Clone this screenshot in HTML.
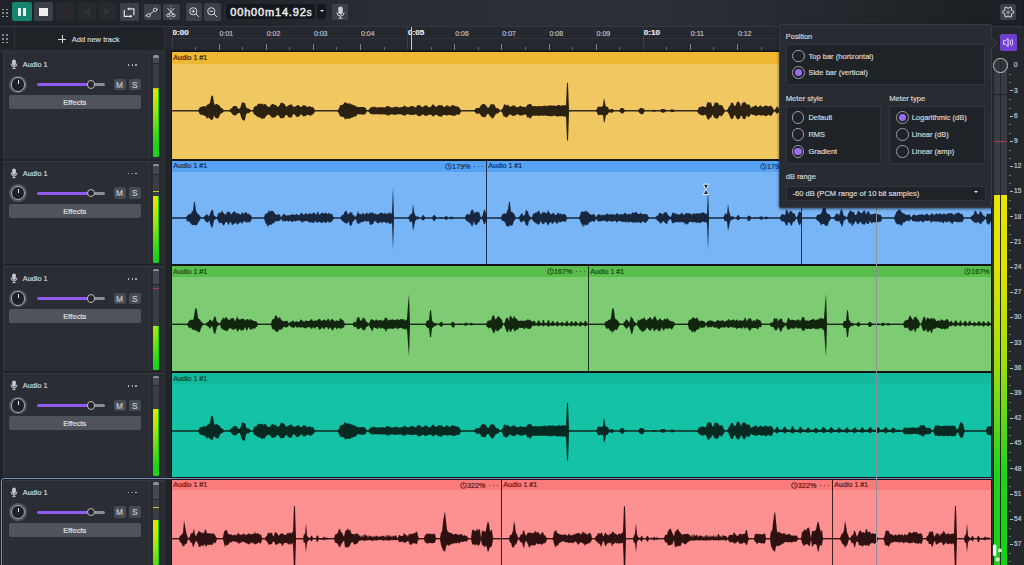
<!DOCTYPE html><html><head><meta charset="utf-8"><style>
*{box-sizing:border-box;margin:0;padding:0}
html,body{width:1024px;height:565px;overflow:hidden;background:#24272c;font-family:"Liberation Sans",sans-serif}
.a{position:absolute}
.btn{position:absolute;border-radius:2px}
.lbl{position:absolute;white-space:nowrap;line-height:1;-webkit-text-stroke:0.2px currentColor}
</style></head><body>

<div class="a" style="left:0;top:0;width:1024px;height:26px;background:linear-gradient(90deg,#1f2227 0px,#212429 240px,#292e34 380px,#2b3038 560px,#2a2f35 700px,#23272c 850px,#1d2025 960px,#1c1f24 1024px)"></div>
<div class="a" style="left:0;top:26px;width:1024px;height:1px;background:#33373d"></div>
<div class="a" style="left:2.3px;top:8.6px;width:1.6px;height:1.6px;background:#a9adb3;border-radius:1px"></div><div class="a" style="left:6.3px;top:8.6px;width:1.6px;height:1.6px;background:#a9adb3;border-radius:1px"></div><div class="a" style="left:2.3px;top:12.2px;width:1.6px;height:1.6px;background:#a9adb3;border-radius:1px"></div><div class="a" style="left:6.3px;top:12.2px;width:1.6px;height:1.6px;background:#a9adb3;border-radius:1px"></div><div class="a" style="left:2.3px;top:15.8px;width:1.6px;height:1.6px;background:#a9adb3;border-radius:1px"></div><div class="a" style="left:6.3px;top:15.8px;width:1.6px;height:1.6px;background:#a9adb3;border-radius:1px"></div>
<div class="btn" style="left:12.3px;top:2.4px;width:19.3px;height:18.8px;background:#16846f"><div class="a" style="left:5.6px;top:6px;width:2.9px;height:7.6px;background:#e8f3f1;border-radius:0.5px"></div><div class="a" style="left:10.6px;top:6px;width:2.9px;height:7.6px;background:#e8f3f1;border-radius:0.5px"></div></div>
<div class="btn" style="left:34.2px;top:2.4px;width:18.6px;height:18.8px;background:#3b3f46"><div class="a" style="left:5.3px;top:5.6px;width:8.2px;height:7.8px;background:#eef0f2;border-radius:0.5px"></div></div>
<div class="btn" style="left:55.6px;top:2.4px;width:18.4px;height:18.8px;background:#26292e"><div class="a" style="left:6px;top:6px;width:6.5px;height:6.5px;background:#33262a;border-radius:50%"></div></div>
<div class="btn" style="left:77.2px;top:2.4px;width:18.6px;height:18.8px;background:#26292e"><svg class="a" style="left:0;top:0" width="19" height="19"><path d="M6 5.5v8M13 5.5L7.5 9.5L13 13.5Z" fill="#33363b" stroke="#33363b" stroke-width="0.8"/></svg></div>
<div class="btn" style="left:98.8px;top:2.4px;width:16.8px;height:18.8px;background:#26292e"><svg class="a" style="left:0;top:0" width="19" height="19"><path d="M5.5 5.5L11 9.5L5.5 13.5Z" fill="#33363b"/></svg></div>
<div class="btn" style="left:119.9px;top:2.9px;width:18.7px;height:18px;background:#3b3f46"><svg class="a" style="left:0;top:0" width="19" height="19"><path d="M9 5.9H13.9V12.3M4.3 6.9V13.3H10.2" fill="none" stroke="#dfe2e5" stroke-width="1.2"/><path d="M7 5.9L9.4 4.2V7.6Z M12.4 13.3L10 11.6V15Z" fill="#dfe2e5"/></svg></div>
<div class="a" style="left:141.5px;top:3px;width:1px;height:18px;background:#282b30"></div>
<div class="btn" style="left:144.3px;top:3.9px;width:16.5px;height:16.1px;background:#3b3f46"><svg class="a" style="left:0;top:0" width="17" height="17"><path d="M1.2 11.9L3 11.6M6 10.2L9.7 7M12.6 5.5L14.2 5.3" fill="none" stroke="#d4d7da" stroke-width="1"/><circle cx="4.6" cy="11.3" r="1.7" fill="none" stroke="#d4d7da" stroke-width="1"/><circle cx="11.1" cy="5.8" r="1.7" fill="none" stroke="#d4d7da" stroke-width="1"/></svg></div>
<div class="btn" style="left:163.4px;top:3.9px;width:16.5px;height:15.8px;background:#3b3f46"><svg class="a" style="left:0;top:0" width="17" height="17"><path d="M7.9 1.5v14" stroke="#d4d7da" stroke-width="0.9" stroke-dasharray="1.1 1.4"/><path d="M4.6 4.2L10.6 10.6M11.2 4.2L5.2 10.6" stroke="#d4d7da" stroke-width="1"/><circle cx="5.2" cy="11.4" r="1.5" fill="none" stroke="#d4d7da" stroke-width="1"/><circle cx="10.6" cy="11.4" r="1.5" fill="none" stroke="#d4d7da" stroke-width="1"/></svg></div>
<div class="a" style="left:182.7px;top:3px;width:1px;height:18px;background:#282b30"></div>
<div class="btn" style="left:185.7px;top:3px;width:16.3px;height:17.6px;background:#3b3f46"><svg class="a" style="left:0;top:0" width="17" height="19"><circle cx="7.3" cy="8.3" r="3.6" fill="none" stroke="#d4d7da" stroke-width="1"/><path d="M10 11l3 3M5.6 8.3h3.4M7.3 6.6v3.4" stroke="#d4d7da" stroke-width="1"/></svg></div>
<div class="btn" style="left:204.3px;top:3px;width:16.6px;height:17.6px;background:#3b3f46"><svg class="a" style="left:0;top:0" width="17" height="19"><circle cx="7.3" cy="8.3" r="3.6" fill="none" stroke="#d4d7da" stroke-width="1"/><path d="M10 11l3 3M5.6 8.3h3.4" stroke="#d4d7da" stroke-width="1"/></svg></div>
<div class="a" style="left:223.6px;top:3px;width:1px;height:18px;background:#282b30"></div>
<div class="btn" style="left:226.2px;top:3.8px;width:89.2px;height:15.6px;background:#14171b"></div>
<div class="lbl" style="left:230.3px;top:6.6px;font-size:11px;font-weight:normal;color:#e8eaec;letter-spacing:0.82px;-webkit-text-stroke:0.5px #e8eaec">00h00m14.92<span style="font-size:10.5px;letter-spacing:0;-webkit-text-stroke:0.3px #e8eaec">s</span></div>
<div class="btn" style="left:317px;top:3.8px;width:9.3px;height:15.6px;background:#14171b"><div class="a" style="left:2.6px;top:6.6px;width:0;height:0;border-left:2.2px solid transparent;border-right:2.2px solid transparent;border-top:2.6px solid #e8eaec"></div></div>
<div class="btn" style="left:331.8px;top:3.8px;width:16.7px;height:16px;background:#3b3f46"><svg class="a" style="left:0;top:0" width="17" height="16"><rect x="6.2" y="2.5" width="4.6" height="8" rx="2.3" fill="#c9ccd0"/><path d="M4.8 8.5q0 3.5 3.7 3.5q3.7 0 3.7-3.5M8.5 12v2.2M6.5 14.2h4" fill="none" stroke="#c9ccd0" stroke-width="1"/></svg></div>
<div class="btn" style="left:1000px;top:3.9px;width:16.3px;height:16.3px;background:#3b3f46"><svg class="a" style="left:0;top:0" width="17" height="17"><path d="M13.65,8.15 L13.58,8.51 L13.37,8.84 L13.06,9.13 L12.69,9.37 L12.31,9.56 L11.97,9.73 L11.70,9.90 L11.53,10.10 L11.44,10.35 L11.43,10.67 L11.45,11.05 L11.47,11.47 L11.45,11.91 L11.36,12.33 L11.17,12.67 L10.90,12.91 L10.56,13.03 L10.17,13.01 L9.76,12.89 L9.37,12.69 L9.01,12.46 L8.69,12.25 L8.41,12.10 L8.15,12.05 L7.89,12.10 L7.61,12.25 L7.29,12.46 L6.93,12.69 L6.54,12.89 L6.13,13.01 L5.74,13.03 L5.40,12.91 L5.13,12.67 L4.94,12.33 L4.85,11.91 L4.83,11.47 L4.85,11.05 L4.87,10.67 L4.86,10.35 L4.77,10.10 L4.60,9.90 L4.33,9.73 L3.99,9.56 L3.61,9.37 L3.24,9.13 L2.93,8.84 L2.72,8.51 L2.65,8.15 L2.72,7.79 L2.93,7.46 L3.24,7.17 L3.61,6.93 L3.99,6.74 L4.33,6.57 L4.60,6.40 L4.77,6.20 L4.86,5.95 L4.87,5.63 L4.85,5.25 L4.83,4.83 L4.85,4.39 L4.94,3.97 L5.13,3.63 L5.40,3.39 L5.74,3.27 L6.13,3.29 L6.54,3.41 L6.93,3.61 L7.29,3.84 L7.61,4.05 L7.89,4.20 L8.15,4.25 L8.41,4.20 L8.69,4.05 L9.01,3.84 L9.37,3.61 L9.76,3.41 L10.17,3.29 L10.56,3.27 L10.90,3.39 L11.17,3.63 L11.36,3.97 L11.45,4.39 L11.47,4.83 L11.45,5.25 L11.43,5.63 L11.44,5.95 L11.53,6.20 L11.70,6.40 L11.97,6.57 L12.31,6.74 L12.69,6.93 L13.06,7.17 L13.37,7.46 L13.58,7.79Z" fill="none" stroke="#c9ccd0" stroke-width="1.1" stroke-linejoin="round"/><circle cx="8.15" cy="8.15" r="1.7" fill="#8d9197"/></svg></div>
<div class="a" style="left:1023px;top:0;width:1px;height:565px;background:#15171a"></div>
<div class="a" style="left:0;top:27px;width:164px;height:23px;background:#1f2226"></div>
<div class="a" style="left:13.5px;top:27px;width:1px;height:23px;background:#2e3237"></div>
<div class="a" style="left:0;top:49.5px;width:164px;height:1px;background:#33373d"></div>
<div class="a" style="left:2.2px;top:34.4px;width:1.6px;height:1.6px;background:#a9adb3;border-radius:1px"></div><div class="a" style="left:6.2px;top:34.4px;width:1.6px;height:1.6px;background:#a9adb3;border-radius:1px"></div><div class="a" style="left:2.2px;top:38.0px;width:1.6px;height:1.6px;background:#a9adb3;border-radius:1px"></div><div class="a" style="left:6.2px;top:38.0px;width:1.6px;height:1.6px;background:#a9adb3;border-radius:1px"></div><div class="a" style="left:2.2px;top:41.6px;width:1.6px;height:1.6px;background:#a9adb3;border-radius:1px"></div><div class="a" style="left:6.2px;top:41.6px;width:1.6px;height:1.6px;background:#a9adb3;border-radius:1px"></div>
<div class="a" style="left:58px;top:38.5px;width:8.4px;height:1.1px;background:#d6d9dc"></div><div class="a" style="left:61.65px;top:34.5px;width:1.1px;height:8.6px;background:#d6d9dc"></div>
<div class="lbl" style="left:71.7px;top:35.6px;font-size:7.55px;color:#cfd2d5">Add new track</div>
<div class="a" style="left:163.5px;top:27px;width:1px;height:538px;background:#2f3338"></div>
<div class="a" style="left:164.5px;top:27px;width:828px;height:24px;background:#25282e"></div>
<div class="a" style="left:171.5px;top:37.8px;width:821px;height:1px;background:#30343a"></div>
<div class="lbl" style="left:172.5px;top:29.0px;font-size:8.1px;font-weight:bold;color:#eceef0">0:00</div>
<div class="a" style="left:171.5px;top:27px;width:1px;height:23px;background:#3a3e44"></div>
<div class="a" style="left:195.1px;top:46.5px;width:1px;height:3.5px;background:#6a6e74"></div>
<div class="lbl" style="left:219.6px;top:29.6px;font-size:7.0px;font-weight:normal;color:#b9bdc2">0:01</div>
<div class="a" style="left:218.6px;top:43.5px;width:1px;height:6.5px;background:#7d8187"></div>
<div class="a" style="left:242.2px;top:46.5px;width:1px;height:3.5px;background:#6a6e74"></div>
<div class="lbl" style="left:266.7px;top:29.6px;font-size:7.0px;font-weight:normal;color:#b9bdc2">0:02</div>
<div class="a" style="left:265.7px;top:43.5px;width:1px;height:6.5px;background:#7d8187"></div>
<div class="a" style="left:289.3px;top:46.5px;width:1px;height:3.5px;background:#6a6e74"></div>
<div class="lbl" style="left:313.9px;top:29.6px;font-size:7.0px;font-weight:normal;color:#b9bdc2">0:03</div>
<div class="a" style="left:312.9px;top:43.5px;width:1px;height:6.5px;background:#7d8187"></div>
<div class="a" style="left:336.4px;top:46.5px;width:1px;height:3.5px;background:#6a6e74"></div>
<div class="lbl" style="left:361.0px;top:29.6px;font-size:7.0px;font-weight:normal;color:#b9bdc2">0:04</div>
<div class="a" style="left:360.0px;top:43.5px;width:1px;height:6.5px;background:#7d8187"></div>
<div class="a" style="left:383.5px;top:46.5px;width:1px;height:3.5px;background:#6a6e74"></div>
<div class="lbl" style="left:408.1px;top:29.0px;font-size:8.1px;font-weight:bold;color:#eceef0">0:05</div>
<div class="a" style="left:407.1px;top:27px;width:1px;height:23px;background:#3a3e44"></div>
<div class="a" style="left:430.7px;top:46.5px;width:1px;height:3.5px;background:#6a6e74"></div>
<div class="lbl" style="left:455.2px;top:29.6px;font-size:7.0px;font-weight:normal;color:#b9bdc2">0:06</div>
<div class="a" style="left:454.2px;top:43.5px;width:1px;height:6.5px;background:#7d8187"></div>
<div class="a" style="left:477.8px;top:46.5px;width:1px;height:3.5px;background:#6a6e74"></div>
<div class="lbl" style="left:502.3px;top:29.6px;font-size:7.0px;font-weight:normal;color:#b9bdc2">0:07</div>
<div class="a" style="left:501.3px;top:43.5px;width:1px;height:6.5px;background:#7d8187"></div>
<div class="a" style="left:524.9px;top:46.5px;width:1px;height:3.5px;background:#6a6e74"></div>
<div class="lbl" style="left:549.5px;top:29.6px;font-size:7.0px;font-weight:normal;color:#b9bdc2">0:08</div>
<div class="a" style="left:548.5px;top:43.5px;width:1px;height:6.5px;background:#7d8187"></div>
<div class="a" style="left:572.0px;top:46.5px;width:1px;height:3.5px;background:#6a6e74"></div>
<div class="lbl" style="left:596.6px;top:29.6px;font-size:7.0px;font-weight:normal;color:#b9bdc2">0:09</div>
<div class="a" style="left:595.6px;top:43.5px;width:1px;height:6.5px;background:#7d8187"></div>
<div class="a" style="left:619.1px;top:46.5px;width:1px;height:3.5px;background:#6a6e74"></div>
<div class="lbl" style="left:643.7px;top:29.0px;font-size:8.1px;font-weight:bold;color:#eceef0">0:10</div>
<div class="a" style="left:642.7px;top:27px;width:1px;height:23px;background:#3a3e44"></div>
<div class="a" style="left:666.3px;top:46.5px;width:1px;height:3.5px;background:#6a6e74"></div>
<div class="lbl" style="left:690.8px;top:29.6px;font-size:7.0px;font-weight:normal;color:#b9bdc2">0:11</div>
<div class="a" style="left:689.8px;top:43.5px;width:1px;height:6.5px;background:#7d8187"></div>
<div class="a" style="left:713.4px;top:46.5px;width:1px;height:3.5px;background:#6a6e74"></div>
<div class="lbl" style="left:737.9px;top:29.6px;font-size:7.0px;font-weight:normal;color:#b9bdc2">0:12</div>
<div class="a" style="left:736.9px;top:43.5px;width:1px;height:6.5px;background:#7d8187"></div>
<div class="a" style="left:760.5px;top:46.5px;width:1px;height:3.5px;background:#6a6e74"></div>
<div class="a" style="left:411.2px;top:27px;width:1px;height:23px;background:#c9ccd0"></div>
<div class="a" style="left:164.5px;top:50px;width:828px;height:1.5px;background:#1a1c20"></div>
<div class="a" style="left:164.5px;top:51px;width:827px;height:514px;background:#212429"></div>
<div class="a" style="left:171px;top:51px;width:820.5px;height:514px;background:#131519"></div>
<div class="a" style="left:0;top:51.5px;width:163.5px;height:108.0px;background:#1f2226"></div>
<div class="a" style="left:3px;top:52.0px;width:145.5px;height:106.5px;background:#2a2e34;border-top:1px solid #363a40;border-left:1px solid #33373d"></div>
<div class="a" style="left:148.5px;top:52.0px;width:15px;height:106.5px;background:#282b31;border-left:1px solid #33373d;border-top:1px solid #363a40"></div>
<svg class="a" style="left:9.8px;top:59.3px" width="8" height="11"><rect x="2.1" y="0.4" width="3.8" height="6.6" rx="1.9" fill="#c3c6ca"/><path d="M1 4.6q0 3.4 3 3.4q3 0 3-3.4M4 8v1.4M2.4 9.6h3.2" fill="none" stroke="#c3c6ca" stroke-width="0.95"/></svg>
<div class="lbl" style="left:22.8px;top:61px;font-size:7.3px;color:#d2d5d8">Audio 1</div>
<div class="a" style="left:127.6px;top:64.3px;width:1.5px;height:1.5px;background:#c9ccd0;border-radius:1px"></div>
<div class="a" style="left:131.5px;top:64.3px;width:1.5px;height:1.5px;background:#c9ccd0;border-radius:1px"></div>
<div class="a" style="left:135.4px;top:64.3px;width:1.5px;height:1.5px;background:#c9ccd0;border-radius:1px"></div>
<div class="a" style="left:9.4px;top:75.8px;width:17.4px;height:17.4px;border-radius:50%;background:#52565c"></div>
<div class="a" style="left:10.9px;top:77.3px;width:14.4px;height:14.4px;border-radius:50%;background:#1e2125;border:1.2px solid #a9adb2"></div>
<div class="a" style="left:17.7px;top:80px;width:1.1px;height:4.2px;background:#e6e8ea"></div>
<div class="a" style="left:37.1px;top:83px;width:54px;height:3px;border-radius:1.5px;background:#8e5cf0"></div>
<div class="a" style="left:90px;top:83px;width:14.8px;height:3px;border-radius:1.5px;background:#8a8d92"></div>
<div class="a" style="left:86.7px;top:80.4px;width:8.2px;height:8.2px;border-radius:50%;background:#24272c;border:1.1px solid #b6b9bd"></div>
<div class="btn" style="left:114.4px;top:78.5px;width:11.8px;height:11.8px;background:#464a51"><div class="lbl" style="left:1.6px;top:2.4px;font-size:8.4px;color:#c3c6ca">M</div></div>
<div class="btn" style="left:129.1px;top:78.5px;width:11.9px;height:11.8px;background:#464a51"><div class="lbl" style="left:3px;top:2.4px;font-size:8.4px;color:#c3c6ca">S</div></div>
<div class="btn" style="left:8.8px;top:95.3px;width:132.2px;height:14px;background:#4f535a"><div class="lbl" style="left:0;width:132px;text-align:center;top:3.8px;font-size:7.65px;color:#dde0e3">Effects</div></div>
<div class="a" style="left:0;top:160.0px;width:163.5px;height:104.5px;background:#1f2226"></div>
<div class="a" style="left:3px;top:160.5px;width:145.5px;height:103.0px;background:#2a2e34;border-top:1px solid #363a40;border-left:1px solid #33373d"></div>
<div class="a" style="left:148.5px;top:160.5px;width:15px;height:103.0px;background:#282b31;border-left:1px solid #33373d;border-top:1px solid #363a40"></div>
<svg class="a" style="left:9.8px;top:167.8px" width="8" height="11"><rect x="2.1" y="0.4" width="3.8" height="6.6" rx="1.9" fill="#c3c6ca"/><path d="M1 4.6q0 3.4 3 3.4q3 0 3-3.4M4 8v1.4M2.4 9.6h3.2" fill="none" stroke="#c3c6ca" stroke-width="0.95"/></svg>
<div class="lbl" style="left:22.8px;top:169.5px;font-size:7.3px;color:#d2d5d8">Audio 1</div>
<div class="a" style="left:127.6px;top:172.8px;width:1.5px;height:1.5px;background:#c9ccd0;border-radius:1px"></div>
<div class="a" style="left:131.5px;top:172.8px;width:1.5px;height:1.5px;background:#c9ccd0;border-radius:1px"></div>
<div class="a" style="left:135.4px;top:172.8px;width:1.5px;height:1.5px;background:#c9ccd0;border-radius:1px"></div>
<div class="a" style="left:9.4px;top:184.3px;width:17.4px;height:17.4px;border-radius:50%;background:#52565c"></div>
<div class="a" style="left:10.9px;top:185.8px;width:14.4px;height:14.4px;border-radius:50%;background:#1e2125;border:1.2px solid #a9adb2"></div>
<div class="a" style="left:17.7px;top:188.5px;width:1.1px;height:4.2px;background:#e6e8ea"></div>
<div class="a" style="left:37.1px;top:191.5px;width:54px;height:3px;border-radius:1.5px;background:#8e5cf0"></div>
<div class="a" style="left:90px;top:191.5px;width:14.8px;height:3px;border-radius:1.5px;background:#8a8d92"></div>
<div class="a" style="left:86.7px;top:188.9px;width:8.2px;height:8.2px;border-radius:50%;background:#24272c;border:1.1px solid #b6b9bd"></div>
<div class="btn" style="left:114.4px;top:187.0px;width:11.8px;height:11.8px;background:#464a51"><div class="lbl" style="left:1.6px;top:2.4px;font-size:8.4px;color:#c3c6ca">M</div></div>
<div class="btn" style="left:129.1px;top:187.0px;width:11.9px;height:11.8px;background:#464a51"><div class="lbl" style="left:3px;top:2.4px;font-size:8.4px;color:#c3c6ca">S</div></div>
<div class="btn" style="left:8.8px;top:203.8px;width:132.2px;height:14px;background:#4f535a"><div class="lbl" style="left:0;width:132px;text-align:center;top:3.8px;font-size:7.65px;color:#dde0e3">Effects</div></div>
<div class="a" style="left:0;top:265.5px;width:163.5px;height:106.5px;background:#1f2226"></div>
<div class="a" style="left:3px;top:266.0px;width:145.5px;height:105.0px;background:#2a2e34;border-top:1px solid #363a40;border-left:1px solid #33373d"></div>
<div class="a" style="left:148.5px;top:266.0px;width:15px;height:105.0px;background:#282b31;border-left:1px solid #33373d;border-top:1px solid #363a40"></div>
<svg class="a" style="left:9.8px;top:273.3px" width="8" height="11"><rect x="2.1" y="0.4" width="3.8" height="6.6" rx="1.9" fill="#c3c6ca"/><path d="M1 4.6q0 3.4 3 3.4q3 0 3-3.4M4 8v1.4M2.4 9.6h3.2" fill="none" stroke="#c3c6ca" stroke-width="0.95"/></svg>
<div class="lbl" style="left:22.8px;top:275px;font-size:7.3px;color:#d2d5d8">Audio 1</div>
<div class="a" style="left:127.6px;top:278.3px;width:1.5px;height:1.5px;background:#c9ccd0;border-radius:1px"></div>
<div class="a" style="left:131.5px;top:278.3px;width:1.5px;height:1.5px;background:#c9ccd0;border-radius:1px"></div>
<div class="a" style="left:135.4px;top:278.3px;width:1.5px;height:1.5px;background:#c9ccd0;border-radius:1px"></div>
<div class="a" style="left:9.4px;top:289.8px;width:17.4px;height:17.4px;border-radius:50%;background:#52565c"></div>
<div class="a" style="left:10.9px;top:291.3px;width:14.4px;height:14.4px;border-radius:50%;background:#1e2125;border:1.2px solid #a9adb2"></div>
<div class="a" style="left:17.7px;top:294px;width:1.1px;height:4.2px;background:#e6e8ea"></div>
<div class="a" style="left:37.1px;top:297px;width:54px;height:3px;border-radius:1.5px;background:#8e5cf0"></div>
<div class="a" style="left:90px;top:297px;width:14.8px;height:3px;border-radius:1.5px;background:#8a8d92"></div>
<div class="a" style="left:86.7px;top:294.4px;width:8.2px;height:8.2px;border-radius:50%;background:#24272c;border:1.1px solid #b6b9bd"></div>
<div class="btn" style="left:114.4px;top:292.5px;width:11.8px;height:11.8px;background:#464a51"><div class="lbl" style="left:1.6px;top:2.4px;font-size:8.4px;color:#c3c6ca">M</div></div>
<div class="btn" style="left:129.1px;top:292.5px;width:11.9px;height:11.8px;background:#464a51"><div class="lbl" style="left:3px;top:2.4px;font-size:8.4px;color:#c3c6ca">S</div></div>
<div class="btn" style="left:8.8px;top:309.3px;width:132.2px;height:14px;background:#4f535a"><div class="lbl" style="left:0;width:132px;text-align:center;top:3.8px;font-size:7.65px;color:#dde0e3">Effects</div></div>
<div class="a" style="left:0;top:372.5px;width:163.5px;height:105.69999999999999px;background:#1f2226"></div>
<div class="a" style="left:3px;top:373.0px;width:145.5px;height:104.19999999999999px;background:#2a2e34;border-top:1px solid #363a40;border-left:1px solid #33373d"></div>
<div class="a" style="left:148.5px;top:373.0px;width:15px;height:104.19999999999999px;background:#282b31;border-left:1px solid #33373d;border-top:1px solid #363a40"></div>
<svg class="a" style="left:9.8px;top:380.3px" width="8" height="11"><rect x="2.1" y="0.4" width="3.8" height="6.6" rx="1.9" fill="#c3c6ca"/><path d="M1 4.6q0 3.4 3 3.4q3 0 3-3.4M4 8v1.4M2.4 9.6h3.2" fill="none" stroke="#c3c6ca" stroke-width="0.95"/></svg>
<div class="lbl" style="left:22.8px;top:382px;font-size:7.3px;color:#d2d5d8">Audio 1</div>
<div class="a" style="left:127.6px;top:385.3px;width:1.5px;height:1.5px;background:#c9ccd0;border-radius:1px"></div>
<div class="a" style="left:131.5px;top:385.3px;width:1.5px;height:1.5px;background:#c9ccd0;border-radius:1px"></div>
<div class="a" style="left:135.4px;top:385.3px;width:1.5px;height:1.5px;background:#c9ccd0;border-radius:1px"></div>
<div class="a" style="left:9.4px;top:396.8px;width:17.4px;height:17.4px;border-radius:50%;background:#52565c"></div>
<div class="a" style="left:10.9px;top:398.3px;width:14.4px;height:14.4px;border-radius:50%;background:#1e2125;border:1.2px solid #a9adb2"></div>
<div class="a" style="left:17.7px;top:401px;width:1.1px;height:4.2px;background:#e6e8ea"></div>
<div class="a" style="left:37.1px;top:404px;width:54px;height:3px;border-radius:1.5px;background:#8e5cf0"></div>
<div class="a" style="left:90px;top:404px;width:14.8px;height:3px;border-radius:1.5px;background:#8a8d92"></div>
<div class="a" style="left:86.7px;top:401.4px;width:8.2px;height:8.2px;border-radius:50%;background:#24272c;border:1.1px solid #b6b9bd"></div>
<div class="btn" style="left:114.4px;top:399.5px;width:11.8px;height:11.8px;background:#464a51"><div class="lbl" style="left:1.6px;top:2.4px;font-size:8.4px;color:#c3c6ca">M</div></div>
<div class="btn" style="left:129.1px;top:399.5px;width:11.9px;height:11.8px;background:#464a51"><div class="lbl" style="left:3px;top:2.4px;font-size:8.4px;color:#c3c6ca">S</div></div>
<div class="btn" style="left:8.8px;top:416.3px;width:132.2px;height:14px;background:#4f535a"><div class="lbl" style="left:0;width:132px;text-align:center;top:3.8px;font-size:7.65px;color:#dde0e3">Effects</div></div>
<div class="a" style="left:0;top:479.1px;width:163.5px;height:85.89999999999998px;background:#1f2226"></div>
<div class="a" style="left:3px;top:479.6px;width:145.5px;height:85.39999999999998px;background:#2a2e34;border-top:1px solid #363a40;border-left:1px solid #33373d"></div>
<div class="a" style="left:148.5px;top:479.6px;width:15px;height:85.39999999999998px;background:#282b31;border-left:1px solid #33373d;border-top:1px solid #363a40"></div>
<svg class="a" style="left:9.8px;top:486.90000000000003px" width="8" height="11"><rect x="2.1" y="0.4" width="3.8" height="6.6" rx="1.9" fill="#c3c6ca"/><path d="M1 4.6q0 3.4 3 3.4q3 0 3-3.4M4 8v1.4M2.4 9.6h3.2" fill="none" stroke="#c3c6ca" stroke-width="0.95"/></svg>
<div class="lbl" style="left:22.8px;top:488.6px;font-size:7.3px;color:#d2d5d8">Audio 1</div>
<div class="a" style="left:127.6px;top:491.90000000000003px;width:1.5px;height:1.5px;background:#c9ccd0;border-radius:1px"></div>
<div class="a" style="left:131.5px;top:491.90000000000003px;width:1.5px;height:1.5px;background:#c9ccd0;border-radius:1px"></div>
<div class="a" style="left:135.4px;top:491.90000000000003px;width:1.5px;height:1.5px;background:#c9ccd0;border-radius:1px"></div>
<div class="a" style="left:9.4px;top:503.40000000000003px;width:17.4px;height:17.4px;border-radius:50%;background:#52565c"></div>
<div class="a" style="left:10.9px;top:504.90000000000003px;width:14.4px;height:14.4px;border-radius:50%;background:#1e2125;border:1.2px solid #a9adb2"></div>
<div class="a" style="left:17.7px;top:507.6px;width:1.1px;height:4.2px;background:#e6e8ea"></div>
<div class="a" style="left:37.1px;top:510.6px;width:54px;height:3px;border-radius:1.5px;background:#8e5cf0"></div>
<div class="a" style="left:90px;top:510.6px;width:14.8px;height:3px;border-radius:1.5px;background:#8a8d92"></div>
<div class="a" style="left:86.7px;top:508.0px;width:8.2px;height:8.2px;border-radius:50%;background:#24272c;border:1.1px solid #b6b9bd"></div>
<div class="btn" style="left:114.4px;top:506.1px;width:11.8px;height:11.8px;background:#464a51"><div class="lbl" style="left:1.6px;top:2.4px;font-size:8.4px;color:#c3c6ca">M</div></div>
<div class="btn" style="left:129.1px;top:506.1px;width:11.9px;height:11.8px;background:#464a51"><div class="lbl" style="left:3px;top:2.4px;font-size:8.4px;color:#c3c6ca">S</div></div>
<div class="btn" style="left:8.8px;top:522.9px;width:132.2px;height:14px;background:#4f535a"><div class="lbl" style="left:0;width:132px;text-align:center;top:3.8px;font-size:7.65px;color:#dde0e3">Effects</div></div>
<div class="a" style="left:153.4px;top:55px;width:5.4px;height:102px;background:#3a3e44;border-radius:1.5px"></div>
<div class="a" style="left:153.4px;top:55px;width:5.4px;height:2.6px;background:#8b8f95;border-radius:1.5px 1.5px 0 0"></div>
<div class="a" style="left:153.4px;top:57.6px;width:5.4px;height:5.4px;background:#45494f"></div>
<div class="a" style="left:153.4px;top:63px;width:5.4px;height:1px;background:#24272c"></div>
<div class="a" style="left:153.4px;top:89px;width:5.4px;height:68px;border-radius:0 0 1.5px 1.5px;background:linear-gradient(180deg,#e6e400 0px,#e0e200 28.2px,#a8e00c 47.0px,#22d31c 79.9px,#18d018 94px);background-size:5.4px 94px;background-position:0 -26.0px;background-repeat:no-repeat;background-color:#18d018"></div>
<div class="a" style="left:153.4px;top:163.8px;width:5.4px;height:98.69999999999999px;background:#3a3e44;border-radius:1.5px"></div>
<div class="a" style="left:153.4px;top:163.8px;width:5.4px;height:2.6px;background:#8b8f95;border-radius:1.5px 1.5px 0 0"></div>
<div class="a" style="left:153.4px;top:166.4px;width:5.4px;height:7.599999999999989px;background:#45494f"></div>
<div class="a" style="left:153.4px;top:174px;width:5.4px;height:1px;background:#24272c"></div>
<div class="a" style="left:153.4px;top:196px;width:5.4px;height:66.5px;border-radius:0 0 1.5px 1.5px;background:linear-gradient(180deg,#e6e400 0px,#e0e200 28.2px,#a8e00c 47.0px,#22d31c 79.9px,#18d018 94px);background-size:5.4px 94px;background-position:0 -22.0px;background-repeat:no-repeat;background-color:#18d018"></div>
<div class="a" style="left:153.4px;top:268.8px;width:5.4px;height:101.19999999999999px;background:#3a3e44;border-radius:1.5px"></div>
<div class="a" style="left:153.4px;top:268.8px;width:5.4px;height:2.6px;background:#8b8f95;border-radius:1.5px 1.5px 0 0"></div>
<div class="a" style="left:153.4px;top:271.40000000000003px;width:5.4px;height:12.999999999999966px;background:#45494f"></div>
<div class="a" style="left:153.4px;top:284.4px;width:5.4px;height:1px;background:#24272c"></div>
<div class="a" style="left:153.4px;top:326.3px;width:5.4px;height:43.69999999999999px;border-radius:0 0 1.5px 1.5px;background:linear-gradient(180deg,#e6e400 0px,#e0e200 28.2px,#a8e00c 47.0px,#22d31c 79.9px,#18d018 94px);background-size:5.4px 94px;background-position:0 -41.9px;background-repeat:no-repeat;background-color:#18d018"></div>
<div class="a" style="left:153.4px;top:375.8px;width:5.4px;height:100.19999999999999px;background:#3a3e44;border-radius:1.5px"></div>
<div class="a" style="left:153.4px;top:375.8px;width:5.4px;height:2.6px;background:#8b8f95;border-radius:1.5px 1.5px 0 0"></div>
<div class="a" style="left:153.4px;top:378.40000000000003px;width:5.4px;height:6.200000000000012px;background:#45494f"></div>
<div class="a" style="left:153.4px;top:384.6px;width:5.4px;height:1px;background:#24272c"></div>
<div class="a" style="left:153.4px;top:409px;width:5.4px;height:67px;border-radius:0 0 1.5px 1.5px;background:linear-gradient(180deg,#e6e400 0px,#e0e200 28.2px,#a8e00c 47.0px,#22d31c 79.9px,#18d018 94px);background-size:5.4px 94px;background-position:0 -24.4px;background-repeat:no-repeat;background-color:#18d018"></div>
<div class="a" style="left:153.4px;top:482.3px;width:5.4px;height:82.69999999999999px;background:#3a3e44;border-radius:1.5px"></div>
<div class="a" style="left:153.4px;top:482.3px;width:5.4px;height:2.6px;background:#8b8f95;border-radius:1.5px 1.5px 0 0"></div>
<div class="a" style="left:153.4px;top:484.90000000000003px;width:5.4px;height:14.099999999999989px;background:#45494f"></div>
<div class="a" style="left:153.4px;top:499px;width:5.4px;height:1px;background:#24272c"></div>
<div class="a" style="left:153.4px;top:520px;width:5.4px;height:45px;border-radius:0 0 1.5px 1.5px;background:linear-gradient(180deg,#e6e400 0px,#e0e200 28.2px,#a8e00c 47.0px,#22d31c 79.9px,#18d018 94px);background-size:5.4px 94px;background-position:0 -21.0px;background-repeat:no-repeat;background-color:#18d018"></div>
<div class="a" style="left:153.4px;top:288.2px;width:5.4px;height:1.2px;background:#b03a4a"></div>
<div class="a" style="left:153.4px;top:88.3px;width:5.4px;height:1.2px;background:#c9c41a"></div>
<div class="a" style="left:153.4px;top:191.2px;width:5.4px;height:1.2px;background:#c9c41a"></div>
<div class="a" style="left:153.4px;top:507.2px;width:5.4px;height:1.2px;background:#c9c41a"></div>
<div class="a" style="left:171.5px;top:52px;width:819.7px;height:106.5px;background:#f1c761;overflow:hidden">
<div class="a" style="left:0;top:0;width:819.7px;height:11.5px;background:#efb832"></div>
<div class="lbl" style="left:1.8px;top:3.05px;font-size:7.1px;color:#33270c">Audio 1 #1</div>
<svg class="a" style="left:0;top:0" width="819.7" height="106.5"><rect x="0" y="58.3" width="819.7" height="1" fill="#2a2110"/><path d="M0.0,58.3 L1.0,58.3 L2.0,58.3 L3.0,58.3 L4.0,58.3 L5.0,58.3 L6.0,58.3 L7.0,58.3 L8.0,58.3 L9.0,58.3 L10.0,58.3 L11.0,58.3 L12.0,58.3 L13.0,58.3 L14.0,58.3 L15.0,58.3 L16.0,58.3 L17.0,58.3 L18.0,58.3 L19.0,58.3 L20.0,58.3 L21.0,58.3 L22.0,58.3 L23.0,58.3 L24.0,58.3 L25.0,58.3 L26.0,58.3 L27.0,57.1 L28.0,54.9 L29.0,55.1 L30.0,55.1 L31.0,54.1 L32.0,54.3 L33.0,54.4 L34.0,54.5 L35.0,52.8 L36.0,52.6 L37.0,51.7 L38.0,51.0 L39.0,44.9 L40.0,43.3 L41.0,44.3 L42.0,51.1 L43.0,52.9 L44.0,51.9 L45.0,52.1 L46.0,52.8 L47.0,53.2 L48.0,54.2 L49.0,56.1 L50.0,56.1 L51.0,57.2 L52.0,58.3 L53.0,58.3 L54.0,58.3 L55.0,58.3 L56.0,58.3 L57.0,58.3 L58.0,57.5 L59.0,56.5 L60.0,56.1 L61.0,54.6 L62.0,53.9 L63.0,53.9 L64.0,54.1 L65.0,54.5 L66.0,56.7 L67.0,56.7 L68.0,56.3 L69.0,53.8 L70.0,50.0 L71.0,50.6 L72.0,51.2 L73.0,50.7 L74.0,54.7 L75.0,56.3 L76.0,56.4 L77.0,56.4 L78.0,57.6 L79.0,58.3 L80.0,58.3 L81.0,58.1 L82.0,55.0 L83.0,54.2 L84.0,54.3 L85.0,53.5 L86.0,51.6 L87.0,52.2 L88.0,51.6 L89.0,52.1 L90.0,51.3 L91.0,52.8 L92.0,52.2 L93.0,52.0 L94.0,52.5 L95.0,54.2 L96.0,54.4 L97.0,55.1 L98.0,54.6 L99.0,53.0 L100.0,52.1 L101.0,52.1 L102.0,52.4 L103.0,53.0 L104.0,53.0 L105.0,54.2 L106.0,54.9 L107.0,54.1 L108.0,52.6 L109.0,50.2 L110.0,51.0 L111.0,51.0 L112.0,51.6 L113.0,52.7 L114.0,54.8 L115.0,54.4 L116.0,53.7 L117.0,53.1 L118.0,52.8 L119.0,52.5 L120.0,52.5 L121.0,54.9 L122.0,54.5 L123.0,54.7 L124.0,54.1 L125.0,53.6 L126.0,53.1 L127.0,53.2 L128.0,54.8 L129.0,54.8 L130.0,54.8 L131.0,52.9 L132.0,53.6 L133.0,53.2 L134.0,54.1 L135.0,55.1 L136.0,55.1 L137.0,54.1 L138.0,54.2 L139.0,55.3 L140.0,54.9 L141.0,55.1 L142.0,56.4 L143.0,58.3 L144.0,58.3 L145.0,58.3 L146.0,58.3 L147.0,58.3 L148.0,58.3 L149.0,58.3 L150.0,58.3 L151.0,58.3 L152.0,58.3 L153.0,58.3 L154.0,58.3 L155.0,58.3 L156.0,58.3 L157.0,58.3 L158.0,58.3 L159.0,58.3 L160.0,58.3 L161.0,58.3 L162.0,58.3 L163.0,58.3 L164.0,58.3 L165.0,58.3 L166.0,57.9 L167.0,56.6 L168.0,53.6 L169.0,53.0 L170.0,53.1 L171.0,52.4 L172.0,51.2 L173.0,49.9 L174.0,51.0 L175.0,51.1 L176.0,52.0 L177.0,50.9 L178.0,51.6 L179.0,52.4 L180.0,52.3 L181.0,52.9 L182.0,53.6 L183.0,53.2 L184.0,54.4 L185.0,54.8 L186.0,55.0 L187.0,55.3 L188.0,55.1 L189.0,55.0 L190.0,55.0 L191.0,55.1 L192.0,54.9 L193.0,55.6 L194.0,56.6 L195.0,58.3 L196.0,58.3 L197.0,57.5 L198.0,56.0 L199.0,55.3 L200.0,55.5 L201.0,54.4 L202.0,55.2 L203.0,54.6 L204.0,55.5 L205.0,55.4 L206.0,55.3 L207.0,55.5 L208.0,55.1 L209.0,55.2 L210.0,55.2 L211.0,55.2 L212.0,55.3 L213.0,55.7 L214.0,54.5 L215.0,53.9 L216.0,54.0 L217.0,54.6 L218.0,54.7 L219.0,55.5 L220.0,55.4 L221.0,55.5 L222.0,54.8 L223.0,54.8 L224.0,54.9 L225.0,54.4 L226.0,55.6 L227.0,55.3 L228.0,55.5 L229.0,55.1 L230.0,55.1 L231.0,54.9 L232.0,53.5 L233.0,53.8 L234.0,54.4 L235.0,55.2 L236.0,55.1 L237.0,55.3 L238.0,54.5 L239.0,54.0 L240.0,53.9 L241.0,54.5 L242.0,54.2 L243.0,55.2 L244.0,55.8 L245.0,53.5 L246.0,53.1 L247.0,53.2 L248.0,53.3 L249.0,54.2 L250.0,55.3 L251.0,55.0 L252.0,53.9 L253.0,53.4 L254.0,53.4 L255.0,53.4 L256.0,55.1 L257.0,54.8 L258.0,55.4 L259.0,54.5 L260.0,53.3 L261.0,52.1 L262.0,53.3 L263.0,54.0 L264.0,54.9 L265.0,54.6 L266.0,53.7 L267.0,52.8 L268.0,53.5 L269.0,53.3 L270.0,53.1 L271.0,54.6 L272.0,55.0 L273.0,55.0 L274.0,53.5 L275.0,53.5 L276.0,53.6 L277.0,54.6 L278.0,54.6 L279.0,54.5 L280.0,52.8 L281.0,53.3 L282.0,53.6 L283.0,53.7 L284.0,54.4 L285.0,54.4 L286.0,54.3 L287.0,55.7 L288.0,56.5 L289.0,58.3 L290.0,58.3 L291.0,58.3 L292.0,58.3 L293.0,58.3 L294.0,58.3 L295.0,58.3 L296.0,58.3 L297.0,58.3 L298.0,58.3 L299.0,58.3 L300.0,58.3 L301.0,58.3 L302.0,58.3 L303.0,57.5 L304.0,56.1 L305.0,56.0 L306.0,56.1 L307.0,56.1 L308.0,55.1 L309.0,53.1 L310.0,52.5 L311.0,51.9 L312.0,52.1 L313.0,52.3 L314.0,53.4 L315.0,55.0 L316.0,55.8 L317.0,55.5 L318.0,53.5 L319.0,52.1 L320.0,52.4 L321.0,52.3 L322.0,52.3 L323.0,53.8 L324.0,56.2 L325.0,55.9 L326.0,56.3 L327.0,57.0 L328.0,58.3 L329.0,58.3 L330.0,57.0 L331.0,55.7 L332.0,52.5 L333.0,52.3 L334.0,53.4 L335.0,53.2 L336.0,52.6 L337.0,54.0 L338.0,54.9 L339.0,54.4 L340.0,53.8 L341.0,53.4 L342.0,53.5 L343.0,53.4 L344.0,55.2 L345.0,54.9 L346.0,55.1 L347.0,54.8 L348.0,53.9 L349.0,53.8 L350.0,54.9 L351.0,54.5 L352.0,55.0 L353.0,55.0 L354.0,54.9 L355.0,53.2 L356.0,52.5 L357.0,52.2 L358.0,51.9 L359.0,52.1 L360.0,53.7 L361.0,54.2 L362.0,54.3 L363.0,53.9 L364.0,54.2 L365.0,54.4 L366.0,53.9 L367.0,54.3 L368.0,54.1 L369.0,54.0 L370.0,54.4 L371.0,54.0 L372.0,53.5 L373.0,53.5 L374.0,54.6 L375.0,53.5 L376.0,54.0 L377.0,53.4 L378.0,53.5 L379.0,53.3 L380.0,53.7 L381.0,53.5 L382.0,53.4 L383.0,53.9 L384.0,53.9 L385.0,53.6 L386.0,53.1 L387.0,53.1 L388.0,53.3 L389.0,54.0 L390.0,53.4 L391.0,53.0 L392.0,53.5 L393.0,53.1 L394.0,53.6 L395.0,30.3 L396.0,31.5 L397.0,57.9 L398.0,58.3 L399.0,58.3 L400.0,58.3 L401.0,58.3 L402.0,58.3 L403.0,58.3 L404.0,58.3 L405.0,58.3 L406.0,58.3 L407.0,58.3 L408.0,58.3 L409.0,58.3 L410.0,58.3 L411.0,58.3 L412.0,58.3 L413.0,58.3 L414.0,58.3 L415.0,58.3 L416.0,58.3 L417.0,58.3 L418.0,58.3 L419.0,58.3 L420.0,58.3 L421.0,58.3 L422.0,58.3 L423.0,58.3 L424.0,58.3 L425.0,56.8 L426.0,54.4 L427.0,54.4 L428.0,55.0 L429.0,54.4 L430.0,54.8 L431.0,53.3 L432.0,45.5 L433.0,50.8 L434.0,55.1 L435.0,54.4 L436.0,54.9 L437.0,57.4 L438.0,57.7 L439.0,57.1 L440.0,57.0 L441.0,57.3 L442.0,58.2 L443.0,58.3 L444.0,58.3 L445.0,58.3 L446.0,58.3 L447.0,58.3 L448.0,57.2 L449.0,55.9 L450.0,56.0 L451.0,56.0 L452.0,57.2 L453.0,58.3 L454.0,58.3 L455.0,58.3 L456.0,58.3 L457.0,58.3 L458.0,58.3 L459.0,58.3 L460.0,58.3 L461.0,58.3 L462.0,58.3 L463.0,58.3 L464.0,58.3 L465.0,58.3 L466.0,58.3 L467.0,57.5 L468.0,55.9 L469.0,55.9 L470.0,56.2 L471.0,56.2 L472.0,57.1 L473.0,58.3 L474.0,58.3 L475.0,58.3 L476.0,58.3 L477.0,58.3 L478.0,58.3 L479.0,58.3 L480.0,58.3 L481.0,58.0 L482.0,57.8 L483.0,58.0 L484.0,58.2 L485.0,58.3 L486.0,58.3 L487.0,58.3 L488.0,58.3 L489.0,57.3 L490.0,57.0 L491.0,56.9 L492.0,57.0 L493.0,57.2 L494.0,58.3 L495.0,58.3 L496.0,58.3 L497.0,58.3 L498.0,58.2 L499.0,57.4 L500.0,57.3 L501.0,57.4 L502.0,57.8 L503.0,58.3 L504.0,58.3 L505.0,58.3 L506.0,58.3 L507.0,58.3 L508.0,58.3 L509.0,58.3 L510.0,58.3 L511.0,58.3 L512.0,58.3 L513.0,58.3 L514.0,58.3 L515.0,58.3 L516.0,58.3 L517.0,58.3 L518.0,58.3 L519.0,58.3 L520.0,58.3 L521.0,58.3 L522.0,58.3 L523.0,58.3 L524.0,58.3 L525.0,58.3 L526.0,57.4 L527.0,54.9 L528.0,55.2 L529.0,55.1 L530.0,54.2 L531.0,54.3 L532.0,54.8 L533.0,55.0 L534.0,55.3 L535.0,51.0 L536.0,50.3 L537.0,50.2 L538.0,50.9 L539.0,49.9 L540.0,54.0 L541.0,54.6 L542.0,53.0 L543.0,50.0 L544.0,50.8 L545.0,50.7 L546.0,50.8 L547.0,53.1 L548.0,53.3 L549.0,53.1 L550.0,52.9 L551.0,55.0 L552.0,56.8 L553.0,58.3 L554.0,58.3 L555.0,58.3 L556.0,56.6 L557.0,54.4 L558.0,54.0 L559.0,50.8 L560.0,50.7 L561.0,50.8 L562.0,53.5 L563.0,54.3 L564.0,52.6 L565.0,49.9 L566.0,49.4 L567.0,50.0 L568.0,51.6 L569.0,54.7 L570.0,51.4 L571.0,50.5 L572.0,50.3 L573.0,50.1 L574.0,51.6 L575.0,53.1 L576.0,52.0 L577.0,52.7 L578.0,53.5 L579.0,56.4 L580.0,54.6 L581.0,55.1 L582.0,54.4 L583.0,53.4 L584.0,53.5 L585.0,53.9 L586.0,55.6 L587.0,54.4 L588.0,53.5 L589.0,53.4 L590.0,54.9 L591.0,54.4 L592.0,54.4 L593.0,53.5 L594.0,53.4 L595.0,54.1 L596.0,54.3 L597.0,54.4 L598.0,53.8 L599.0,53.7 L600.0,54.7 L601.0,55.9 L602.0,58.3 L603.0,57.5 L604.0,55.8 L605.0,54.5 L606.0,54.8 L607.0,57.5 L608.0,57.6 L609.0,57.7 L610.0,57.7 L611.0,56.7 L612.0,55.2 L613.0,54.5 L614.0,55.7 L615.0,57.3 L616.0,57.6 L617.0,57.6 L618.0,57.6 L619.0,57.0 L620.0,54.0 L621.0,54.5 L622.0,56.5 L623.0,57.7 L624.0,57.7 L625.0,57.8 L626.0,57.7 L627.0,56.4 L628.0,54.3 L629.0,55.1 L630.0,56.2 L631.0,57.7 L632.0,57.7 L633.0,57.7 L634.0,57.6 L635.0,56.5 L636.0,54.9 L637.0,55.7 L638.0,57.5 L639.0,57.7 L640.0,57.7 L641.0,57.6 L642.0,57.1 L643.0,55.9 L644.0,55.6 L645.0,56.3 L646.0,57.6 L647.0,57.6 L648.0,57.7 L649.0,57.7 L650.0,56.4 L651.0,54.9 L652.0,55.1 L653.0,56.2 L654.0,57.6 L655.0,57.6 L656.0,57.7 L657.0,57.7 L658.0,55.9 L659.0,54.8 L660.0,55.4 L661.0,57.0 L662.0,57.8 L663.0,57.7 L664.0,57.7 L665.0,57.7 L666.0,56.5 L667.0,55.2 L668.0,55.8 L669.0,57.3 L670.0,57.6 L671.0,57.7 L672.0,57.9 L673.0,57.4 L674.0,56.2 L675.0,55.1 L676.0,55.9 L677.0,57.6 L678.0,57.8 L679.0,57.7 L680.0,57.7 L681.0,57.0 L682.0,55.8 L683.0,55.2 L684.0,56.2 L685.0,57.7 L686.0,57.8 L687.0,57.6 L688.0,57.6 L689.0,56.5 L690.0,54.9 L691.0,55.5 L692.0,57.1 L693.0,57.6 L694.0,57.8 L695.0,57.6 L696.0,57.5 L697.0,56.2 L698.0,54.7 L699.0,55.4 L700.0,57.2 L701.0,57.6 L702.0,57.7 L703.0,57.8 L704.0,57.1 L705.0,55.8 L706.0,55.1 L707.0,55.4 L708.0,57.6 L709.0,57.6 L710.0,57.6 L711.0,57.7 L712.0,56.7 L713.0,55.5 L714.0,55.0 L715.0,56.2 L716.0,57.6 L717.0,57.6 L718.0,57.6 L719.0,57.7 L720.0,56.1 L721.0,55.3 L722.0,55.6 L723.0,57.0 L724.0,57.9 L725.0,57.7 L726.0,57.7 L727.0,57.7 L728.0,57.7 L729.0,58.0 L730.0,58.3 L731.0,57.3 L732.0,55.4 L733.0,55.4 L734.0,55.8 L735.0,55.3 L736.0,56.1 L737.0,56.0 L738.0,55.4 L739.0,55.6 L740.0,55.5 L741.0,55.3 L742.0,55.5 L743.0,56.0 L744.0,55.4 L745.0,55.7 L746.0,55.3 L747.0,55.4 L748.0,53.3 L749.0,52.9 L750.0,53.3 L751.0,52.9 L752.0,53.0 L753.0,54.2 L754.0,55.7 L755.0,55.6 L756.0,55.9 L757.0,55.6 L758.0,55.6 L759.0,57.2 L760.0,58.3 L761.0,58.3 L762.0,56.3 L763.0,53.5 L764.0,53.5 L765.0,53.4 L766.0,53.5 L767.0,53.3 L768.0,54.0 L769.0,54.1 L770.0,53.9 L771.0,54.0 L772.0,53.5 L773.0,53.7 L774.0,53.6 L775.0,53.4 L776.0,53.9 L777.0,53.4 L778.0,53.8 L779.0,53.4 L780.0,53.7 L781.0,53.3 L782.0,53.7 L783.0,53.8 L784.0,55.7 L785.0,57.6 L786.0,56.8 L787.0,54.2 L788.0,50.8 L789.0,50.0 L790.0,50.8 L791.0,51.7 L792.0,55.7 L793.0,58.3 L794.0,58.3 L795.0,58.3 L796.0,58.3 L797.0,58.3 L798.0,58.3 L799.0,58.3 L800.0,58.3 L801.0,58.3 L802.0,58.3 L803.0,58.3 L804.0,58.3 L805.0,58.3 L806.0,58.3 L807.0,58.3 L808.0,58.3 L809.0,58.3 L810.0,58.3 L811.0,58.3 L812.0,58.3 L813.0,58.3 L814.0,57.9 L815.0,55.2 L816.0,54.1 L817.0,54.4 L818.0,54.4 L819.0,54.0 L819.0,63.6 L818.0,62.6 L817.0,62.9 L816.0,62.8 L815.0,61.8 L814.0,59.4 L813.0,59.3 L812.0,59.3 L811.0,59.3 L810.0,59.3 L809.0,59.3 L808.0,59.3 L807.0,59.3 L806.0,59.3 L805.0,59.3 L804.0,59.3 L803.0,59.3 L802.0,59.3 L801.0,59.3 L800.0,59.3 L799.0,59.3 L798.0,59.3 L797.0,59.3 L796.0,59.3 L795.0,59.3 L794.0,59.3 L793.0,59.3 L792.0,61.1 L791.0,64.8 L790.0,65.9 L789.0,65.3 L788.0,65.2 L787.0,62.7 L786.0,60.1 L785.0,60.6 L784.0,63.4 L783.0,64.1 L782.0,64.2 L781.0,64.2 L780.0,64.2 L779.0,63.9 L778.0,64.0 L777.0,64.0 L776.0,64.2 L775.0,64.1 L774.0,63.5 L773.0,63.9 L772.0,64.3 L771.0,63.9 L770.0,63.5 L769.0,64.2 L768.0,63.5 L767.0,64.1 L766.0,64.0 L765.0,63.4 L764.0,64.0 L763.0,63.6 L762.0,61.1 L761.0,59.3 L760.0,59.3 L759.0,61.0 L758.0,62.1 L757.0,61.7 L756.0,62.3 L755.0,62.2 L754.0,61.7 L753.0,62.8 L752.0,63.7 L751.0,64.7 L750.0,64.0 L749.0,63.1 L748.0,62.9 L747.0,62.6 L746.0,62.2 L745.0,61.6 L744.0,62.2 L743.0,62.1 L742.0,61.5 L741.0,62.0 L740.0,62.2 L739.0,62.2 L738.0,62.0 L737.0,62.3 L736.0,61.6 L735.0,62.3 L734.0,62.0 L733.0,62.3 L732.0,61.6 L731.0,60.3 L730.0,59.3 L729.0,59.4 L728.0,59.9 L727.0,59.9 L726.0,59.9 L725.0,59.9 L724.0,59.7 L723.0,59.9 L722.0,60.9 L721.0,61.3 L720.0,60.3 L719.0,59.9 L718.0,59.9 L717.0,60.0 L716.0,60.0 L715.0,60.4 L714.0,61.3 L713.0,61.2 L712.0,60.1 L711.0,59.9 L710.0,59.9 L709.0,59.8 L708.0,59.9 L707.0,60.5 L706.0,61.0 L705.0,60.8 L704.0,59.7 L703.0,60.0 L702.0,59.9 L701.0,59.7 L700.0,59.9 L699.0,60.9 L698.0,61.1 L697.0,60.7 L696.0,60.0 L695.0,60.0 L694.0,60.0 L693.0,59.9 L692.0,59.9 L691.0,60.7 L690.0,60.9 L689.0,60.1 L688.0,59.9 L687.0,59.8 L686.0,60.0 L685.0,60.0 L684.0,60.1 L683.0,60.9 L682.0,61.3 L681.0,59.9 L680.0,59.9 L679.0,59.9 L678.0,59.9 L677.0,60.0 L676.0,60.2 L675.0,61.2 L674.0,60.8 L673.0,59.8 L672.0,60.0 L671.0,60.0 L670.0,59.9 L669.0,59.8 L668.0,60.4 L667.0,61.1 L666.0,60.3 L665.0,60.0 L664.0,60.0 L663.0,59.9 L662.0,59.8 L661.0,60.0 L660.0,60.9 L659.0,61.3 L658.0,60.4 L657.0,59.9 L656.0,60.0 L655.0,59.8 L654.0,59.9 L653.0,60.4 L652.0,61.1 L651.0,61.0 L650.0,59.9 L649.0,59.8 L648.0,60.0 L647.0,59.9 L646.0,59.9 L645.0,60.8 L644.0,61.3 L643.0,60.9 L642.0,60.0 L641.0,60.0 L640.0,59.8 L639.0,60.0 L638.0,59.9 L637.0,60.6 L636.0,60.5 L635.0,60.8 L634.0,59.9 L633.0,59.9 L632.0,59.9 L631.0,59.8 L630.0,59.9 L629.0,61.4 L628.0,61.4 L627.0,60.3 L626.0,59.8 L625.0,59.9 L624.0,60.0 L623.0,59.9 L622.0,60.8 L621.0,61.1 L620.0,61.5 L619.0,60.4 L618.0,59.8 L617.0,60.0 L616.0,59.9 L615.0,60.0 L614.0,60.4 L613.0,61.5 L612.0,61.2 L611.0,59.7 L610.0,59.9 L609.0,60.0 L608.0,59.9 L607.0,60.0 L606.0,61.0 L605.0,61.7 L604.0,61.1 L603.0,59.6 L602.0,59.3 L601.0,61.2 L600.0,63.1 L599.0,64.1 L598.0,63.6 L597.0,63.2 L596.0,62.5 L595.0,64.2 L594.0,63.8 L593.0,64.2 L592.0,62.9 L591.0,63.2 L590.0,63.3 L589.0,64.0 L588.0,62.7 L587.0,63.0 L586.0,63.0 L585.0,63.8 L584.0,63.9 L583.0,63.5 L582.0,62.8 L581.0,62.7 L580.0,63.0 L579.0,61.4 L578.0,64.0 L577.0,64.5 L576.0,65.4 L575.0,63.3 L574.0,64.7 L573.0,67.4 L572.0,66.8 L571.0,66.9 L570.0,64.2 L569.0,63.2 L568.0,66.0 L567.0,66.9 L566.0,67.8 L565.0,66.4 L564.0,65.8 L563.0,62.9 L562.0,63.5 L561.0,66.9 L560.0,66.4 L559.0,67.2 L558.0,64.5 L557.0,62.4 L556.0,60.4 L555.0,59.3 L554.0,59.3 L553.0,59.3 L552.0,61.2 L551.0,62.4 L550.0,64.1 L549.0,64.6 L548.0,62.9 L547.0,64.3 L546.0,66.3 L545.0,66.8 L544.0,66.2 L543.0,66.3 L542.0,65.5 L541.0,62.8 L540.0,63.3 L539.0,66.0 L538.0,65.6 L537.0,67.8 L536.0,67.4 L535.0,66.2 L534.0,63.3 L533.0,62.6 L532.0,63.2 L531.0,63.6 L530.0,63.5 L529.0,62.8 L528.0,62.7 L527.0,61.9 L526.0,60.7 L525.0,59.3 L524.0,59.3 L523.0,59.3 L522.0,59.3 L521.0,59.3 L520.0,59.3 L519.0,59.3 L518.0,59.3 L517.0,59.3 L516.0,59.3 L515.0,59.3 L514.0,59.3 L513.0,59.3 L512.0,59.3 L511.0,59.3 L510.0,59.3 L509.0,59.3 L508.0,59.3 L507.0,59.3 L506.0,59.3 L505.0,59.3 L504.0,59.3 L503.0,59.3 L502.0,59.7 L501.0,60.1 L500.0,60.3 L499.0,60.0 L498.0,59.3 L497.0,59.3 L496.0,59.3 L495.0,59.3 L494.0,59.4 L493.0,60.1 L492.0,60.7 L491.0,60.8 L490.0,60.5 L489.0,59.8 L488.0,59.3 L487.0,59.3 L486.0,59.3 L485.0,59.3 L484.0,59.3 L483.0,59.7 L482.0,59.8 L481.0,59.8 L480.0,59.3 L479.0,59.3 L478.0,59.3 L477.0,59.3 L476.0,59.3 L475.0,59.3 L474.0,59.3 L473.0,59.3 L472.0,60.4 L471.0,62.1 L470.0,62.2 L469.0,62.2 L468.0,61.5 L467.0,60.6 L466.0,59.3 L465.0,59.3 L464.0,59.3 L463.0,59.3 L462.0,59.3 L461.0,59.3 L460.0,59.3 L459.0,59.3 L458.0,59.3 L457.0,59.3 L456.0,59.3 L455.0,59.3 L454.0,59.3 L453.0,59.3 L452.0,60.3 L451.0,61.6 L450.0,61.6 L449.0,61.1 L448.0,60.0 L447.0,59.3 L446.0,59.3 L445.0,59.3 L444.0,59.3 L443.0,59.3 L442.0,59.3 L441.0,60.3 L440.0,60.8 L439.0,60.7 L438.0,60.2 L437.0,60.2 L436.0,62.1 L435.0,62.9 L434.0,62.7 L433.0,68.4 L432.0,71.2 L431.0,63.0 L430.0,63.2 L429.0,62.7 L428.0,62.8 L427.0,63.2 L426.0,62.9 L425.0,60.6 L424.0,59.3 L423.0,59.3 L422.0,59.3 L421.0,59.3 L420.0,59.3 L419.0,59.3 L418.0,59.3 L417.0,59.3 L416.0,59.3 L415.0,59.3 L414.0,59.3 L413.0,59.3 L412.0,59.3 L411.0,59.3 L410.0,59.3 L409.0,59.3 L408.0,59.3 L407.0,59.3 L406.0,59.3 L405.0,59.3 L404.0,59.3 L403.0,59.3 L402.0,59.3 L401.0,59.3 L400.0,59.3 L399.0,59.3 L398.0,59.3 L397.0,60.0 L396.0,89.7 L395.0,87.2 L394.0,64.6 L393.0,64.5 L392.0,64.6 L391.0,64.3 L390.0,64.1 L389.0,64.1 L388.0,64.4 L387.0,64.1 L386.0,64.4 L385.0,64.5 L384.0,64.2 L383.0,63.7 L382.0,63.5 L381.0,64.1 L380.0,64.0 L379.0,64.2 L378.0,64.3 L377.0,64.0 L376.0,63.9 L375.0,64.0 L374.0,63.5 L373.0,63.4 L372.0,63.8 L371.0,63.7 L370.0,63.6 L369.0,63.6 L368.0,63.9 L367.0,63.7 L366.0,63.7 L365.0,63.6 L364.0,63.7 L363.0,63.8 L362.0,63.4 L361.0,63.7 L360.0,63.9 L359.0,66.2 L358.0,66.7 L357.0,65.0 L356.0,66.0 L355.0,64.7 L354.0,62.6 L353.0,62.5 L352.0,62.8 L351.0,63.1 L350.0,63.6 L349.0,63.6 L348.0,63.5 L347.0,63.2 L346.0,61.9 L345.0,62.5 L344.0,63.0 L343.0,63.6 L342.0,63.8 L341.0,64.1 L340.0,63.7 L339.0,62.8 L338.0,62.3 L337.0,63.0 L336.0,64.1 L335.0,65.6 L334.0,65.5 L333.0,64.3 L332.0,64.9 L331.0,62.9 L330.0,60.2 L329.0,59.3 L328.0,59.3 L327.0,60.4 L326.0,61.3 L325.0,61.8 L324.0,61.6 L323.0,63.4 L322.0,65.0 L321.0,66.4 L320.0,66.6 L319.0,65.1 L318.0,64.6 L317.0,62.5 L316.0,61.8 L315.0,62.2 L314.0,64.2 L313.0,65.4 L312.0,65.0 L311.0,64.9 L310.0,64.6 L309.0,64.1 L308.0,61.7 L307.0,61.5 L306.0,61.8 L305.0,61.7 L304.0,61.6 L303.0,60.0 L302.0,59.3 L301.0,59.3 L300.0,59.3 L299.0,59.3 L298.0,59.3 L297.0,59.3 L296.0,59.3 L295.0,59.3 L294.0,59.3 L293.0,59.3 L292.0,59.3 L291.0,59.3 L290.0,59.3 L289.0,59.3 L288.0,61.7 L287.0,63.1 L286.0,62.3 L285.0,63.1 L284.0,62.6 L283.0,64.0 L282.0,63.8 L281.0,63.8 L280.0,63.4 L279.0,63.2 L278.0,62.9 L277.0,63.3 L276.0,62.8 L275.0,64.0 L274.0,62.9 L273.0,63.1 L272.0,63.1 L271.0,62.9 L270.0,64.4 L269.0,64.9 L268.0,63.8 L267.0,64.7 L266.0,63.8 L265.0,62.7 L264.0,62.7 L263.0,62.9 L262.0,64.0 L261.0,64.4 L260.0,63.4 L259.0,62.7 L258.0,62.7 L257.0,62.7 L256.0,63.0 L255.0,63.7 L254.0,64.0 L253.0,63.8 L252.0,63.1 L251.0,62.6 L250.0,62.8 L249.0,63.8 L248.0,63.9 L247.0,64.3 L246.0,64.3 L245.0,62.9 L244.0,62.3 L243.0,62.5 L242.0,63.0 L241.0,62.8 L240.0,63.1 L239.0,62.8 L238.0,62.9 L237.0,62.6 L236.0,62.3 L235.0,62.0 L234.0,63.4 L233.0,63.3 L232.0,63.7 L231.0,63.0 L230.0,63.3 L229.0,61.9 L228.0,62.6 L227.0,62.3 L226.0,62.1 L225.0,62.6 L224.0,62.8 L223.0,63.0 L222.0,62.5 L221.0,62.4 L220.0,62.2 L219.0,62.5 L218.0,62.7 L217.0,63.5 L216.0,63.5 L215.0,63.2 L214.0,62.5 L213.0,62.4 L212.0,62.5 L211.0,62.2 L210.0,62.3 L209.0,62.4 L208.0,62.5 L207.0,62.2 L206.0,62.0 L205.0,62.4 L204.0,61.9 L203.0,62.5 L202.0,62.2 L201.0,62.3 L200.0,62.2 L199.0,62.1 L198.0,61.5 L197.0,60.3 L196.0,59.3 L195.0,59.3 L194.0,60.9 L193.0,62.5 L192.0,62.6 L191.0,62.6 L190.0,62.5 L189.0,62.6 L188.0,62.3 L187.0,62.4 L186.0,61.9 L185.0,62.7 L184.0,64.5 L183.0,64.7 L182.0,64.5 L181.0,65.2 L180.0,65.8 L179.0,65.8 L178.0,66.7 L177.0,66.8 L176.0,66.7 L175.0,66.6 L174.0,66.7 L173.0,67.7 L172.0,65.2 L171.0,65.1 L170.0,65.1 L169.0,64.3 L168.0,64.6 L167.0,61.8 L166.0,59.9 L165.0,59.3 L164.0,59.3 L163.0,59.3 L162.0,59.3 L161.0,59.3 L160.0,59.3 L159.0,59.3 L158.0,59.3 L157.0,59.3 L156.0,59.3 L155.0,59.3 L154.0,59.3 L153.0,59.3 L152.0,59.3 L151.0,59.3 L150.0,59.3 L149.0,59.3 L148.0,59.3 L147.0,59.3 L146.0,59.3 L145.0,59.3 L144.0,59.3 L143.0,59.3 L142.0,61.2 L141.0,62.5 L140.0,62.5 L139.0,63.8 L138.0,63.7 L137.0,63.1 L136.0,62.9 L135.0,62.4 L134.0,63.9 L133.0,64.1 L132.0,64.2 L131.0,64.5 L130.0,62.7 L129.0,62.2 L128.0,63.5 L127.0,64.5 L126.0,64.7 L125.0,65.1 L124.0,64.5 L123.0,62.7 L122.0,62.6 L121.0,62.0 L120.0,65.2 L119.0,65.3 L118.0,65.6 L117.0,65.5 L116.0,64.7 L115.0,63.1 L114.0,63.0 L113.0,64.0 L112.0,66.0 L111.0,66.0 L110.0,66.5 L109.0,65.9 L108.0,66.2 L107.0,63.4 L106.0,63.4 L105.0,62.9 L104.0,64.4 L103.0,65.5 L102.0,65.5 L101.0,65.6 L100.0,65.7 L99.0,64.7 L98.0,63.2 L97.0,62.8 L96.0,62.6 L95.0,63.4 L94.0,64.0 L93.0,66.1 L92.0,66.4 L91.0,66.4 L90.0,66.8 L89.0,66.6 L88.0,65.2 L87.0,65.2 L86.0,65.3 L85.0,64.2 L84.0,63.8 L83.0,62.4 L82.0,62.8 L81.0,59.4 L80.0,59.3 L79.0,59.3 L78.0,60.0 L77.0,61.2 L76.0,61.1 L75.0,61.2 L74.0,62.7 L73.0,67.7 L72.0,68.6 L71.0,68.6 L70.0,67.1 L69.0,65.1 L68.0,61.0 L67.0,61.0 L66.0,61.2 L65.0,62.0 L64.0,63.4 L63.0,63.5 L62.0,63.0 L61.0,63.2 L60.0,61.6 L59.0,60.6 L58.0,59.6 L57.0,59.3 L56.0,59.3 L55.0,59.3 L54.0,59.3 L53.0,59.3 L52.0,59.3 L51.0,60.3 L50.0,61.2 L49.0,61.4 L48.0,62.5 L47.0,65.3 L46.0,66.4 L45.0,66.2 L44.0,66.2 L43.0,65.2 L42.0,63.6 L41.0,67.3 L40.0,68.1 L39.0,67.4 L38.0,67.0 L37.0,66.0 L36.0,65.0 L35.0,67.0 L34.0,64.9 L33.0,63.5 L32.0,63.8 L31.0,63.1 L30.0,63.0 L29.0,62.6 L28.0,62.7 L27.0,60.6 L26.0,59.3 L25.0,59.3 L24.0,59.3 L23.0,59.3 L22.0,59.3 L21.0,59.3 L20.0,59.3 L19.0,59.3 L18.0,59.3 L17.0,59.3 L16.0,59.3 L15.0,59.3 L14.0,59.3 L13.0,59.3 L12.0,59.3 L11.0,59.3 L10.0,59.3 L9.0,59.3 L8.0,59.3 L7.0,59.3 L6.0,59.3 L5.0,59.3 L4.0,59.3 L3.0,59.3 L2.0,59.3 L1.0,59.3 L0.0,59.3Z" fill="#2a2110"/></svg>
</div>
<div class="a" style="left:171.5px;top:160.5px;width:315.0px;height:103.0px;background:#78b5f7;overflow:hidden">
<div class="a" style="left:0;top:0;width:315.0px;height:11px;background:#56a3f5"></div>
<div class="lbl" style="left:1.8px;top:2.8px;font-size:7.1px;color:#13305c">Audio 1 #1</div>
<svg class="a" style="left:0;top:0" width="315.0" height="103.0"><rect x="0" y="56.5" width="315.0" height="1" fill="#17253d"/><path d="M0.0,56.5 L1.0,56.5 L2.0,56.5 L3.0,56.5 L4.0,56.5 L5.0,56.5 L6.0,56.5 L7.0,56.5 L8.0,56.5 L9.0,56.5 L10.0,56.5 L11.0,56.5 L12.0,56.5 L13.0,56.5 L14.0,56.5 L15.0,54.9 L16.0,54.3 L17.0,53.0 L18.0,52.7 L19.0,53.1 L20.0,49.9 L21.0,50.6 L22.0,40.3 L23.0,41.5 L24.0,49.8 L25.0,51.5 L26.0,53.2 L27.0,53.4 L28.0,55.1 L29.0,56.5 L30.0,56.5 L31.0,56.5 L32.0,55.8 L33.0,54.9 L34.0,53.6 L35.0,53.5 L36.0,54.1 L37.0,55.4 L38.0,53.3 L39.0,50.2 L40.0,48.9 L41.0,49.1 L42.0,54.8 L43.0,55.1 L44.0,56.3 L45.0,56.0 L46.0,52.7 L47.0,51.9 L48.0,51.3 L49.0,52.2 L50.0,49.0 L51.0,51.5 L52.0,52.4 L53.0,53.6 L54.0,53.4 L55.0,50.8 L56.0,51.1 L57.0,50.5 L58.0,51.4 L59.0,53.4 L60.0,52.8 L61.0,50.9 L62.0,51.0 L63.0,49.8 L64.0,52.7 L65.0,51.8 L66.0,52.7 L67.0,52.2 L68.0,53.5 L69.0,53.4 L70.0,51.0 L71.0,52.2 L72.0,53.1 L73.0,51.2 L74.0,51.3 L75.0,52.0 L76.0,53.8 L77.0,52.1 L78.0,53.9 L79.0,54.2 L80.0,56.5 L81.0,56.5 L82.0,56.5 L83.0,56.5 L84.0,56.5 L85.0,56.5 L86.0,56.5 L87.0,56.5 L88.0,56.5 L89.0,56.5 L90.0,56.5 L91.0,56.5 L92.0,56.4 L93.0,53.1 L94.0,53.0 L95.0,52.0 L96.0,51.5 L97.0,49.1 L98.0,51.2 L99.0,49.4 L100.0,50.0 L101.0,50.1 L102.0,51.5 L103.0,52.4 L104.0,53.7 L105.0,54.1 L106.0,53.0 L107.0,53.5 L108.0,53.8 L109.0,56.5 L110.0,55.0 L111.0,53.5 L112.0,52.8 L113.0,53.5 L114.0,54.8 L115.0,54.4 L116.0,54.1 L117.0,54.5 L118.0,54.0 L119.0,53.9 L120.0,53.0 L121.0,53.6 L122.0,53.4 L123.0,54.0 L124.0,53.3 L125.0,52.8 L126.0,54.4 L127.0,53.8 L128.0,54.1 L129.0,51.4 L130.0,52.0 L131.0,53.3 L132.0,54.0 L133.0,52.4 L134.0,52.2 L135.0,53.0 L136.0,53.9 L137.0,51.4 L138.0,53.2 L139.0,52.1 L140.0,53.5 L141.0,51.9 L142.0,51.2 L143.0,52.4 L144.0,54.1 L145.0,52.0 L146.0,50.3 L147.0,53.5 L148.0,53.5 L149.0,52.3 L150.0,51.8 L151.0,51.7 L152.0,53.0 L153.0,51.4 L154.0,52.1 L155.0,52.8 L156.0,53.0 L157.0,51.6 L158.0,52.7 L159.0,53.3 L160.0,52.6 L161.0,55.2 L162.0,56.5 L163.0,56.5 L164.0,56.5 L165.0,56.5 L166.0,56.5 L167.0,56.5 L168.0,56.5 L169.0,55.7 L170.0,54.1 L171.0,54.2 L172.0,52.6 L173.0,50.4 L174.0,49.5 L175.0,51.0 L176.0,53.8 L177.0,52.8 L178.0,50.9 L179.0,52.0 L180.0,50.8 L181.0,54.7 L182.0,54.1 L183.0,55.9 L184.0,55.3 L185.0,53.3 L186.0,49.9 L187.0,53.2 L188.0,52.3 L189.0,53.7 L190.0,53.0 L191.0,51.2 L192.0,53.4 L193.0,53.3 L194.0,52.3 L195.0,51.6 L196.0,52.9 L197.0,52.8 L198.0,51.0 L199.0,52.5 L200.0,51.3 L201.0,51.4 L202.0,53.2 L203.0,52.3 L204.0,53.2 L205.0,53.6 L206.0,53.2 L207.0,53.2 L208.0,51.8 L209.0,52.1 L210.0,51.4 L211.0,52.3 L212.0,53.2 L213.0,51.2 L214.0,53.1 L215.0,53.2 L216.0,51.3 L217.0,53.3 L218.0,51.1 L219.0,53.0 L220.0,51.6 L221.0,25.9 L222.0,56.5 L223.0,56.5 L224.0,56.5 L225.0,56.5 L226.0,56.5 L227.0,56.5 L228.0,56.5 L229.0,56.5 L230.0,56.5 L231.0,56.5 L232.0,56.5 L233.0,56.5 L234.0,56.5 L235.0,56.5 L236.0,56.5 L237.0,55.6 L238.0,53.7 L239.0,52.8 L240.0,52.9 L241.0,42.8 L242.0,50.5 L243.0,53.6 L244.0,55.8 L245.0,55.3 L246.0,55.3 L247.0,56.5 L248.0,56.5 L249.0,56.5 L250.0,55.5 L251.0,54.0 L252.0,54.5 L253.0,56.5 L254.0,56.5 L255.0,56.5 L256.0,56.5 L257.0,56.5 L258.0,56.5 L259.0,56.5 L260.0,56.5 L261.0,55.1 L262.0,54.1 L263.0,54.3 L264.0,56.1 L265.0,56.5 L266.0,56.5 L267.0,56.5 L268.0,56.5 L269.0,56.0 L270.0,56.4 L271.0,56.5 L272.0,56.5 L273.0,55.8 L274.0,55.0 L275.0,55.5 L276.0,56.5 L277.0,56.5 L278.0,56.1 L279.0,55.7 L280.0,55.6 L281.0,56.5 L282.0,56.5 L283.0,56.5 L284.0,56.5 L285.0,56.5 L286.0,56.5 L287.0,56.5 L288.0,56.5 L289.0,56.5 L290.0,56.5 L291.0,56.5 L292.0,56.5 L293.0,56.5 L294.0,53.9 L295.0,53.3 L296.0,52.7 L297.0,54.1 L298.0,53.2 L299.0,49.1 L300.0,49.4 L301.0,48.1 L302.0,52.9 L303.0,51.0 L304.0,51.6 L305.0,50.3 L306.0,51.7 L307.0,50.6 L308.0,54.1 L309.0,56.5 L310.0,56.0 L311.0,53.1 L312.0,48.5 L313.0,48.9 L314.0,52.8 L315.0,49.6 L315.0,62.9 L314.0,60.3 L313.0,63.0 L312.0,63.4 L311.0,60.1 L310.0,57.9 L309.0,57.5 L308.0,59.2 L307.0,61.4 L306.0,61.2 L305.0,64.6 L304.0,63.1 L303.0,64.6 L302.0,59.9 L301.0,63.5 L300.0,66.0 L299.0,63.2 L298.0,62.3 L297.0,61.4 L296.0,60.7 L295.0,60.1 L294.0,59.4 L293.0,57.5 L292.0,57.5 L291.0,57.5 L290.0,57.5 L289.0,57.5 L288.0,57.5 L287.0,57.5 L286.0,57.5 L285.0,57.5 L284.0,57.5 L283.0,57.5 L282.0,57.5 L281.0,57.5 L280.0,58.2 L279.0,58.2 L278.0,57.7 L277.0,57.5 L276.0,57.5 L275.0,58.9 L274.0,58.4 L273.0,58.2 L272.0,57.5 L271.0,57.5 L270.0,57.8 L269.0,57.7 L268.0,57.7 L267.0,57.5 L266.0,57.5 L265.0,57.5 L264.0,58.1 L263.0,59.3 L262.0,60.5 L261.0,58.8 L260.0,57.5 L259.0,57.5 L258.0,57.5 L257.0,57.5 L256.0,57.5 L255.0,57.5 L254.0,57.5 L253.0,57.5 L252.0,59.0 L251.0,59.5 L250.0,59.1 L249.0,57.5 L248.0,57.5 L247.0,57.5 L246.0,58.6 L245.0,58.4 L244.0,58.8 L243.0,61.0 L242.0,65.7 L241.0,70.0 L240.0,60.3 L239.0,60.9 L238.0,61.3 L237.0,58.3 L236.0,57.5 L235.0,57.5 L234.0,57.5 L233.0,57.5 L232.0,57.5 L231.0,57.5 L230.0,57.5 L229.0,57.5 L228.0,57.5 L227.0,57.5 L226.0,57.5 L225.0,57.5 L224.0,57.5 L223.0,57.5 L222.0,57.5 L221.0,89.4 L220.0,60.9 L219.0,63.2 L218.0,62.4 L217.0,62.8 L216.0,61.1 L215.0,62.6 L214.0,61.8 L213.0,61.2 L212.0,61.1 L211.0,61.0 L210.0,62.5 L209.0,60.7 L208.0,61.6 L207.0,61.9 L206.0,62.2 L205.0,62.0 L204.0,60.3 L203.0,60.3 L202.0,60.4 L201.0,63.5 L200.0,62.8 L199.0,64.0 L198.0,63.9 L197.0,60.6 L196.0,59.8 L195.0,60.8 L194.0,60.6 L193.0,59.5 L192.0,60.7 L191.0,60.8 L190.0,60.9 L189.0,60.9 L188.0,62.4 L187.0,62.3 L186.0,62.8 L185.0,62.3 L184.0,58.2 L183.0,58.0 L182.0,60.1 L181.0,59.9 L180.0,63.5 L179.0,64.9 L178.0,64.8 L177.0,61.4 L176.0,60.5 L175.0,63.4 L174.0,61.5 L173.0,62.3 L172.0,61.6 L171.0,59.9 L170.0,60.0 L169.0,58.0 L168.0,57.5 L167.0,57.5 L166.0,57.5 L165.0,57.5 L164.0,57.5 L163.0,57.5 L162.0,57.5 L161.0,59.1 L160.0,60.0 L159.0,61.4 L158.0,60.9 L157.0,62.1 L156.0,60.0 L155.0,61.0 L154.0,62.1 L153.0,61.7 L152.0,61.1 L151.0,60.8 L150.0,62.6 L149.0,61.8 L148.0,60.8 L147.0,60.8 L146.0,61.4 L145.0,61.7 L144.0,60.7 L143.0,60.0 L142.0,62.0 L141.0,62.3 L140.0,60.9 L139.0,61.4 L138.0,61.6 L137.0,61.3 L136.0,60.4 L135.0,60.0 L134.0,60.1 L133.0,59.8 L132.0,60.8 L131.0,60.6 L130.0,61.9 L129.0,60.3 L128.0,59.4 L127.0,59.7 L126.0,59.5 L125.0,59.8 L124.0,59.9 L123.0,60.6 L122.0,59.6 L121.0,60.8 L120.0,61.1 L119.0,60.3 L118.0,59.6 L117.0,60.6 L116.0,60.4 L115.0,59.4 L114.0,59.8 L113.0,61.0 L112.0,59.5 L111.0,60.5 L110.0,59.4 L109.0,57.5 L108.0,60.0 L107.0,59.5 L106.0,60.4 L105.0,60.0 L104.0,60.6 L103.0,60.2 L102.0,62.4 L101.0,61.9 L100.0,63.1 L99.0,64.0 L98.0,63.8 L97.0,63.8 L96.0,66.2 L95.0,63.7 L94.0,63.0 L93.0,60.6 L92.0,57.5 L91.0,57.5 L90.0,57.5 L89.0,57.5 L88.0,57.5 L87.0,57.5 L86.0,57.5 L85.0,57.5 L84.0,57.5 L83.0,57.5 L82.0,57.5 L81.0,57.5 L80.0,57.5 L79.0,59.8 L78.0,61.0 L77.0,62.0 L76.0,60.0 L75.0,62.2 L74.0,60.7 L73.0,61.2 L72.0,59.8 L71.0,61.6 L70.0,63.0 L69.0,61.5 L68.0,61.1 L67.0,62.8 L66.0,62.5 L65.0,63.9 L64.0,60.9 L63.0,63.1 L62.0,62.2 L61.0,63.8 L60.0,64.2 L59.0,61.0 L58.0,60.9 L57.0,63.5 L56.0,63.7 L55.0,61.1 L54.0,60.9 L53.0,62.3 L52.0,64.6 L51.0,64.1 L50.0,62.5 L49.0,61.4 L48.0,62.5 L47.0,61.7 L46.0,60.1 L45.0,58.0 L44.0,57.5 L43.0,59.1 L42.0,58.9 L41.0,64.6 L40.0,67.0 L39.0,65.2 L38.0,62.3 L37.0,59.1 L36.0,61.8 L35.0,61.3 L34.0,60.9 L33.0,59.5 L32.0,57.8 L31.0,57.5 L30.0,57.5 L29.0,57.5 L28.0,58.6 L27.0,60.4 L26.0,61.9 L25.0,64.1 L24.0,64.3 L23.0,64.2 L22.0,64.1 L21.0,63.7 L20.0,64.2 L19.0,62.6 L18.0,61.9 L17.0,59.9 L16.0,60.4 L15.0,60.5 L14.0,57.5 L13.0,57.5 L12.0,57.5 L11.0,57.5 L10.0,57.5 L9.0,57.5 L8.0,57.5 L7.0,57.5 L6.0,57.5 L5.0,57.5 L4.0,57.5 L3.0,57.5 L2.0,57.5 L1.0,57.5 L0.0,57.5Z" fill="#17253d"/></svg>
<div class="lbl" style="left:273.5px;top:2.4px;font-size:7.2px;color:#13305c"><svg width="7" height="7" style="vertical-align:-0.8px"><circle cx="3.5" cy="3.5" r="2.8" fill="none" stroke="#13305c" stroke-width="0.9"/><path d="M3.5 1.8v1.9l1.2 0.8" fill="none" stroke="#13305c" stroke-width="0.8"/></svg>179%</div>
<div class="a" style="left:302.4px;top:5.3px;width:1.4px;height:1.4px;background:#13305c;border-radius:1px"></div>
<div class="a" style="left:306.5px;top:5.3px;width:1.4px;height:1.4px;background:#13305c;border-radius:1px"></div>
<div class="a" style="left:310.59999999999997px;top:5.3px;width:1.4px;height:1.4px;background:#13305c;border-radius:1px"></div>
</div>
<div class="a" style="left:486.5px;top:160.5px;width:315.0px;height:103.0px;background:#78b5f7;overflow:hidden">
<div class="a" style="left:0;top:0;width:315.0px;height:11px;background:#56a3f5"></div>
<div class="lbl" style="left:1.8px;top:2.8px;font-size:7.1px;color:#13305c">Audio 1 #1</div>
<svg class="a" style="left:0;top:0" width="315.0" height="103.0"><rect x="0" y="56.5" width="315.0" height="1" fill="#17253d"/><path d="M0.0,56.5 L1.0,56.5 L2.0,56.5 L3.0,56.5 L4.0,56.5 L5.0,56.5 L6.0,56.5 L7.0,56.5 L8.0,56.5 L9.0,56.5 L10.0,56.5 L11.0,56.5 L12.0,56.5 L13.0,56.5 L14.0,56.5 L15.0,54.0 L16.0,53.0 L17.0,52.2 L18.0,52.4 L19.0,53.0 L20.0,50.3 L21.0,48.5 L22.0,40.2 L23.0,41.2 L24.0,51.6 L25.0,50.2 L26.0,52.2 L27.0,52.3 L28.0,55.0 L29.0,56.5 L30.0,56.5 L31.0,56.5 L32.0,55.9 L33.0,54.6 L34.0,53.0 L35.0,51.9 L36.0,54.1 L37.0,55.1 L38.0,53.0 L39.0,48.3 L40.0,50.0 L41.0,50.4 L42.0,54.6 L43.0,55.3 L44.0,56.5 L45.0,56.2 L46.0,53.0 L47.0,52.4 L48.0,52.2 L49.0,51.0 L50.0,52.0 L51.0,50.0 L52.0,49.5 L53.0,52.1 L54.0,53.5 L55.0,52.1 L56.0,50.6 L57.0,52.3 L58.0,50.8 L59.0,52.3 L60.0,52.4 L61.0,48.6 L62.0,51.2 L63.0,52.2 L64.0,53.7 L65.0,52.7 L66.0,52.2 L67.0,51.7 L68.0,54.1 L69.0,53.9 L70.0,53.1 L71.0,51.1 L72.0,53.8 L73.0,52.0 L74.0,53.1 L75.0,53.6 L76.0,53.2 L77.0,52.7 L78.0,53.5 L79.0,54.3 L80.0,56.5 L81.0,56.5 L82.0,56.5 L83.0,56.5 L84.0,56.5 L85.0,56.5 L86.0,56.5 L87.0,56.5 L88.0,56.5 L89.0,56.5 L90.0,56.5 L91.0,56.5 L92.0,56.5 L93.0,54.5 L94.0,50.8 L95.0,50.3 L96.0,51.2 L97.0,50.1 L98.0,50.9 L99.0,48.8 L100.0,51.4 L101.0,50.4 L102.0,52.4 L103.0,53.1 L104.0,53.4 L105.0,54.2 L106.0,52.9 L107.0,53.0 L108.0,54.2 L109.0,56.5 L110.0,54.6 L111.0,53.4 L112.0,53.4 L113.0,53.2 L114.0,54.4 L115.0,54.3 L116.0,53.4 L117.0,54.5 L118.0,53.7 L119.0,53.5 L120.0,52.5 L121.0,53.0 L122.0,53.7 L123.0,53.6 L124.0,53.1 L125.0,53.6 L126.0,53.6 L127.0,53.2 L128.0,54.2 L129.0,53.1 L130.0,51.9 L131.0,53.1 L132.0,54.0 L133.0,53.2 L134.0,52.7 L135.0,53.4 L136.0,53.6 L137.0,52.4 L138.0,51.4 L139.0,52.7 L140.0,53.4 L141.0,53.3 L142.0,53.0 L143.0,52.7 L144.0,54.1 L145.0,51.2 L146.0,51.4 L147.0,52.0 L148.0,51.8 L149.0,50.5 L150.0,51.8 L151.0,52.9 L152.0,52.9 L153.0,52.8 L154.0,51.3 L155.0,53.5 L156.0,52.9 L157.0,53.2 L158.0,53.1 L159.0,53.3 L160.0,53.1 L161.0,55.1 L162.0,56.5 L163.0,56.5 L164.0,56.5 L165.0,56.5 L166.0,56.5 L167.0,56.5 L168.0,56.5 L169.0,56.1 L170.0,54.2 L171.0,55.1 L172.0,52.1 L173.0,52.0 L174.0,51.9 L175.0,52.9 L176.0,53.7 L177.0,51.5 L178.0,51.6 L179.0,51.1 L180.0,51.8 L181.0,54.3 L182.0,54.5 L183.0,55.9 L184.0,55.7 L185.0,52.9 L186.0,50.8 L187.0,52.9 L188.0,51.6 L189.0,53.1 L190.0,53.4 L191.0,53.0 L192.0,53.4 L193.0,53.8 L194.0,52.3 L195.0,51.6 L196.0,53.8 L197.0,53.4 L198.0,52.9 L199.0,52.3 L200.0,52.1 L201.0,52.5 L202.0,52.1 L203.0,52.5 L204.0,52.9 L205.0,54.0 L206.0,52.3 L207.0,52.4 L208.0,52.5 L209.0,52.9 L210.0,52.0 L211.0,52.3 L212.0,52.7 L213.0,52.4 L214.0,51.8 L215.0,52.1 L216.0,50.9 L217.0,52.2 L218.0,52.0 L219.0,53.5 L220.0,52.0 L221.0,26.6 L222.0,56.5 L223.0,56.5 L224.0,56.5 L225.0,56.5 L226.0,56.5 L227.0,56.5 L228.0,56.5 L229.0,56.5 L230.0,56.5 L231.0,56.5 L232.0,56.5 L233.0,56.5 L234.0,56.5 L235.0,56.5 L236.0,56.5 L237.0,55.3 L238.0,52.3 L239.0,52.5 L240.0,53.5 L241.0,42.8 L242.0,49.7 L243.0,53.5 L244.0,55.9 L245.0,55.3 L246.0,55.1 L247.0,56.4 L248.0,56.5 L249.0,56.5 L250.0,55.3 L251.0,53.9 L252.0,54.3 L253.0,56.5 L254.0,56.5 L255.0,56.5 L256.0,56.5 L257.0,56.5 L258.0,56.5 L259.0,56.5 L260.0,56.5 L261.0,54.9 L262.0,54.4 L263.0,55.0 L264.0,56.0 L265.0,56.5 L266.0,56.5 L267.0,56.5 L268.0,56.4 L269.0,56.2 L270.0,56.4 L271.0,56.5 L272.0,56.5 L273.0,55.3 L274.0,55.7 L275.0,55.2 L276.0,56.5 L277.0,56.5 L278.0,56.1 L279.0,55.8 L280.0,55.5 L281.0,56.5 L282.0,56.5 L283.0,56.5 L284.0,56.5 L285.0,56.5 L286.0,56.5 L287.0,56.5 L288.0,56.5 L289.0,56.5 L290.0,56.5 L291.0,56.5 L292.0,56.5 L293.0,56.5 L294.0,53.9 L295.0,53.0 L296.0,53.3 L297.0,53.4 L298.0,54.3 L299.0,49.1 L300.0,48.5 L301.0,50.9 L302.0,53.1 L303.0,49.1 L304.0,50.4 L305.0,50.3 L306.0,52.8 L307.0,51.8 L308.0,53.3 L309.0,56.5 L310.0,56.1 L311.0,53.6 L312.0,50.2 L313.0,51.2 L314.0,51.8 L315.0,51.0 L315.0,62.6 L314.0,61.6 L313.0,64.4 L312.0,63.6 L311.0,61.4 L310.0,57.8 L309.0,57.5 L308.0,60.1 L307.0,60.8 L306.0,60.8 L305.0,64.0 L304.0,64.7 L303.0,62.6 L302.0,60.7 L301.0,61.8 L300.0,65.3 L299.0,63.9 L298.0,61.7 L297.0,60.5 L296.0,60.2 L295.0,60.4 L294.0,59.8 L293.0,57.5 L292.0,57.5 L291.0,57.5 L290.0,57.5 L289.0,57.5 L288.0,57.5 L287.0,57.5 L286.0,57.5 L285.0,57.5 L284.0,57.5 L283.0,57.5 L282.0,57.5 L281.0,57.5 L280.0,58.0 L279.0,58.5 L278.0,57.9 L277.0,57.5 L276.0,57.5 L275.0,58.5 L274.0,59.1 L273.0,58.0 L272.0,57.5 L271.0,57.5 L270.0,57.7 L269.0,57.7 L268.0,57.7 L267.0,57.5 L266.0,57.5 L265.0,57.5 L264.0,57.7 L263.0,59.4 L262.0,60.1 L261.0,59.9 L260.0,57.5 L259.0,57.5 L258.0,57.5 L257.0,57.5 L256.0,57.5 L255.0,57.5 L254.0,57.5 L253.0,57.5 L252.0,59.0 L251.0,59.2 L250.0,58.7 L249.0,57.5 L248.0,57.5 L247.0,57.5 L246.0,58.5 L245.0,59.0 L244.0,58.6 L243.0,61.3 L242.0,65.7 L241.0,70.0 L240.0,60.3 L239.0,60.1 L238.0,60.8 L237.0,58.3 L236.0,57.5 L235.0,57.5 L234.0,57.5 L233.0,57.5 L232.0,57.5 L231.0,57.5 L230.0,57.5 L229.0,57.5 L228.0,57.5 L227.0,57.5 L226.0,57.5 L225.0,57.5 L224.0,57.5 L223.0,57.5 L222.0,57.5 L221.0,89.4 L220.0,62.0 L219.0,61.2 L218.0,61.6 L217.0,60.6 L216.0,60.7 L215.0,61.2 L214.0,61.2 L213.0,62.5 L212.0,61.5 L211.0,61.7 L210.0,61.3 L209.0,62.6 L208.0,60.7 L207.0,61.1 L206.0,61.8 L205.0,60.9 L204.0,60.7 L203.0,61.0 L202.0,61.1 L201.0,63.5 L200.0,63.3 L199.0,62.1 L198.0,64.1 L197.0,61.1 L196.0,61.5 L195.0,60.8 L194.0,61.8 L193.0,60.3 L192.0,62.1 L191.0,60.8 L190.0,61.1 L189.0,61.3 L188.0,60.9 L187.0,62.0 L186.0,62.6 L185.0,61.5 L184.0,58.4 L183.0,58.0 L182.0,59.2 L181.0,60.0 L180.0,63.6 L179.0,62.6 L178.0,61.9 L177.0,60.5 L176.0,60.0 L175.0,61.5 L174.0,62.2 L173.0,62.4 L172.0,60.6 L171.0,60.2 L170.0,59.1 L169.0,58.2 L168.0,57.5 L167.0,57.5 L166.0,57.5 L165.0,57.5 L164.0,57.5 L163.0,57.5 L162.0,57.5 L161.0,58.9 L160.0,60.5 L159.0,61.4 L158.0,62.3 L157.0,61.0 L156.0,60.0 L155.0,61.3 L154.0,61.8 L153.0,62.4 L152.0,60.4 L151.0,61.4 L150.0,61.5 L149.0,61.4 L148.0,61.4 L147.0,60.9 L146.0,62.3 L145.0,60.9 L144.0,60.7 L143.0,61.0 L142.0,61.3 L141.0,61.9 L140.0,59.7 L139.0,62.3 L138.0,60.6 L137.0,61.3 L136.0,60.4 L135.0,61.3 L134.0,60.1 L133.0,60.6 L132.0,59.7 L131.0,59.9 L130.0,62.1 L129.0,60.8 L128.0,59.4 L127.0,59.7 L126.0,60.9 L125.0,60.2 L124.0,60.7 L123.0,59.9 L122.0,59.8 L121.0,60.6 L120.0,61.3 L119.0,59.5 L118.0,60.6 L117.0,59.5 L116.0,59.4 L115.0,60.3 L114.0,60.0 L113.0,60.8 L112.0,60.3 L111.0,60.6 L110.0,59.3 L109.0,57.5 L108.0,60.5 L107.0,60.8 L106.0,60.3 L105.0,60.3 L104.0,60.7 L103.0,61.2 L102.0,61.4 L101.0,64.1 L100.0,64.0 L99.0,63.3 L98.0,65.6 L97.0,62.7 L96.0,66.5 L95.0,63.6 L94.0,62.1 L93.0,59.5 L92.0,57.5 L91.0,57.5 L90.0,57.5 L89.0,57.5 L88.0,57.5 L87.0,57.5 L86.0,57.5 L85.0,57.5 L84.0,57.5 L83.0,57.5 L82.0,57.5 L81.0,57.5 L80.0,57.5 L79.0,60.6 L78.0,60.8 L77.0,60.6 L76.0,59.9 L75.0,60.8 L74.0,60.9 L73.0,61.5 L72.0,60.2 L71.0,62.2 L70.0,62.4 L69.0,62.6 L68.0,59.7 L67.0,61.6 L66.0,62.2 L65.0,63.3 L64.0,60.6 L63.0,61.9 L62.0,62.4 L61.0,65.0 L60.0,62.4 L59.0,61.0 L58.0,61.2 L57.0,63.2 L56.0,62.4 L55.0,62.9 L54.0,59.9 L53.0,61.7 L52.0,63.4 L51.0,63.7 L50.0,62.6 L49.0,62.4 L48.0,61.4 L47.0,60.9 L46.0,59.7 L45.0,58.3 L44.0,57.5 L43.0,59.4 L42.0,59.5 L41.0,65.0 L40.0,63.9 L39.0,64.8 L38.0,61.5 L37.0,59.4 L36.0,60.1 L35.0,61.0 L34.0,61.6 L33.0,60.0 L32.0,57.5 L31.0,57.5 L30.0,57.5 L29.0,57.5 L28.0,58.7 L27.0,59.7 L26.0,63.0 L25.0,64.9 L24.0,64.5 L23.0,63.8 L22.0,66.0 L21.0,65.2 L20.0,64.9 L19.0,64.7 L18.0,61.1 L17.0,60.6 L16.0,59.8 L15.0,59.9 L14.0,57.5 L13.0,57.5 L12.0,57.5 L11.0,57.5 L10.0,57.5 L9.0,57.5 L8.0,57.5 L7.0,57.5 L6.0,57.5 L5.0,57.5 L4.0,57.5 L3.0,57.5 L2.0,57.5 L1.0,57.5 L0.0,57.5Z" fill="#17253d"/></svg>
<div class="lbl" style="left:273.5px;top:2.4px;font-size:7.2px;color:#13305c"><svg width="7" height="7" style="vertical-align:-0.8px"><circle cx="3.5" cy="3.5" r="2.8" fill="none" stroke="#13305c" stroke-width="0.9"/><path d="M3.5 1.8v1.9l1.2 0.8" fill="none" stroke="#13305c" stroke-width="0.8"/></svg>179%</div>
<div class="a" style="left:302.4px;top:5.3px;width:1.4px;height:1.4px;background:#13305c;border-radius:1px"></div>
<div class="a" style="left:306.5px;top:5.3px;width:1.4px;height:1.4px;background:#13305c;border-radius:1px"></div>
<div class="a" style="left:310.59999999999997px;top:5.3px;width:1.4px;height:1.4px;background:#13305c;border-radius:1px"></div>
</div>
<div class="a" style="left:485.5px;top:160.5px;width:1.5px;height:103.0px;background:#17253d;opacity:0.9"></div>
<div class="a" style="left:801.5px;top:160.5px;width:189.70000000000005px;height:103.0px;background:#78b5f7;overflow:hidden">
<div class="a" style="left:0;top:0;width:189.70000000000005px;height:11px;background:#56a3f5"></div>
<div class="lbl" style="left:1.8px;top:2.8px;font-size:7.1px;color:#13305c">Audio 1 #1</div>
<svg class="a" style="left:0;top:0" width="189.70000000000005" height="103.0"><rect x="0" y="56.5" width="189.70000000000005" height="1" fill="#17253d"/><path d="M0.0,56.5 L1.0,56.5 L2.0,56.5 L3.0,56.5 L4.0,56.5 L5.0,56.5 L6.0,56.5 L7.0,56.5 L8.0,56.5 L9.0,56.5 L10.0,56.5 L11.0,56.5 L12.0,56.5 L13.0,56.5 L14.0,56.5 L15.0,54.0 L16.0,53.9 L17.0,52.9 L18.0,53.4 L19.0,52.6 L20.0,50.2 L21.0,47.2 L22.0,40.4 L23.0,41.3 L24.0,49.9 L25.0,52.3 L26.0,53.3 L27.0,52.6 L28.0,54.2 L29.0,56.5 L30.0,56.5 L31.0,56.5 L32.0,56.0 L33.0,55.1 L34.0,53.0 L35.0,52.6 L36.0,52.5 L37.0,54.8 L38.0,51.6 L39.0,48.6 L40.0,48.2 L41.0,52.1 L42.0,55.3 L43.0,54.4 L44.0,56.5 L45.0,56.3 L46.0,53.1 L47.0,51.4 L48.0,49.1 L49.0,50.2 L50.0,50.5 L51.0,51.0 L52.0,51.1 L53.0,54.0 L54.0,53.9 L55.0,52.4 L56.0,49.6 L57.0,50.4 L58.0,51.0 L59.0,52.6 L60.0,52.1 L61.0,50.5 L62.0,49.4 L63.0,49.7 L64.0,53.4 L65.0,51.8 L66.0,50.3 L67.0,50.2 L68.0,53.4 L69.0,53.2 L70.0,53.2 L71.0,53.0 L72.0,52.8 L73.0,52.8 L74.0,52.1 L75.0,53.3 L76.0,53.0 L77.0,53.8 L78.0,53.4 L79.0,54.2 L80.0,56.5 L81.0,56.5 L82.0,56.5 L83.0,56.5 L84.0,56.5 L85.0,56.5 L86.0,56.5 L87.0,56.5 L88.0,56.5 L89.0,56.5 L90.0,56.5 L91.0,56.5 L92.0,56.5 L93.0,54.6 L94.0,51.8 L95.0,50.2 L96.0,49.8 L97.0,48.0 L98.0,48.7 L99.0,50.4 L100.0,51.2 L101.0,52.4 L102.0,51.9 L103.0,53.6 L104.0,53.6 L105.0,54.0 L106.0,54.0 L107.0,52.7 L108.0,54.4 L109.0,56.5 L110.0,55.1 L111.0,53.9 L112.0,53.3 L113.0,54.2 L114.0,54.4 L115.0,54.3 L116.0,54.0 L117.0,53.5 L118.0,53.7 L119.0,53.6 L120.0,53.5 L121.0,53.2 L122.0,54.3 L123.0,54.0 L124.0,53.1 L125.0,52.6 L126.0,53.3 L127.0,54.5 L128.0,54.2 L129.0,52.8 L130.0,52.7 L131.0,52.8 L132.0,54.4 L133.0,53.1 L134.0,53.3 L135.0,52.0 L136.0,53.5 L137.0,52.7 L138.0,52.5 L139.0,52.4 L140.0,53.8 L141.0,53.3 L142.0,52.0 L143.0,53.6 L144.0,53.2 L145.0,53.3 L146.0,52.0 L147.0,52.6 L148.0,51.9 L149.0,52.3 L150.0,52.2 L151.0,53.1 L152.0,54.3 L153.0,53.1 L154.0,52.3 L155.0,52.5 L156.0,51.2 L157.0,51.8 L158.0,52.5 L159.0,53.3 L160.0,52.4 L161.0,54.7 L162.0,56.5 L163.0,56.5 L164.0,56.5 L165.0,56.5 L166.0,56.5 L167.0,56.5 L168.0,56.5 L169.0,55.8 L170.0,54.2 L171.0,54.7 L172.0,52.1 L173.0,49.6 L174.0,50.1 L175.0,52.5 L176.0,53.6 L177.0,53.1 L178.0,49.7 L179.0,51.1 L180.0,51.7 L181.0,54.8 L182.0,54.2 L183.0,56.0 L184.0,55.7 L185.0,52.4 L186.0,52.5 L187.0,53.2 L188.0,52.4 L189.0,52.9 L189.0,59.9 L188.0,62.1 L187.0,64.3 L186.0,62.2 L185.0,63.5 L184.0,58.1 L183.0,57.8 L182.0,60.1 L181.0,60.3 L180.0,61.3 L179.0,63.7 L178.0,62.3 L177.0,62.6 L176.0,60.5 L175.0,61.6 L174.0,62.5 L173.0,61.1 L172.0,61.7 L171.0,60.2 L170.0,59.5 L169.0,58.2 L168.0,57.5 L167.0,57.5 L166.0,57.5 L165.0,57.5 L164.0,57.5 L163.0,57.5 L162.0,57.5 L161.0,59.9 L160.0,61.6 L159.0,60.6 L158.0,61.6 L157.0,60.9 L156.0,61.0 L155.0,61.5 L154.0,60.8 L153.0,60.5 L152.0,60.5 L151.0,62.3 L150.0,63.0 L149.0,61.2 L148.0,61.5 L147.0,59.8 L146.0,60.8 L145.0,61.6 L144.0,61.2 L143.0,60.1 L142.0,61.8 L141.0,62.3 L140.0,60.9 L139.0,60.4 L138.0,61.2 L137.0,61.3 L136.0,60.1 L135.0,60.4 L134.0,61.2 L133.0,59.9 L132.0,60.9 L131.0,59.7 L130.0,61.0 L129.0,62.0 L128.0,59.4 L127.0,59.7 L126.0,60.0 L125.0,60.0 L124.0,60.1 L123.0,59.6 L122.0,60.2 L121.0,61.7 L120.0,60.7 L119.0,59.8 L118.0,59.9 L117.0,60.7 L116.0,60.7 L115.0,60.5 L114.0,60.7 L113.0,60.3 L112.0,59.9 L111.0,60.6 L110.0,59.4 L109.0,57.5 L108.0,59.6 L107.0,60.6 L106.0,59.6 L105.0,59.8 L104.0,59.8 L103.0,61.3 L102.0,61.4 L101.0,61.6 L100.0,64.5 L99.0,64.5 L98.0,63.8 L97.0,62.5 L96.0,64.1 L95.0,62.8 L94.0,62.3 L93.0,60.0 L92.0,57.5 L91.0,57.5 L90.0,57.5 L89.0,57.5 L88.0,57.5 L87.0,57.5 L86.0,57.5 L85.0,57.5 L84.0,57.5 L83.0,57.5 L82.0,57.5 L81.0,57.5 L80.0,57.5 L79.0,60.9 L78.0,60.0 L77.0,61.5 L76.0,60.8 L75.0,61.5 L74.0,60.6 L73.0,62.1 L72.0,61.1 L71.0,61.3 L70.0,62.3 L69.0,62.1 L68.0,59.6 L67.0,62.5 L66.0,63.1 L65.0,63.1 L64.0,60.7 L63.0,63.2 L62.0,64.1 L61.0,62.8 L60.0,63.5 L59.0,60.4 L58.0,61.5 L57.0,62.0 L56.0,63.6 L55.0,62.8 L54.0,59.9 L53.0,60.7 L52.0,62.8 L51.0,64.0 L50.0,65.3 L49.0,61.5 L48.0,63.0 L47.0,62.1 L46.0,59.7 L45.0,58.1 L44.0,57.5 L43.0,59.4 L42.0,58.9 L41.0,63.3 L40.0,66.3 L39.0,63.0 L38.0,61.9 L37.0,59.5 L36.0,60.4 L35.0,60.3 L34.0,60.1 L33.0,59.2 L32.0,57.7 L31.0,57.5 L30.0,57.5 L29.0,57.5 L28.0,59.4 L27.0,60.0 L26.0,63.9 L25.0,64.9 L24.0,64.9 L23.0,64.5 L22.0,63.1 L21.0,62.7 L20.0,63.3 L19.0,64.4 L18.0,61.7 L17.0,60.8 L16.0,59.7 L15.0,59.4 L14.0,57.5 L13.0,57.5 L12.0,57.5 L11.0,57.5 L10.0,57.5 L9.0,57.5 L8.0,57.5 L7.0,57.5 L6.0,57.5 L5.0,57.5 L4.0,57.5 L3.0,57.5 L2.0,57.5 L1.0,57.5 L0.0,57.5Z" fill="#17253d"/></svg>
</div>
<div class="a" style="left:800.5px;top:160.5px;width:1.5px;height:103.0px;background:#17253d;opacity:0.9"></div>
<div class="a" style="left:171.5px;top:266px;width:417.0px;height:105px;background:#7dcb73;overflow:hidden">
<div class="a" style="left:0;top:0;width:417.0px;height:10.5px;background:#58bd4b"></div>
<div class="lbl" style="left:1.8px;top:2.55px;font-size:7.1px;color:#174a12">Audio 1 #1</div>
<svg class="a" style="left:0;top:0" width="417.0" height="105"><rect x="0" y="57.80000000000001" width="417.0" height="1" fill="#11250f"/><path d="M0.0,57.8 L1.0,57.8 L2.0,57.8 L3.0,57.8 L4.0,57.8 L5.0,57.8 L6.0,57.8 L7.0,57.8 L8.0,57.8 L9.0,57.8 L10.0,57.8 L11.0,57.8 L12.0,57.8 L13.0,57.8 L14.0,57.8 L15.0,57.8 L16.0,57.0 L17.0,54.8 L18.0,54.2 L19.0,53.6 L20.0,54.0 L21.0,54.1 L22.0,50.3 L23.0,43.4 L24.0,41.7 L25.0,44.2 L26.0,51.9 L27.0,53.2 L28.0,53.2 L29.0,55.7 L30.0,55.7 L31.0,57.7 L32.0,57.8 L33.0,57.8 L34.0,57.8 L35.0,55.9 L36.0,56.3 L37.0,54.8 L38.0,53.4 L39.0,54.1 L40.0,55.7 L41.0,54.5 L42.0,51.5 L43.0,50.0 L44.0,52.5 L45.0,56.3 L46.0,56.1 L47.0,57.3 L48.0,57.8 L49.0,54.8 L50.0,53.7 L51.0,51.2 L52.0,52.8 L53.0,52.6 L54.0,50.8 L55.0,51.7 L56.0,53.7 L57.0,53.6 L58.0,53.9 L59.0,51.9 L60.0,52.6 L61.0,51.7 L62.0,52.8 L63.0,55.5 L64.0,53.6 L65.0,50.2 L66.0,52.4 L67.0,53.3 L68.0,53.7 L69.0,52.9 L70.0,52.7 L71.0,52.7 L72.0,52.8 L73.0,54.7 L74.0,54.1 L75.0,53.0 L76.0,53.0 L77.0,54.7 L78.0,53.0 L79.0,53.3 L80.0,54.2 L81.0,54.4 L82.0,55.1 L83.0,55.3 L84.0,55.1 L85.0,56.5 L86.0,57.8 L87.0,57.8 L88.0,57.8 L89.0,57.8 L90.0,57.8 L91.0,57.8 L92.0,57.8 L93.0,57.8 L94.0,57.8 L95.0,57.8 L96.0,57.8 L97.0,57.8 L98.0,57.8 L99.0,57.4 L100.0,54.6 L101.0,52.4 L102.0,53.8 L103.0,49.9 L104.0,49.3 L105.0,50.3 L106.0,52.8 L107.0,51.4 L108.0,51.3 L109.0,53.5 L110.0,54.3 L111.0,55.6 L112.0,55.0 L113.0,54.9 L114.0,55.2 L115.0,54.4 L116.0,55.8 L117.0,57.8 L118.0,55.8 L119.0,55.9 L120.0,55.2 L121.0,54.3 L122.0,55.8 L123.0,55.8 L124.0,55.8 L125.0,54.8 L126.0,55.9 L127.0,55.9 L128.0,54.5 L129.0,53.3 L130.0,54.4 L131.0,55.0 L132.0,55.8 L133.0,55.2 L134.0,54.1 L135.0,55.1 L136.0,54.9 L137.0,54.9 L138.0,54.4 L139.0,53.6 L140.0,53.0 L141.0,55.5 L142.0,54.4 L143.0,55.0 L144.0,54.1 L145.0,54.9 L146.0,53.4 L147.0,53.1 L148.0,52.7 L149.0,54.7 L150.0,54.4 L151.0,54.6 L152.0,53.3 L153.0,54.1 L154.0,54.4 L155.0,54.5 L156.0,52.2 L157.0,53.6 L158.0,55.4 L159.0,53.6 L160.0,53.0 L161.0,53.6 L162.0,54.4 L163.0,55.8 L164.0,54.3 L165.0,54.5 L166.0,55.0 L167.0,55.0 L168.0,52.3 L169.0,52.8 L170.0,54.1 L171.0,53.7 L172.0,56.1 L173.0,57.8 L174.0,57.8 L175.0,57.8 L176.0,57.8 L177.0,57.8 L178.0,57.8 L179.0,57.8 L180.0,57.8 L181.0,57.5 L182.0,55.4 L183.0,56.2 L184.0,56.2 L185.0,52.3 L186.0,51.0 L187.0,51.3 L188.0,53.5 L189.0,55.2 L190.0,53.7 L191.0,51.0 L192.0,53.1 L193.0,51.9 L194.0,55.7 L195.0,55.5 L196.0,57.2 L197.0,57.4 L198.0,55.0 L199.0,53.5 L200.0,52.9 L201.0,53.9 L202.0,54.3 L203.0,54.9 L204.0,53.1 L205.0,53.9 L206.0,54.4 L207.0,54.5 L208.0,53.9 L209.0,53.8 L210.0,54.7 L211.0,54.6 L212.0,54.3 L213.0,51.5 L214.0,52.0 L215.0,51.9 L216.0,54.2 L217.0,54.6 L218.0,53.2 L219.0,53.9 L220.0,53.4 L221.0,53.2 L222.0,54.3 L223.0,54.1 L224.0,53.6 L225.0,54.0 L226.0,52.6 L227.0,54.3 L228.0,53.7 L229.0,52.8 L230.0,53.7 L231.0,53.0 L232.0,53.3 L233.0,54.7 L234.0,54.3 L235.0,52.8 L236.0,39.1 L237.0,27.9 L238.0,57.8 L239.0,57.8 L240.0,57.8 L241.0,57.8 L242.0,57.8 L243.0,57.8 L244.0,57.8 L245.0,57.8 L246.0,57.8 L247.0,57.8 L248.0,57.8 L249.0,57.8 L250.0,57.8 L251.0,57.8 L252.0,57.8 L253.0,57.8 L254.0,57.3 L255.0,54.1 L256.0,55.0 L257.0,54.0 L258.0,44.4 L259.0,44.1 L260.0,54.6 L261.0,55.6 L262.0,57.3 L263.0,56.8 L264.0,57.1 L265.0,57.8 L266.0,57.8 L267.0,57.8 L268.0,56.8 L269.0,56.1 L270.0,55.7 L271.0,57.7 L272.0,57.8 L273.0,57.8 L274.0,57.8 L275.0,57.8 L276.0,57.8 L277.0,57.8 L278.0,57.8 L279.0,57.8 L280.0,56.1 L281.0,55.4 L282.0,56.5 L283.0,57.7 L284.0,57.8 L285.0,57.8 L286.0,57.8 L287.0,57.8 L288.0,57.4 L289.0,57.4 L290.0,57.8 L291.0,57.8 L292.0,57.8 L293.0,56.9 L294.0,56.8 L295.0,56.6 L296.0,57.8 L297.0,57.8 L298.0,57.5 L299.0,56.7 L300.0,57.0 L301.0,57.8 L302.0,57.8 L303.0,57.8 L304.0,57.8 L305.0,57.8 L306.0,57.8 L307.0,57.8 L308.0,57.8 L309.0,57.8 L310.0,57.8 L311.0,57.8 L312.0,57.8 L313.0,57.8 L314.0,57.8 L315.0,56.1 L316.0,54.4 L317.0,54.9 L318.0,53.6 L319.0,54.9 L320.0,50.8 L321.0,49.5 L322.0,49.3 L323.0,52.7 L324.0,53.8 L325.0,51.1 L326.0,50.8 L327.0,49.9 L328.0,52.3 L329.0,52.4 L330.0,54.2 L331.0,57.6 L332.0,57.8 L333.0,55.7 L334.0,51.8 L335.0,52.2 L336.0,51.4 L337.0,55.3 L338.0,49.2 L339.0,50.6 L340.0,51.6 L341.0,53.2 L342.0,49.4 L343.0,51.4 L344.0,52.8 L345.0,52.9 L346.0,54.7 L347.0,54.8 L348.0,55.0 L349.0,54.4 L350.0,54.5 L351.0,55.3 L352.0,54.5 L353.0,54.8 L354.0,54.8 L355.0,54.1 L356.0,53.1 L357.0,54.6 L358.0,53.5 L359.0,54.8 L360.0,55.2 L361.0,55.7 L362.0,54.5 L363.0,55.2 L364.0,57.4 L365.0,57.1 L366.0,54.7 L367.0,54.3 L368.0,55.9 L369.0,57.2 L370.0,57.2 L371.0,53.6 L372.0,54.4 L373.0,57.5 L374.0,57.1 L375.0,56.7 L376.0,54.2 L377.0,54.2 L378.0,57.6 L379.0,57.0 L380.0,55.5 L381.0,54.7 L382.0,56.3 L383.0,57.2 L384.0,57.1 L385.0,54.9 L386.0,55.7 L387.0,57.1 L388.0,57.5 L389.0,56.4 L390.0,55.7 L391.0,56.4 L392.0,57.4 L393.0,57.2 L394.0,56.1 L395.0,54.2 L396.0,56.8 L397.0,57.5 L398.0,57.3 L399.0,55.4 L400.0,55.1 L401.0,57.0 L402.0,57.4 L403.0,55.5 L404.0,55.3 L405.0,56.5 L406.0,57.4 L407.0,57.5 L408.0,55.9 L409.0,55.2 L410.0,57.1 L411.0,57.2 L412.0,56.8 L413.0,54.8 L414.0,55.1 L415.0,57.3 L416.0,57.5 L417.0,55.9 L417.0,60.3 L416.0,59.2 L415.0,59.3 L414.0,59.9 L413.0,60.5 L412.0,59.3 L411.0,59.2 L410.0,59.1 L409.0,60.3 L408.0,60.6 L407.0,59.4 L406.0,59.1 L405.0,59.2 L404.0,60.5 L403.0,60.0 L402.0,59.5 L401.0,59.4 L400.0,59.5 L399.0,60.7 L398.0,59.3 L397.0,59.2 L396.0,59.4 L395.0,60.6 L394.0,59.9 L393.0,59.5 L392.0,59.2 L391.0,59.5 L390.0,60.5 L389.0,59.4 L388.0,59.2 L387.0,59.3 L386.0,60.3 L385.0,60.2 L384.0,59.4 L383.0,59.2 L382.0,59.4 L381.0,60.0 L380.0,59.9 L379.0,59.4 L378.0,59.4 L377.0,60.7 L376.0,60.6 L375.0,59.4 L374.0,59.3 L373.0,59.2 L372.0,60.1 L371.0,60.6 L370.0,59.3 L369.0,59.4 L368.0,59.4 L367.0,60.3 L366.0,60.2 L365.0,59.2 L364.0,59.5 L363.0,59.4 L362.0,60.2 L361.0,59.4 L360.0,60.1 L359.0,62.6 L358.0,62.8 L357.0,62.9 L356.0,62.4 L355.0,62.8 L354.0,61.2 L353.0,62.5 L352.0,63.6 L351.0,61.6 L350.0,62.0 L349.0,62.1 L348.0,61.7 L347.0,61.6 L346.0,63.4 L345.0,63.5 L344.0,63.8 L343.0,65.9 L342.0,64.2 L341.0,62.3 L340.0,63.6 L339.0,66.1 L338.0,65.7 L337.0,62.5 L336.0,66.6 L335.0,66.1 L334.0,63.9 L333.0,61.3 L332.0,58.8 L331.0,58.9 L330.0,61.4 L329.0,62.9 L328.0,62.2 L327.0,64.8 L326.0,64.5 L325.0,65.8 L324.0,63.3 L323.0,65.0 L322.0,67.8 L321.0,66.2 L320.0,63.8 L319.0,61.8 L318.0,61.6 L317.0,62.8 L316.0,61.5 L315.0,61.1 L314.0,58.8 L313.0,58.8 L312.0,58.8 L311.0,58.8 L310.0,58.8 L309.0,58.8 L308.0,58.8 L307.0,58.8 L306.0,58.8 L305.0,58.8 L304.0,58.8 L303.0,58.8 L302.0,58.8 L301.0,58.8 L300.0,59.3 L299.0,59.6 L298.0,58.9 L297.0,58.8 L296.0,58.8 L295.0,59.1 L294.0,60.0 L293.0,60.0 L292.0,58.8 L291.0,58.8 L290.0,58.8 L289.0,59.0 L288.0,59.3 L287.0,58.8 L286.0,58.8 L285.0,58.8 L284.0,58.8 L283.0,59.1 L282.0,61.7 L281.0,61.3 L280.0,61.2 L279.0,58.8 L278.0,58.8 L277.0,58.8 L276.0,58.8 L275.0,58.8 L274.0,58.8 L273.0,58.8 L272.0,58.8 L271.0,59.4 L270.0,60.2 L269.0,60.9 L268.0,60.0 L267.0,58.8 L266.0,58.8 L265.0,58.8 L264.0,59.4 L263.0,60.4 L262.0,59.9 L261.0,61.7 L260.0,62.0 L259.0,71.3 L258.0,71.0 L257.0,62.0 L256.0,62.3 L255.0,61.2 L254.0,59.9 L253.0,58.8 L252.0,58.8 L251.0,58.8 L250.0,58.8 L249.0,58.8 L248.0,58.8 L247.0,58.8 L246.0,58.8 L245.0,58.8 L244.0,58.8 L243.0,58.8 L242.0,58.8 L241.0,58.8 L240.0,58.8 L239.0,58.8 L238.0,58.8 L237.0,90.7 L236.0,78.1 L235.0,62.6 L234.0,64.2 L233.0,62.2 L232.0,64.0 L231.0,62.2 L230.0,62.6 L229.0,61.8 L228.0,62.1 L227.0,62.6 L226.0,62.3 L225.0,63.6 L224.0,61.5 L223.0,61.7 L222.0,62.8 L221.0,62.9 L220.0,62.6 L219.0,62.8 L218.0,62.4 L217.0,62.4 L216.0,63.2 L215.0,63.1 L214.0,66.2 L213.0,63.8 L212.0,62.4 L211.0,62.4 L210.0,61.5 L209.0,62.7 L208.0,62.6 L207.0,61.0 L206.0,62.8 L205.0,62.9 L204.0,62.1 L203.0,62.0 L202.0,61.1 L201.0,64.1 L200.0,65.6 L199.0,62.8 L198.0,62.1 L197.0,59.3 L196.0,59.8 L195.0,61.1 L194.0,61.3 L193.0,64.5 L192.0,63.8 L191.0,64.2 L190.0,62.9 L189.0,61.4 L188.0,62.2 L187.0,62.9 L186.0,63.5 L185.0,62.5 L184.0,60.5 L183.0,61.1 L182.0,61.2 L181.0,59.2 L180.0,58.8 L179.0,58.8 L178.0,58.8 L177.0,58.8 L176.0,58.8 L175.0,58.8 L174.0,58.8 L173.0,58.8 L172.0,61.2 L171.0,61.9 L170.0,61.4 L169.0,63.1 L168.0,62.7 L167.0,61.8 L166.0,61.8 L165.0,63.8 L164.0,61.8 L163.0,61.5 L162.0,62.3 L161.0,64.2 L160.0,64.4 L159.0,62.4 L158.0,61.2 L157.0,62.9 L156.0,63.3 L155.0,60.9 L154.0,61.1 L153.0,62.1 L152.0,63.6 L151.0,61.8 L150.0,61.3 L149.0,63.0 L148.0,63.3 L147.0,64.1 L146.0,61.0 L145.0,61.0 L144.0,61.1 L143.0,63.0 L142.0,61.4 L141.0,61.2 L140.0,62.9 L139.0,62.6 L138.0,61.3 L137.0,61.1 L136.0,61.8 L135.0,61.0 L134.0,62.8 L133.0,61.8 L132.0,62.2 L131.0,60.9 L130.0,61.6 L129.0,61.6 L128.0,61.4 L127.0,61.3 L126.0,60.8 L125.0,62.2 L124.0,60.5 L123.0,60.5 L122.0,61.8 L121.0,62.2 L120.0,60.8 L119.0,61.4 L118.0,60.1 L117.0,58.8 L116.0,61.1 L115.0,61.0 L114.0,61.9 L113.0,61.0 L112.0,60.8 L111.0,61.5 L110.0,63.6 L109.0,63.2 L108.0,63.7 L107.0,63.4 L106.0,66.1 L105.0,65.9 L104.0,65.4 L103.0,64.7 L102.0,62.8 L101.0,64.0 L100.0,62.1 L99.0,59.0 L98.0,58.8 L97.0,58.8 L96.0,58.8 L95.0,58.8 L94.0,58.8 L93.0,58.8 L92.0,58.8 L91.0,58.8 L90.0,58.8 L89.0,58.8 L88.0,58.8 L87.0,58.8 L86.0,58.8 L85.0,60.8 L84.0,61.1 L83.0,62.4 L82.0,62.9 L81.0,61.7 L80.0,63.8 L79.0,62.9 L78.0,64.0 L77.0,61.1 L76.0,62.2 L75.0,64.9 L74.0,63.2 L73.0,61.1 L72.0,63.7 L71.0,64.0 L70.0,64.4 L69.0,64.7 L68.0,63.0 L67.0,63.2 L66.0,65.6 L65.0,65.1 L64.0,62.5 L63.0,62.5 L62.0,63.9 L61.0,63.5 L60.0,63.4 L59.0,62.2 L58.0,62.2 L57.0,62.5 L56.0,64.3 L55.0,65.2 L54.0,64.6 L53.0,64.7 L52.0,63.8 L51.0,63.7 L50.0,62.8 L49.0,62.2 L48.0,58.8 L47.0,59.1 L46.0,60.0 L45.0,60.4 L44.0,64.9 L43.0,67.8 L42.0,67.7 L41.0,63.6 L40.0,59.8 L39.0,60.9 L38.0,62.9 L37.0,61.6 L36.0,60.3 L35.0,60.0 L34.0,58.8 L33.0,58.8 L32.0,58.8 L31.0,59.1 L30.0,60.4 L29.0,62.2 L28.0,65.6 L27.0,66.5 L26.0,66.0 L25.0,64.8 L24.0,64.5 L23.0,64.4 L22.0,63.4 L21.0,64.2 L20.0,63.1 L19.0,61.8 L18.0,61.6 L17.0,62.3 L16.0,60.3 L15.0,58.8 L14.0,58.8 L13.0,58.8 L12.0,58.8 L11.0,58.8 L10.0,58.8 L9.0,58.8 L8.0,58.8 L7.0,58.8 L6.0,58.8 L5.0,58.8 L4.0,58.8 L3.0,58.8 L2.0,58.8 L1.0,58.8 L0.0,58.8Z" fill="#11250f"/></svg>
<div class="lbl" style="left:375.5px;top:2.15px;font-size:7.2px;color:#174a12"><svg width="7" height="7" style="vertical-align:-0.8px"><circle cx="3.5" cy="3.5" r="2.8" fill="none" stroke="#174a12" stroke-width="0.9"/><path d="M3.5 1.8v1.9l1.2 0.8" fill="none" stroke="#174a12" stroke-width="0.8"/></svg>167%</div>
<div class="a" style="left:404.4px;top:5.05px;width:1.4px;height:1.4px;background:#174a12;border-radius:1px"></div>
<div class="a" style="left:408.5px;top:5.05px;width:1.4px;height:1.4px;background:#174a12;border-radius:1px"></div>
<div class="a" style="left:412.59999999999997px;top:5.05px;width:1.4px;height:1.4px;background:#174a12;border-radius:1px"></div>
</div>
<div class="a" style="left:588.5px;top:266px;width:402.70000000000005px;height:105px;background:#7dcb73;overflow:hidden">
<div class="a" style="left:0;top:0;width:402.70000000000005px;height:10.5px;background:#58bd4b"></div>
<div class="lbl" style="left:1.8px;top:2.55px;font-size:7.1px;color:#174a12">Audio 1 #1</div>
<svg class="a" style="left:0;top:0" width="402.70000000000005" height="105"><rect x="0" y="57.80000000000001" width="402.70000000000005" height="1" fill="#11250f"/><path d="M0.0,57.8 L1.0,57.8 L2.0,57.8 L3.0,57.8 L4.0,57.8 L5.0,57.8 L6.0,57.8 L7.0,57.8 L8.0,57.8 L9.0,57.8 L10.0,57.8 L11.0,57.8 L12.0,57.8 L13.0,57.8 L14.0,57.8 L15.0,57.8 L16.0,56.6 L17.0,55.3 L18.0,55.2 L19.0,54.7 L20.0,53.5 L21.0,53.9 L22.0,52.1 L23.0,43.4 L24.0,41.7 L25.0,44.2 L26.0,52.4 L27.0,53.2 L28.0,53.7 L29.0,55.1 L30.0,56.5 L31.0,57.5 L32.0,57.8 L33.0,57.8 L34.0,57.8 L35.0,55.9 L36.0,55.8 L37.0,53.0 L38.0,53.7 L39.0,54.8 L40.0,56.5 L41.0,54.8 L42.0,50.0 L43.0,52.2 L44.0,52.6 L45.0,56.1 L46.0,55.7 L47.0,57.3 L48.0,57.8 L49.0,53.3 L50.0,55.0 L51.0,53.7 L52.0,53.4 L53.0,52.4 L54.0,53.2 L55.0,51.0 L56.0,52.6 L57.0,54.7 L58.0,53.6 L59.0,53.3 L60.0,52.2 L61.0,51.0 L62.0,51.9 L63.0,54.0 L64.0,52.7 L65.0,51.3 L66.0,49.8 L67.0,52.0 L68.0,54.2 L69.0,54.4 L70.0,53.4 L71.0,52.1 L72.0,53.8 L73.0,54.0 L74.0,55.1 L75.0,53.3 L76.0,52.6 L77.0,54.1 L78.0,51.9 L79.0,52.8 L80.0,54.2 L81.0,54.8 L82.0,55.0 L83.0,55.8 L84.0,55.3 L85.0,56.0 L86.0,57.8 L87.0,57.8 L88.0,57.8 L89.0,57.8 L90.0,57.8 L91.0,57.8 L92.0,57.8 L93.0,57.8 L94.0,57.8 L95.0,57.8 L96.0,57.8 L97.0,57.8 L98.0,57.8 L99.0,57.5 L100.0,53.6 L101.0,54.4 L102.0,53.3 L103.0,52.5 L104.0,50.8 L105.0,51.9 L106.0,52.8 L107.0,52.3 L108.0,51.6 L109.0,52.7 L110.0,55.2 L111.0,55.2 L112.0,54.3 L113.0,55.0 L114.0,54.8 L115.0,55.5 L116.0,55.9 L117.0,57.8 L118.0,55.6 L119.0,55.3 L120.0,54.5 L121.0,54.7 L122.0,54.5 L123.0,54.5 L124.0,55.2 L125.0,55.8 L126.0,55.9 L127.0,55.3 L128.0,54.7 L129.0,53.5 L130.0,55.3 L131.0,54.6 L132.0,54.9 L133.0,54.4 L134.0,54.1 L135.0,55.4 L136.0,55.8 L137.0,54.6 L138.0,54.9 L139.0,53.6 L140.0,52.9 L141.0,55.0 L142.0,53.8 L143.0,54.5 L144.0,53.4 L145.0,53.5 L146.0,55.0 L147.0,54.3 L148.0,53.3 L149.0,54.8 L150.0,54.9 L151.0,54.1 L152.0,54.4 L153.0,55.1 L154.0,54.5 L155.0,54.0 L156.0,51.2 L157.0,53.0 L158.0,55.6 L159.0,53.5 L160.0,52.0 L161.0,53.1 L162.0,52.1 L163.0,55.8 L164.0,54.4 L165.0,53.7 L166.0,55.4 L167.0,53.8 L168.0,53.1 L169.0,53.2 L170.0,54.6 L171.0,53.7 L172.0,56.0 L173.0,57.8 L174.0,57.8 L175.0,57.8 L176.0,57.8 L177.0,57.8 L178.0,57.8 L179.0,57.8 L180.0,57.8 L181.0,57.5 L182.0,56.3 L183.0,56.5 L184.0,56.5 L185.0,51.8 L186.0,52.6 L187.0,53.1 L188.0,52.1 L189.0,55.8 L190.0,52.9 L191.0,53.9 L192.0,52.0 L193.0,53.2 L194.0,55.9 L195.0,56.5 L196.0,56.6 L197.0,57.8 L198.0,55.5 L199.0,51.5 L200.0,52.3 L201.0,53.7 L202.0,54.4 L203.0,53.4 L204.0,54.0 L205.0,54.1 L206.0,54.6 L207.0,54.3 L208.0,54.6 L209.0,52.9 L210.0,54.1 L211.0,55.0 L212.0,54.1 L213.0,51.4 L214.0,50.9 L215.0,51.3 L216.0,54.1 L217.0,54.9 L218.0,54.3 L219.0,54.7 L220.0,55.0 L221.0,54.1 L222.0,54.0 L223.0,53.2 L224.0,53.5 L225.0,52.6 L226.0,54.4 L227.0,54.1 L228.0,53.2 L229.0,53.8 L230.0,52.7 L231.0,52.2 L232.0,52.0 L233.0,52.5 L234.0,52.7 L235.0,52.5 L236.0,39.1 L237.0,27.7 L238.0,57.8 L239.0,57.8 L240.0,57.8 L241.0,57.8 L242.0,57.8 L243.0,57.8 L244.0,57.8 L245.0,57.8 L246.0,57.8 L247.0,57.8 L248.0,57.8 L249.0,57.8 L250.0,57.8 L251.0,57.8 L252.0,57.8 L253.0,57.8 L254.0,57.3 L255.0,54.7 L256.0,55.0 L257.0,55.0 L258.0,44.4 L259.0,44.1 L260.0,54.8 L261.0,54.2 L262.0,57.1 L263.0,57.0 L264.0,56.8 L265.0,57.8 L266.0,57.8 L267.0,57.8 L268.0,57.2 L269.0,56.3 L270.0,55.8 L271.0,57.4 L272.0,57.8 L273.0,57.8 L274.0,57.8 L275.0,57.8 L276.0,57.8 L277.0,57.8 L278.0,57.8 L279.0,57.8 L280.0,56.0 L281.0,55.8 L282.0,56.4 L283.0,57.6 L284.0,57.8 L285.0,57.8 L286.0,57.8 L287.0,57.8 L288.0,57.6 L289.0,57.4 L290.0,57.8 L291.0,57.8 L292.0,57.8 L293.0,57.0 L294.0,56.4 L295.0,57.1 L296.0,57.8 L297.0,57.8 L298.0,57.4 L299.0,57.0 L300.0,57.0 L301.0,57.8 L302.0,57.8 L303.0,57.8 L304.0,57.8 L305.0,57.8 L306.0,57.8 L307.0,57.8 L308.0,57.8 L309.0,57.8 L310.0,57.8 L311.0,57.8 L312.0,57.8 L313.0,57.8 L314.0,57.8 L315.0,55.9 L316.0,54.5 L317.0,54.5 L318.0,53.5 L319.0,54.3 L320.0,51.3 L321.0,49.0 L322.0,51.2 L323.0,52.2 L324.0,54.4 L325.0,51.4 L326.0,51.2 L327.0,50.5 L328.0,52.3 L329.0,53.5 L330.0,54.8 L331.0,57.8 L332.0,57.8 L333.0,55.4 L334.0,52.6 L335.0,50.5 L336.0,51.0 L337.0,54.7 L338.0,51.7 L339.0,51.6 L340.0,52.8 L341.0,53.1 L342.0,52.6 L343.0,51.4 L344.0,53.8 L345.0,51.8 L346.0,52.9 L347.0,55.0 L348.0,54.9 L349.0,54.6 L350.0,54.3 L351.0,55.5 L352.0,53.3 L353.0,53.5 L354.0,54.5 L355.0,54.5 L356.0,54.7 L357.0,53.6 L358.0,53.1 L359.0,53.4 L360.0,56.0 L361.0,56.2 L362.0,54.5 L363.0,55.6 L364.0,57.0 L365.0,57.1 L366.0,54.4 L367.0,54.5 L368.0,55.8 L369.0,57.1 L370.0,57.2 L371.0,54.8 L372.0,54.6 L373.0,57.5 L374.0,57.4 L375.0,55.9 L376.0,54.8 L377.0,55.3 L378.0,57.3 L379.0,57.2 L380.0,55.6 L381.0,54.4 L382.0,56.7 L383.0,57.2 L384.0,57.1 L385.0,56.0 L386.0,56.3 L387.0,57.3 L388.0,57.3 L389.0,55.9 L390.0,54.7 L391.0,56.0 L392.0,57.1 L393.0,57.2 L394.0,55.5 L395.0,54.9 L396.0,56.9 L397.0,57.1 L398.0,57.4 L399.0,55.0 L400.0,55.5 L401.0,57.5 L402.0,57.5 L402.0,59.2 L401.0,59.4 L400.0,59.5 L399.0,60.8 L398.0,59.5 L397.0,59.2 L396.0,59.3 L395.0,60.7 L394.0,60.6 L393.0,59.5 L392.0,59.2 L391.0,59.6 L390.0,60.2 L389.0,59.6 L388.0,59.4 L387.0,59.3 L386.0,59.9 L385.0,60.6 L384.0,59.2 L383.0,59.2 L382.0,59.1 L381.0,59.5 L380.0,60.2 L379.0,59.3 L378.0,59.2 L377.0,60.4 L376.0,60.3 L375.0,59.5 L374.0,59.1 L373.0,59.1 L372.0,60.1 L371.0,60.4 L370.0,59.4 L369.0,59.1 L368.0,59.5 L367.0,60.4 L366.0,60.6 L365.0,59.5 L364.0,59.3 L363.0,59.5 L362.0,60.6 L361.0,59.8 L360.0,60.2 L359.0,62.8 L358.0,63.1 L357.0,62.0 L356.0,63.9 L355.0,62.4 L354.0,62.7 L353.0,62.9 L352.0,62.9 L351.0,61.9 L350.0,61.9 L349.0,61.9 L348.0,61.3 L347.0,62.1 L346.0,62.7 L345.0,63.2 L344.0,62.5 L343.0,67.4 L342.0,66.3 L341.0,63.7 L340.0,65.4 L339.0,65.9 L338.0,65.4 L337.0,62.6 L336.0,65.3 L335.0,64.5 L334.0,65.1 L333.0,62.0 L332.0,58.8 L331.0,58.9 L330.0,61.4 L329.0,62.7 L328.0,61.5 L327.0,64.8 L326.0,66.5 L325.0,63.3 L324.0,63.0 L323.0,65.5 L322.0,64.3 L321.0,65.0 L320.0,63.9 L319.0,61.7 L318.0,61.6 L317.0,62.1 L316.0,62.2 L315.0,60.7 L314.0,58.8 L313.0,58.8 L312.0,58.8 L311.0,58.8 L310.0,58.8 L309.0,58.8 L308.0,58.8 L307.0,58.8 L306.0,58.8 L305.0,58.8 L304.0,58.8 L303.0,58.8 L302.0,58.8 L301.0,58.8 L300.0,59.5 L299.0,59.7 L298.0,59.1 L297.0,58.8 L296.0,58.8 L295.0,59.5 L294.0,60.0 L293.0,60.0 L292.0,58.9 L291.0,58.8 L290.0,58.8 L289.0,59.2 L288.0,59.0 L287.0,58.8 L286.0,58.8 L285.0,58.8 L284.0,58.8 L283.0,59.4 L282.0,60.6 L281.0,60.7 L280.0,61.2 L279.0,58.8 L278.0,58.8 L277.0,58.8 L276.0,58.8 L275.0,58.8 L274.0,58.8 L273.0,58.8 L272.0,58.8 L271.0,59.3 L270.0,60.9 L269.0,60.3 L268.0,60.1 L267.0,58.8 L266.0,58.8 L265.0,58.8 L264.0,59.9 L263.0,60.3 L262.0,59.4 L261.0,61.6 L260.0,61.8 L259.0,71.3 L258.0,71.0 L257.0,61.8 L256.0,62.1 L255.0,62.2 L254.0,59.8 L253.0,58.8 L252.0,58.8 L251.0,58.8 L250.0,58.8 L249.0,58.8 L248.0,58.8 L247.0,58.8 L246.0,58.8 L245.0,58.8 L244.0,58.8 L243.0,58.8 L242.0,58.8 L241.0,58.8 L240.0,58.8 L239.0,58.8 L238.0,58.8 L237.0,90.7 L236.0,78.1 L235.0,63.4 L234.0,64.4 L233.0,61.8 L232.0,62.7 L231.0,62.0 L230.0,62.5 L229.0,63.4 L228.0,62.3 L227.0,63.7 L226.0,62.4 L225.0,62.4 L224.0,62.2 L223.0,62.4 L222.0,63.3 L221.0,62.9 L220.0,62.4 L219.0,63.1 L218.0,63.2 L217.0,62.1 L216.0,63.3 L215.0,65.1 L214.0,65.0 L213.0,63.8 L212.0,62.4 L211.0,61.5 L210.0,62.6 L209.0,62.4 L208.0,62.2 L207.0,60.8 L206.0,62.4 L205.0,62.4 L204.0,62.3 L203.0,62.9 L202.0,61.4 L201.0,63.3 L200.0,63.4 L199.0,63.7 L198.0,62.4 L197.0,59.2 L196.0,59.4 L195.0,61.4 L194.0,61.2 L193.0,63.4 L192.0,66.6 L191.0,64.2 L190.0,62.7 L189.0,61.1 L188.0,64.4 L187.0,63.5 L186.0,64.8 L185.0,61.8 L184.0,61.0 L183.0,60.7 L182.0,61.1 L181.0,59.0 L180.0,58.8 L179.0,58.8 L178.0,58.8 L177.0,58.8 L176.0,58.8 L175.0,58.8 L174.0,58.8 L173.0,58.8 L172.0,61.2 L171.0,61.2 L170.0,61.0 L169.0,63.3 L168.0,62.9 L167.0,61.9 L166.0,62.1 L165.0,61.9 L164.0,62.2 L163.0,61.9 L162.0,63.0 L161.0,64.9 L160.0,64.2 L159.0,62.5 L158.0,61.2 L157.0,61.8 L156.0,62.9 L155.0,61.4 L154.0,61.1 L153.0,63.2 L152.0,61.7 L151.0,62.3 L150.0,61.7 L149.0,61.9 L148.0,63.2 L147.0,62.2 L146.0,61.6 L145.0,61.6 L144.0,61.6 L143.0,61.5 L142.0,60.8 L141.0,61.0 L140.0,61.9 L139.0,61.8 L138.0,61.3 L137.0,60.6 L136.0,62.1 L135.0,61.3 L134.0,61.6 L133.0,61.2 L132.0,61.5 L131.0,62.2 L130.0,63.2 L129.0,62.8 L128.0,61.1 L127.0,62.1 L126.0,60.9 L125.0,61.9 L124.0,60.5 L123.0,60.6 L122.0,61.4 L121.0,61.3 L120.0,60.6 L119.0,61.9 L118.0,60.8 L117.0,58.8 L116.0,60.9 L115.0,61.7 L114.0,61.2 L113.0,62.0 L112.0,62.1 L111.0,60.6 L110.0,63.6 L109.0,63.0 L108.0,63.7 L107.0,64.4 L106.0,66.8 L105.0,65.1 L104.0,65.4 L103.0,66.7 L102.0,63.6 L101.0,64.2 L100.0,63.1 L99.0,59.1 L98.0,58.8 L97.0,58.8 L96.0,58.8 L95.0,58.8 L94.0,58.8 L93.0,58.8 L92.0,58.8 L91.0,58.8 L90.0,58.8 L89.0,58.8 L88.0,58.8 L87.0,58.8 L86.0,58.8 L85.0,60.3 L84.0,61.8 L83.0,63.4 L82.0,63.3 L81.0,61.5 L80.0,63.0 L79.0,62.0 L78.0,63.4 L77.0,61.9 L76.0,62.5 L75.0,64.4 L74.0,64.2 L73.0,61.2 L72.0,62.8 L71.0,65.3 L70.0,65.0 L69.0,64.4 L68.0,62.3 L67.0,64.2 L66.0,63.8 L65.0,66.0 L64.0,62.2 L63.0,62.0 L62.0,64.4 L61.0,64.8 L60.0,64.0 L59.0,62.5 L58.0,61.5 L57.0,62.9 L56.0,65.0 L55.0,64.2 L54.0,66.0 L53.0,65.8 L52.0,63.7 L51.0,64.5 L50.0,61.7 L49.0,61.2 L48.0,58.8 L47.0,58.9 L46.0,60.6 L45.0,60.1 L44.0,64.7 L43.0,68.7 L42.0,66.4 L41.0,62.6 L40.0,60.1 L39.0,61.3 L38.0,62.6 L37.0,62.8 L36.0,61.1 L35.0,60.1 L34.0,58.8 L33.0,58.8 L32.0,58.8 L31.0,59.1 L30.0,60.0 L29.0,61.7 L28.0,64.0 L27.0,64.0 L26.0,63.3 L25.0,65.8 L24.0,64.5 L23.0,67.4 L22.0,63.9 L21.0,65.3 L20.0,62.6 L19.0,62.3 L18.0,62.9 L17.0,61.9 L16.0,59.7 L15.0,58.8 L14.0,58.8 L13.0,58.8 L12.0,58.8 L11.0,58.8 L10.0,58.8 L9.0,58.8 L8.0,58.8 L7.0,58.8 L6.0,58.8 L5.0,58.8 L4.0,58.8 L3.0,58.8 L2.0,58.8 L1.0,58.8 L0.0,58.8Z" fill="#11250f"/></svg>
</div>
<div class="a" style="left:587.5px;top:266px;width:1.5px;height:105px;background:#11250f;opacity:0.9"></div>
<div class="lbl" style="left:964.2px;top:268.15px;font-size:7.2px;color:#174a12;clip-path:inset(0 0 0 0)"><svg width="7" height="7" style="vertical-align:-0.8px"><circle cx="3.5" cy="3.5" r="2.8" fill="none" stroke="#174a12" stroke-width="0.9"/><path d="M3.5 1.8v1.9l1.2 0.8" fill="none" stroke="#174a12" stroke-width="0.8"/></svg>167%</div>
<div class="a" style="left:171.5px;top:373px;width:819.7px;height:104.19999999999999px;background:#14c2a6;overflow:hidden">
<div class="a" style="left:0;top:0;width:819.7px;height:10.5px;background:#12b99d"></div>
<div class="lbl" style="left:1.8px;top:2.55px;font-size:7.1px;color:#064236">Audio 1 #1</div>
<svg class="a" style="left:0;top:0" width="819.7" height="104.19999999999999"><rect x="0" y="57.39999999999998" width="819.7" height="1" fill="#062a22"/><path d="M0.0,57.4 L1.0,57.4 L2.0,57.4 L3.0,57.4 L4.0,57.4 L5.0,57.4 L6.0,57.4 L7.0,57.4 L8.0,57.4 L9.0,57.4 L10.0,57.4 L11.0,57.4 L12.0,57.4 L13.0,57.4 L14.0,57.4 L15.0,57.4 L16.0,57.4 L17.0,57.4 L18.0,57.4 L19.0,57.4 L20.0,57.4 L21.0,57.4 L22.0,57.4 L23.0,57.4 L24.0,57.4 L25.0,57.4 L26.0,57.4 L27.0,56.2 L28.0,54.0 L29.0,54.2 L30.0,54.2 L31.0,53.2 L32.0,53.4 L33.0,53.5 L34.0,53.6 L35.0,51.9 L36.0,51.7 L37.0,50.8 L38.0,50.1 L39.0,44.0 L40.0,42.4 L41.0,43.4 L42.0,50.2 L43.0,52.0 L44.0,51.0 L45.0,51.2 L46.0,51.9 L47.0,52.3 L48.0,53.3 L49.0,55.2 L50.0,55.2 L51.0,56.3 L52.0,57.4 L53.0,57.4 L54.0,57.4 L55.0,57.4 L56.0,57.4 L57.0,57.4 L58.0,56.6 L59.0,55.6 L60.0,55.2 L61.0,53.7 L62.0,53.0 L63.0,53.0 L64.0,53.2 L65.0,53.6 L66.0,55.8 L67.0,55.8 L68.0,55.4 L69.0,52.9 L70.0,49.1 L71.0,49.7 L72.0,50.3 L73.0,49.8 L74.0,53.8 L75.0,55.4 L76.0,55.5 L77.0,55.5 L78.0,56.7 L79.0,57.4 L80.0,57.4 L81.0,57.2 L82.0,54.1 L83.0,53.3 L84.0,53.4 L85.0,52.6 L86.0,50.7 L87.0,51.3 L88.0,50.7 L89.0,51.2 L90.0,50.4 L91.0,51.9 L92.0,51.3 L93.0,51.1 L94.0,51.6 L95.0,53.3 L96.0,53.5 L97.0,54.2 L98.0,53.7 L99.0,52.1 L100.0,51.2 L101.0,51.2 L102.0,51.5 L103.0,52.1 L104.0,52.1 L105.0,53.3 L106.0,54.0 L107.0,53.2 L108.0,51.7 L109.0,49.3 L110.0,50.1 L111.0,50.1 L112.0,50.7 L113.0,51.8 L114.0,53.9 L115.0,53.5 L116.0,52.8 L117.0,52.2 L118.0,51.9 L119.0,51.6 L120.0,51.6 L121.0,54.0 L122.0,53.6 L123.0,53.8 L124.0,53.2 L125.0,52.7 L126.0,52.2 L127.0,52.3 L128.0,53.9 L129.0,53.9 L130.0,53.9 L131.0,52.0 L132.0,52.7 L133.0,52.3 L134.0,53.2 L135.0,54.2 L136.0,54.2 L137.0,53.2 L138.0,53.3 L139.0,54.4 L140.0,54.0 L141.0,54.2 L142.0,55.5 L143.0,57.4 L144.0,57.4 L145.0,57.4 L146.0,57.4 L147.0,57.4 L148.0,57.4 L149.0,57.4 L150.0,57.4 L151.0,57.4 L152.0,57.4 L153.0,57.4 L154.0,57.4 L155.0,57.4 L156.0,57.4 L157.0,57.4 L158.0,57.4 L159.0,57.4 L160.0,57.4 L161.0,57.4 L162.0,57.4 L163.0,57.4 L164.0,57.4 L165.0,57.4 L166.0,57.0 L167.0,55.7 L168.0,52.7 L169.0,52.1 L170.0,52.2 L171.0,51.5 L172.0,50.3 L173.0,49.0 L174.0,50.1 L175.0,50.2 L176.0,51.1 L177.0,50.0 L178.0,50.7 L179.0,51.5 L180.0,51.4 L181.0,52.0 L182.0,52.7 L183.0,52.3 L184.0,53.5 L185.0,53.9 L186.0,54.1 L187.0,54.4 L188.0,54.2 L189.0,54.1 L190.0,54.1 L191.0,54.2 L192.0,54.0 L193.0,54.7 L194.0,55.7 L195.0,57.4 L196.0,57.4 L197.0,56.6 L198.0,55.1 L199.0,54.4 L200.0,54.6 L201.0,53.5 L202.0,54.3 L203.0,53.7 L204.0,54.6 L205.0,54.5 L206.0,54.4 L207.0,54.6 L208.0,54.2 L209.0,54.3 L210.0,54.3 L211.0,54.3 L212.0,54.4 L213.0,54.8 L214.0,53.6 L215.0,53.0 L216.0,53.1 L217.0,53.7 L218.0,53.8 L219.0,54.6 L220.0,54.5 L221.0,54.6 L222.0,53.9 L223.0,53.9 L224.0,54.0 L225.0,53.5 L226.0,54.7 L227.0,54.4 L228.0,54.6 L229.0,54.2 L230.0,54.2 L231.0,54.0 L232.0,52.6 L233.0,52.9 L234.0,53.5 L235.0,54.3 L236.0,54.2 L237.0,54.4 L238.0,53.6 L239.0,53.1 L240.0,53.0 L241.0,53.6 L242.0,53.3 L243.0,54.3 L244.0,54.9 L245.0,52.6 L246.0,52.2 L247.0,52.3 L248.0,52.4 L249.0,53.3 L250.0,54.4 L251.0,54.1 L252.0,53.0 L253.0,52.5 L254.0,52.5 L255.0,52.5 L256.0,54.2 L257.0,53.9 L258.0,54.5 L259.0,53.6 L260.0,52.4 L261.0,51.2 L262.0,52.4 L263.0,53.1 L264.0,54.0 L265.0,53.7 L266.0,52.8 L267.0,51.9 L268.0,52.6 L269.0,52.4 L270.0,52.2 L271.0,53.7 L272.0,54.1 L273.0,54.1 L274.0,52.6 L275.0,52.6 L276.0,52.7 L277.0,53.7 L278.0,53.7 L279.0,53.6 L280.0,51.9 L281.0,52.4 L282.0,52.7 L283.0,52.8 L284.0,53.5 L285.0,53.5 L286.0,53.4 L287.0,54.8 L288.0,55.6 L289.0,57.4 L290.0,57.4 L291.0,57.4 L292.0,57.4 L293.0,57.4 L294.0,57.4 L295.0,57.4 L296.0,57.4 L297.0,57.4 L298.0,57.4 L299.0,57.4 L300.0,57.4 L301.0,57.4 L302.0,57.4 L303.0,56.6 L304.0,55.2 L305.0,55.1 L306.0,55.2 L307.0,55.2 L308.0,54.2 L309.0,52.2 L310.0,51.6 L311.0,51.0 L312.0,51.2 L313.0,51.4 L314.0,52.5 L315.0,54.1 L316.0,54.9 L317.0,54.6 L318.0,52.6 L319.0,51.2 L320.0,51.5 L321.0,51.4 L322.0,51.4 L323.0,52.9 L324.0,55.3 L325.0,55.0 L326.0,55.4 L327.0,56.1 L328.0,57.4 L329.0,57.4 L330.0,56.1 L331.0,54.8 L332.0,51.6 L333.0,51.4 L334.0,52.5 L335.0,52.3 L336.0,51.7 L337.0,53.1 L338.0,54.0 L339.0,53.5 L340.0,52.9 L341.0,52.5 L342.0,52.6 L343.0,52.5 L344.0,54.3 L345.0,54.0 L346.0,54.2 L347.0,53.9 L348.0,53.0 L349.0,52.9 L350.0,54.0 L351.0,53.6 L352.0,54.1 L353.0,54.1 L354.0,54.0 L355.0,52.3 L356.0,51.6 L357.0,51.3 L358.0,51.0 L359.0,51.2 L360.0,52.8 L361.0,53.3 L362.0,53.4 L363.0,53.0 L364.0,53.3 L365.0,53.5 L366.0,53.0 L367.0,53.4 L368.0,53.2 L369.0,53.1 L370.0,53.5 L371.0,53.1 L372.0,52.6 L373.0,52.6 L374.0,53.7 L375.0,52.6 L376.0,53.1 L377.0,52.5 L378.0,52.6 L379.0,52.4 L380.0,52.8 L381.0,52.6 L382.0,52.5 L383.0,53.0 L384.0,53.0 L385.0,52.7 L386.0,52.2 L387.0,52.2 L388.0,52.4 L389.0,53.1 L390.0,52.5 L391.0,52.1 L392.0,52.6 L393.0,52.2 L394.0,52.7 L395.0,29.4 L396.0,30.6 L397.0,57.0 L398.0,57.4 L399.0,57.4 L400.0,57.4 L401.0,57.4 L402.0,57.4 L403.0,57.4 L404.0,57.4 L405.0,57.4 L406.0,57.4 L407.0,57.4 L408.0,57.4 L409.0,57.4 L410.0,57.4 L411.0,57.4 L412.0,57.4 L413.0,57.4 L414.0,57.4 L415.0,57.4 L416.0,57.4 L417.0,57.4 L418.0,57.4 L419.0,57.4 L420.0,57.4 L421.0,57.4 L422.0,57.4 L423.0,57.4 L424.0,57.4 L425.0,55.9 L426.0,53.5 L427.0,53.5 L428.0,54.1 L429.0,53.5 L430.0,53.9 L431.0,52.4 L432.0,44.6 L433.0,49.9 L434.0,54.2 L435.0,53.5 L436.0,54.0 L437.0,56.5 L438.0,56.8 L439.0,56.2 L440.0,56.1 L441.0,56.4 L442.0,57.3 L443.0,57.4 L444.0,57.4 L445.0,57.4 L446.0,57.4 L447.0,57.4 L448.0,56.3 L449.0,55.0 L450.0,55.1 L451.0,55.1 L452.0,56.3 L453.0,57.4 L454.0,57.4 L455.0,57.4 L456.0,57.4 L457.0,57.4 L458.0,57.4 L459.0,57.4 L460.0,57.4 L461.0,57.4 L462.0,57.4 L463.0,57.4 L464.0,57.4 L465.0,57.4 L466.0,57.4 L467.0,56.6 L468.0,55.0 L469.0,55.0 L470.0,55.3 L471.0,55.3 L472.0,56.2 L473.0,57.4 L474.0,57.4 L475.0,57.4 L476.0,57.4 L477.0,57.4 L478.0,57.4 L479.0,57.4 L480.0,57.4 L481.0,57.1 L482.0,56.9 L483.0,57.1 L484.0,57.3 L485.0,57.4 L486.0,57.4 L487.0,57.4 L488.0,57.4 L489.0,56.4 L490.0,56.1 L491.0,56.0 L492.0,56.1 L493.0,56.3 L494.0,57.4 L495.0,57.4 L496.0,57.4 L497.0,57.4 L498.0,57.3 L499.0,56.5 L500.0,56.4 L501.0,56.5 L502.0,56.9 L503.0,57.4 L504.0,57.4 L505.0,57.4 L506.0,57.4 L507.0,57.4 L508.0,57.4 L509.0,57.4 L510.0,57.4 L511.0,57.4 L512.0,57.4 L513.0,57.4 L514.0,57.4 L515.0,57.4 L516.0,57.4 L517.0,57.4 L518.0,57.4 L519.0,57.4 L520.0,57.4 L521.0,57.4 L522.0,57.4 L523.0,57.4 L524.0,57.4 L525.0,57.4 L526.0,56.5 L527.0,54.0 L528.0,54.3 L529.0,54.2 L530.0,53.3 L531.0,53.4 L532.0,53.9 L533.0,54.1 L534.0,54.4 L535.0,50.1 L536.0,49.4 L537.0,49.3 L538.0,50.0 L539.0,49.0 L540.0,53.1 L541.0,53.7 L542.0,52.1 L543.0,49.1 L544.0,49.9 L545.0,49.8 L546.0,49.9 L547.0,52.2 L548.0,52.4 L549.0,52.2 L550.0,52.0 L551.0,54.1 L552.0,55.9 L553.0,57.4 L554.0,57.4 L555.0,57.4 L556.0,55.7 L557.0,53.5 L558.0,53.1 L559.0,49.9 L560.0,49.8 L561.0,49.9 L562.0,52.6 L563.0,53.4 L564.0,51.7 L565.0,49.0 L566.0,48.5 L567.0,49.1 L568.0,50.7 L569.0,53.8 L570.0,50.5 L571.0,49.6 L572.0,49.4 L573.0,49.2 L574.0,50.7 L575.0,52.2 L576.0,51.1 L577.0,51.8 L578.0,52.6 L579.0,55.5 L580.0,53.7 L581.0,54.2 L582.0,53.5 L583.0,52.5 L584.0,52.6 L585.0,53.0 L586.0,54.7 L587.0,53.5 L588.0,52.6 L589.0,52.5 L590.0,54.0 L591.0,53.5 L592.0,53.5 L593.0,52.6 L594.0,52.5 L595.0,53.2 L596.0,53.4 L597.0,53.5 L598.0,52.9 L599.0,52.8 L600.0,53.8 L601.0,55.0 L602.0,57.4 L603.0,56.6 L604.0,54.9 L605.0,53.6 L606.0,53.9 L607.0,56.6 L608.0,56.7 L609.0,56.8 L610.0,56.8 L611.0,55.8 L612.0,54.3 L613.0,53.6 L614.0,54.8 L615.0,56.4 L616.0,56.7 L617.0,56.7 L618.0,56.7 L619.0,56.1 L620.0,53.1 L621.0,53.6 L622.0,55.6 L623.0,56.8 L624.0,56.8 L625.0,56.9 L626.0,56.8 L627.0,55.5 L628.0,53.4 L629.0,54.2 L630.0,55.3 L631.0,56.8 L632.0,56.8 L633.0,56.8 L634.0,56.7 L635.0,55.6 L636.0,54.0 L637.0,54.8 L638.0,56.6 L639.0,56.8 L640.0,56.8 L641.0,56.7 L642.0,56.2 L643.0,55.0 L644.0,54.7 L645.0,55.4 L646.0,56.7 L647.0,56.7 L648.0,56.8 L649.0,56.8 L650.0,55.5 L651.0,54.0 L652.0,54.2 L653.0,55.3 L654.0,56.7 L655.0,56.7 L656.0,56.8 L657.0,56.8 L658.0,55.0 L659.0,53.9 L660.0,54.5 L661.0,56.1 L662.0,56.9 L663.0,56.8 L664.0,56.8 L665.0,56.8 L666.0,55.6 L667.0,54.3 L668.0,54.9 L669.0,56.4 L670.0,56.7 L671.0,56.8 L672.0,57.0 L673.0,56.5 L674.0,55.3 L675.0,54.2 L676.0,55.0 L677.0,56.7 L678.0,56.9 L679.0,56.8 L680.0,56.8 L681.0,56.1 L682.0,54.9 L683.0,54.3 L684.0,55.3 L685.0,56.8 L686.0,56.9 L687.0,56.7 L688.0,56.7 L689.0,55.6 L690.0,54.0 L691.0,54.6 L692.0,56.2 L693.0,56.7 L694.0,56.9 L695.0,56.7 L696.0,56.6 L697.0,55.3 L698.0,53.8 L699.0,54.5 L700.0,56.3 L701.0,56.7 L702.0,56.8 L703.0,56.9 L704.0,56.2 L705.0,54.9 L706.0,54.2 L707.0,54.5 L708.0,56.7 L709.0,56.7 L710.0,56.7 L711.0,56.8 L712.0,55.8 L713.0,54.6 L714.0,54.1 L715.0,55.3 L716.0,56.7 L717.0,56.7 L718.0,56.7 L719.0,56.8 L720.0,55.2 L721.0,54.4 L722.0,54.7 L723.0,56.1 L724.0,57.0 L725.0,56.8 L726.0,56.8 L727.0,56.8 L728.0,56.8 L729.0,57.1 L730.0,57.4 L731.0,56.4 L732.0,54.5 L733.0,54.5 L734.0,54.9 L735.0,54.4 L736.0,55.2 L737.0,55.1 L738.0,54.5 L739.0,54.7 L740.0,54.6 L741.0,54.4 L742.0,54.6 L743.0,55.1 L744.0,54.5 L745.0,54.8 L746.0,54.4 L747.0,54.5 L748.0,52.4 L749.0,52.0 L750.0,52.4 L751.0,52.0 L752.0,52.1 L753.0,53.3 L754.0,54.8 L755.0,54.7 L756.0,55.0 L757.0,54.7 L758.0,54.7 L759.0,56.3 L760.0,57.4 L761.0,57.4 L762.0,55.4 L763.0,52.6 L764.0,52.6 L765.0,52.5 L766.0,52.6 L767.0,52.4 L768.0,53.1 L769.0,53.2 L770.0,53.0 L771.0,53.1 L772.0,52.6 L773.0,52.8 L774.0,52.7 L775.0,52.5 L776.0,53.0 L777.0,52.5 L778.0,52.9 L779.0,52.5 L780.0,52.8 L781.0,52.4 L782.0,52.8 L783.0,52.9 L784.0,54.8 L785.0,56.7 L786.0,55.9 L787.0,53.3 L788.0,49.9 L789.0,49.1 L790.0,49.9 L791.0,50.8 L792.0,54.8 L793.0,57.4 L794.0,57.4 L795.0,57.4 L796.0,57.4 L797.0,57.4 L798.0,57.4 L799.0,57.4 L800.0,57.4 L801.0,57.4 L802.0,57.4 L803.0,57.4 L804.0,57.4 L805.0,57.4 L806.0,57.4 L807.0,57.4 L808.0,57.4 L809.0,57.4 L810.0,57.4 L811.0,57.4 L812.0,57.4 L813.0,57.4 L814.0,57.0 L815.0,54.3 L816.0,53.2 L817.0,53.5 L818.0,53.5 L819.0,53.1 L819.0,62.7 L818.0,61.7 L817.0,62.0 L816.0,61.9 L815.0,60.9 L814.0,58.5 L813.0,58.4 L812.0,58.4 L811.0,58.4 L810.0,58.4 L809.0,58.4 L808.0,58.4 L807.0,58.4 L806.0,58.4 L805.0,58.4 L804.0,58.4 L803.0,58.4 L802.0,58.4 L801.0,58.4 L800.0,58.4 L799.0,58.4 L798.0,58.4 L797.0,58.4 L796.0,58.4 L795.0,58.4 L794.0,58.4 L793.0,58.4 L792.0,60.2 L791.0,63.9 L790.0,65.0 L789.0,64.4 L788.0,64.3 L787.0,61.8 L786.0,59.2 L785.0,59.7 L784.0,62.5 L783.0,63.2 L782.0,63.3 L781.0,63.3 L780.0,63.3 L779.0,63.0 L778.0,63.1 L777.0,63.1 L776.0,63.3 L775.0,63.2 L774.0,62.6 L773.0,63.0 L772.0,63.4 L771.0,63.0 L770.0,62.6 L769.0,63.3 L768.0,62.6 L767.0,63.2 L766.0,63.1 L765.0,62.5 L764.0,63.1 L763.0,62.7 L762.0,60.2 L761.0,58.4 L760.0,58.4 L759.0,60.1 L758.0,61.2 L757.0,60.8 L756.0,61.4 L755.0,61.3 L754.0,60.8 L753.0,61.9 L752.0,62.8 L751.0,63.8 L750.0,63.1 L749.0,62.2 L748.0,62.0 L747.0,61.7 L746.0,61.3 L745.0,60.7 L744.0,61.3 L743.0,61.2 L742.0,60.6 L741.0,61.1 L740.0,61.3 L739.0,61.3 L738.0,61.1 L737.0,61.4 L736.0,60.7 L735.0,61.4 L734.0,61.1 L733.0,61.4 L732.0,60.7 L731.0,59.4 L730.0,58.4 L729.0,58.5 L728.0,59.0 L727.0,59.0 L726.0,59.0 L725.0,59.0 L724.0,58.8 L723.0,59.0 L722.0,60.0 L721.0,60.4 L720.0,59.4 L719.0,59.0 L718.0,59.0 L717.0,59.1 L716.0,59.1 L715.0,59.5 L714.0,60.4 L713.0,60.3 L712.0,59.2 L711.0,59.0 L710.0,59.0 L709.0,58.9 L708.0,59.0 L707.0,59.6 L706.0,60.1 L705.0,59.9 L704.0,58.8 L703.0,59.1 L702.0,59.0 L701.0,58.8 L700.0,59.0 L699.0,60.0 L698.0,60.2 L697.0,59.8 L696.0,59.1 L695.0,59.1 L694.0,59.1 L693.0,59.0 L692.0,59.0 L691.0,59.8 L690.0,60.0 L689.0,59.2 L688.0,59.0 L687.0,58.9 L686.0,59.1 L685.0,59.1 L684.0,59.2 L683.0,60.0 L682.0,60.4 L681.0,59.0 L680.0,59.0 L679.0,59.0 L678.0,59.0 L677.0,59.1 L676.0,59.3 L675.0,60.3 L674.0,59.9 L673.0,58.9 L672.0,59.1 L671.0,59.1 L670.0,59.0 L669.0,58.9 L668.0,59.5 L667.0,60.2 L666.0,59.4 L665.0,59.1 L664.0,59.1 L663.0,59.0 L662.0,58.9 L661.0,59.1 L660.0,60.0 L659.0,60.4 L658.0,59.5 L657.0,59.0 L656.0,59.1 L655.0,58.9 L654.0,59.0 L653.0,59.5 L652.0,60.2 L651.0,60.1 L650.0,59.0 L649.0,58.9 L648.0,59.1 L647.0,59.0 L646.0,59.0 L645.0,59.9 L644.0,60.4 L643.0,60.0 L642.0,59.1 L641.0,59.1 L640.0,58.9 L639.0,59.1 L638.0,59.0 L637.0,59.7 L636.0,59.6 L635.0,59.9 L634.0,59.0 L633.0,59.0 L632.0,59.0 L631.0,58.9 L630.0,59.0 L629.0,60.5 L628.0,60.5 L627.0,59.4 L626.0,58.9 L625.0,59.0 L624.0,59.1 L623.0,59.0 L622.0,59.9 L621.0,60.2 L620.0,60.6 L619.0,59.5 L618.0,58.9 L617.0,59.1 L616.0,59.0 L615.0,59.1 L614.0,59.5 L613.0,60.6 L612.0,60.3 L611.0,58.8 L610.0,59.0 L609.0,59.1 L608.0,59.0 L607.0,59.1 L606.0,60.1 L605.0,60.8 L604.0,60.2 L603.0,58.7 L602.0,58.4 L601.0,60.3 L600.0,62.2 L599.0,63.2 L598.0,62.7 L597.0,62.3 L596.0,61.6 L595.0,63.3 L594.0,62.9 L593.0,63.3 L592.0,62.0 L591.0,62.3 L590.0,62.4 L589.0,63.1 L588.0,61.8 L587.0,62.1 L586.0,62.1 L585.0,62.9 L584.0,63.0 L583.0,62.6 L582.0,61.9 L581.0,61.8 L580.0,62.1 L579.0,60.5 L578.0,63.1 L577.0,63.6 L576.0,64.5 L575.0,62.4 L574.0,63.8 L573.0,66.5 L572.0,65.9 L571.0,66.0 L570.0,63.3 L569.0,62.3 L568.0,65.1 L567.0,66.0 L566.0,66.9 L565.0,65.5 L564.0,64.9 L563.0,62.0 L562.0,62.6 L561.0,66.0 L560.0,65.5 L559.0,66.3 L558.0,63.6 L557.0,61.5 L556.0,59.5 L555.0,58.4 L554.0,58.4 L553.0,58.4 L552.0,60.3 L551.0,61.5 L550.0,63.2 L549.0,63.7 L548.0,62.0 L547.0,63.4 L546.0,65.4 L545.0,65.9 L544.0,65.3 L543.0,65.4 L542.0,64.6 L541.0,61.9 L540.0,62.4 L539.0,65.1 L538.0,64.7 L537.0,66.9 L536.0,66.5 L535.0,65.3 L534.0,62.4 L533.0,61.7 L532.0,62.3 L531.0,62.7 L530.0,62.6 L529.0,61.9 L528.0,61.8 L527.0,61.0 L526.0,59.8 L525.0,58.4 L524.0,58.4 L523.0,58.4 L522.0,58.4 L521.0,58.4 L520.0,58.4 L519.0,58.4 L518.0,58.4 L517.0,58.4 L516.0,58.4 L515.0,58.4 L514.0,58.4 L513.0,58.4 L512.0,58.4 L511.0,58.4 L510.0,58.4 L509.0,58.4 L508.0,58.4 L507.0,58.4 L506.0,58.4 L505.0,58.4 L504.0,58.4 L503.0,58.4 L502.0,58.8 L501.0,59.2 L500.0,59.4 L499.0,59.1 L498.0,58.4 L497.0,58.4 L496.0,58.4 L495.0,58.4 L494.0,58.5 L493.0,59.2 L492.0,59.8 L491.0,59.9 L490.0,59.6 L489.0,58.9 L488.0,58.4 L487.0,58.4 L486.0,58.4 L485.0,58.4 L484.0,58.4 L483.0,58.8 L482.0,58.9 L481.0,58.9 L480.0,58.4 L479.0,58.4 L478.0,58.4 L477.0,58.4 L476.0,58.4 L475.0,58.4 L474.0,58.4 L473.0,58.4 L472.0,59.5 L471.0,61.2 L470.0,61.3 L469.0,61.3 L468.0,60.6 L467.0,59.7 L466.0,58.4 L465.0,58.4 L464.0,58.4 L463.0,58.4 L462.0,58.4 L461.0,58.4 L460.0,58.4 L459.0,58.4 L458.0,58.4 L457.0,58.4 L456.0,58.4 L455.0,58.4 L454.0,58.4 L453.0,58.4 L452.0,59.4 L451.0,60.7 L450.0,60.7 L449.0,60.2 L448.0,59.1 L447.0,58.4 L446.0,58.4 L445.0,58.4 L444.0,58.4 L443.0,58.4 L442.0,58.4 L441.0,59.4 L440.0,59.9 L439.0,59.8 L438.0,59.3 L437.0,59.3 L436.0,61.2 L435.0,62.0 L434.0,61.8 L433.0,67.5 L432.0,70.3 L431.0,62.1 L430.0,62.3 L429.0,61.8 L428.0,61.9 L427.0,62.3 L426.0,62.0 L425.0,59.7 L424.0,58.4 L423.0,58.4 L422.0,58.4 L421.0,58.4 L420.0,58.4 L419.0,58.4 L418.0,58.4 L417.0,58.4 L416.0,58.4 L415.0,58.4 L414.0,58.4 L413.0,58.4 L412.0,58.4 L411.0,58.4 L410.0,58.4 L409.0,58.4 L408.0,58.4 L407.0,58.4 L406.0,58.4 L405.0,58.4 L404.0,58.4 L403.0,58.4 L402.0,58.4 L401.0,58.4 L400.0,58.4 L399.0,58.4 L398.0,58.4 L397.0,59.1 L396.0,88.8 L395.0,86.3 L394.0,63.7 L393.0,63.6 L392.0,63.7 L391.0,63.4 L390.0,63.2 L389.0,63.2 L388.0,63.5 L387.0,63.2 L386.0,63.5 L385.0,63.6 L384.0,63.3 L383.0,62.8 L382.0,62.6 L381.0,63.2 L380.0,63.1 L379.0,63.3 L378.0,63.4 L377.0,63.1 L376.0,63.0 L375.0,63.1 L374.0,62.6 L373.0,62.5 L372.0,62.9 L371.0,62.8 L370.0,62.7 L369.0,62.7 L368.0,63.0 L367.0,62.8 L366.0,62.8 L365.0,62.7 L364.0,62.8 L363.0,62.9 L362.0,62.5 L361.0,62.8 L360.0,63.0 L359.0,65.3 L358.0,65.8 L357.0,64.1 L356.0,65.1 L355.0,63.8 L354.0,61.7 L353.0,61.6 L352.0,61.9 L351.0,62.2 L350.0,62.7 L349.0,62.7 L348.0,62.6 L347.0,62.3 L346.0,61.0 L345.0,61.6 L344.0,62.1 L343.0,62.7 L342.0,62.9 L341.0,63.2 L340.0,62.8 L339.0,61.9 L338.0,61.4 L337.0,62.1 L336.0,63.2 L335.0,64.7 L334.0,64.6 L333.0,63.4 L332.0,64.0 L331.0,62.0 L330.0,59.3 L329.0,58.4 L328.0,58.4 L327.0,59.5 L326.0,60.4 L325.0,60.9 L324.0,60.7 L323.0,62.5 L322.0,64.1 L321.0,65.5 L320.0,65.7 L319.0,64.2 L318.0,63.7 L317.0,61.6 L316.0,60.9 L315.0,61.3 L314.0,63.3 L313.0,64.5 L312.0,64.1 L311.0,64.0 L310.0,63.7 L309.0,63.2 L308.0,60.8 L307.0,60.6 L306.0,60.9 L305.0,60.8 L304.0,60.7 L303.0,59.1 L302.0,58.4 L301.0,58.4 L300.0,58.4 L299.0,58.4 L298.0,58.4 L297.0,58.4 L296.0,58.4 L295.0,58.4 L294.0,58.4 L293.0,58.4 L292.0,58.4 L291.0,58.4 L290.0,58.4 L289.0,58.4 L288.0,60.8 L287.0,62.2 L286.0,61.4 L285.0,62.2 L284.0,61.7 L283.0,63.1 L282.0,62.9 L281.0,62.9 L280.0,62.5 L279.0,62.3 L278.0,62.0 L277.0,62.4 L276.0,61.9 L275.0,63.1 L274.0,62.0 L273.0,62.2 L272.0,62.2 L271.0,62.0 L270.0,63.5 L269.0,64.0 L268.0,62.9 L267.0,63.8 L266.0,62.9 L265.0,61.8 L264.0,61.8 L263.0,62.0 L262.0,63.1 L261.0,63.5 L260.0,62.5 L259.0,61.8 L258.0,61.8 L257.0,61.8 L256.0,62.1 L255.0,62.8 L254.0,63.1 L253.0,62.9 L252.0,62.2 L251.0,61.7 L250.0,61.9 L249.0,62.9 L248.0,63.0 L247.0,63.4 L246.0,63.4 L245.0,62.0 L244.0,61.4 L243.0,61.6 L242.0,62.1 L241.0,61.9 L240.0,62.2 L239.0,61.9 L238.0,62.0 L237.0,61.7 L236.0,61.4 L235.0,61.1 L234.0,62.5 L233.0,62.4 L232.0,62.8 L231.0,62.1 L230.0,62.4 L229.0,61.0 L228.0,61.7 L227.0,61.4 L226.0,61.2 L225.0,61.7 L224.0,61.9 L223.0,62.1 L222.0,61.6 L221.0,61.5 L220.0,61.3 L219.0,61.6 L218.0,61.8 L217.0,62.6 L216.0,62.6 L215.0,62.3 L214.0,61.6 L213.0,61.5 L212.0,61.6 L211.0,61.3 L210.0,61.4 L209.0,61.5 L208.0,61.6 L207.0,61.3 L206.0,61.1 L205.0,61.5 L204.0,61.0 L203.0,61.6 L202.0,61.3 L201.0,61.4 L200.0,61.3 L199.0,61.2 L198.0,60.6 L197.0,59.4 L196.0,58.4 L195.0,58.4 L194.0,60.0 L193.0,61.6 L192.0,61.7 L191.0,61.7 L190.0,61.6 L189.0,61.7 L188.0,61.4 L187.0,61.5 L186.0,61.0 L185.0,61.8 L184.0,63.6 L183.0,63.8 L182.0,63.6 L181.0,64.3 L180.0,64.9 L179.0,64.9 L178.0,65.8 L177.0,65.9 L176.0,65.8 L175.0,65.7 L174.0,65.8 L173.0,66.8 L172.0,64.3 L171.0,64.2 L170.0,64.2 L169.0,63.4 L168.0,63.7 L167.0,60.9 L166.0,59.0 L165.0,58.4 L164.0,58.4 L163.0,58.4 L162.0,58.4 L161.0,58.4 L160.0,58.4 L159.0,58.4 L158.0,58.4 L157.0,58.4 L156.0,58.4 L155.0,58.4 L154.0,58.4 L153.0,58.4 L152.0,58.4 L151.0,58.4 L150.0,58.4 L149.0,58.4 L148.0,58.4 L147.0,58.4 L146.0,58.4 L145.0,58.4 L144.0,58.4 L143.0,58.4 L142.0,60.3 L141.0,61.6 L140.0,61.6 L139.0,62.9 L138.0,62.8 L137.0,62.2 L136.0,62.0 L135.0,61.5 L134.0,63.0 L133.0,63.2 L132.0,63.3 L131.0,63.6 L130.0,61.8 L129.0,61.3 L128.0,62.6 L127.0,63.6 L126.0,63.8 L125.0,64.2 L124.0,63.6 L123.0,61.8 L122.0,61.7 L121.0,61.1 L120.0,64.3 L119.0,64.4 L118.0,64.7 L117.0,64.6 L116.0,63.8 L115.0,62.2 L114.0,62.1 L113.0,63.1 L112.0,65.1 L111.0,65.1 L110.0,65.6 L109.0,65.0 L108.0,65.3 L107.0,62.5 L106.0,62.5 L105.0,62.0 L104.0,63.5 L103.0,64.6 L102.0,64.6 L101.0,64.7 L100.0,64.8 L99.0,63.8 L98.0,62.3 L97.0,61.9 L96.0,61.7 L95.0,62.5 L94.0,63.1 L93.0,65.2 L92.0,65.5 L91.0,65.5 L90.0,65.9 L89.0,65.7 L88.0,64.3 L87.0,64.3 L86.0,64.4 L85.0,63.3 L84.0,62.9 L83.0,61.5 L82.0,61.9 L81.0,58.5 L80.0,58.4 L79.0,58.4 L78.0,59.1 L77.0,60.3 L76.0,60.2 L75.0,60.3 L74.0,61.8 L73.0,66.8 L72.0,67.7 L71.0,67.7 L70.0,66.2 L69.0,64.2 L68.0,60.1 L67.0,60.1 L66.0,60.3 L65.0,61.1 L64.0,62.5 L63.0,62.6 L62.0,62.1 L61.0,62.3 L60.0,60.7 L59.0,59.7 L58.0,58.7 L57.0,58.4 L56.0,58.4 L55.0,58.4 L54.0,58.4 L53.0,58.4 L52.0,58.4 L51.0,59.4 L50.0,60.3 L49.0,60.5 L48.0,61.6 L47.0,64.4 L46.0,65.5 L45.0,65.3 L44.0,65.3 L43.0,64.3 L42.0,62.7 L41.0,66.4 L40.0,67.2 L39.0,66.5 L38.0,66.1 L37.0,65.1 L36.0,64.1 L35.0,66.1 L34.0,64.0 L33.0,62.6 L32.0,62.9 L31.0,62.2 L30.0,62.1 L29.0,61.7 L28.0,61.8 L27.0,59.7 L26.0,58.4 L25.0,58.4 L24.0,58.4 L23.0,58.4 L22.0,58.4 L21.0,58.4 L20.0,58.4 L19.0,58.4 L18.0,58.4 L17.0,58.4 L16.0,58.4 L15.0,58.4 L14.0,58.4 L13.0,58.4 L12.0,58.4 L11.0,58.4 L10.0,58.4 L9.0,58.4 L8.0,58.4 L7.0,58.4 L6.0,58.4 L5.0,58.4 L4.0,58.4 L3.0,58.4 L2.0,58.4 L1.0,58.4 L0.0,58.4Z" fill="#062a22"/></svg>
</div>
<div class="a" style="left:171.5px;top:479.6px;width:330.0px;height:85.39999999999998px;background:#fd9191;overflow:hidden">
<div class="a" style="left:0;top:0;width:330.0px;height:10.5px;background:#fb7a7a"></div>
<div class="lbl" style="left:1.8px;top:2.55px;font-size:7.1px;color:#5e1818">Audio 1 #1</div>
<svg class="a" style="left:0;top:0" width="330.0" height="85.39999999999998"><rect x="0" y="58.19999999999993" width="330.0" height="1" fill="#2e1010"/><path d="M0.0,58.2 L1.0,58.2 L2.0,58.2 L3.0,58.2 L4.0,58.2 L5.0,58.2 L6.0,58.2 L7.0,58.2 L8.0,55.8 L9.0,55.2 L10.0,54.2 L11.0,52.8 L12.0,40.6 L13.0,45.5 L14.0,51.3 L15.0,55.2 L16.0,57.7 L17.0,58.2 L18.0,56.0 L19.0,52.8 L20.0,53.9 L21.0,51.9 L22.0,48.5 L23.0,54.5 L24.0,56.5 L25.0,53.8 L26.0,52.4 L27.0,50.5 L28.0,51.9 L29.0,52.0 L30.0,53.9 L31.0,51.8 L32.0,53.8 L33.0,49.3 L34.0,50.2 L35.0,53.3 L36.0,53.5 L37.0,53.1 L38.0,53.9 L39.0,52.8 L40.0,53.9 L41.0,53.2 L42.0,53.4 L43.0,55.0 L44.0,56.9 L45.0,58.2 L46.0,58.2 L47.0,58.2 L48.0,58.2 L49.0,58.2 L50.0,58.2 L51.0,57.5 L52.0,51.7 L53.0,50.4 L54.0,50.6 L55.0,49.8 L56.0,53.7 L57.0,54.2 L58.0,54.6 L59.0,54.3 L60.0,55.1 L61.0,55.5 L62.0,54.7 L63.0,54.5 L64.0,55.7 L65.0,54.4 L66.0,53.1 L67.0,53.6 L68.0,55.3 L69.0,54.5 L70.0,54.7 L71.0,54.2 L72.0,53.3 L73.0,54.7 L74.0,54.8 L75.0,54.8 L76.0,53.5 L77.0,53.5 L78.0,53.9 L79.0,54.2 L80.0,54.4 L81.0,53.0 L82.0,54.6 L83.0,51.5 L84.0,54.3 L85.0,52.9 L86.0,53.2 L87.0,54.0 L88.0,54.9 L89.0,54.3 L90.0,58.2 L91.0,58.2 L92.0,58.2 L93.0,58.2 L94.0,56.4 L95.0,55.5 L96.0,52.7 L97.0,52.8 L98.0,53.4 L99.0,53.0 L100.0,52.2 L101.0,56.3 L102.0,55.4 L103.0,51.8 L104.0,52.7 L105.0,53.0 L106.0,54.7 L107.0,55.9 L108.0,54.0 L109.0,53.6 L110.0,53.7 L111.0,53.3 L112.0,54.8 L113.0,55.0 L114.0,55.0 L115.0,52.9 L116.0,53.4 L117.0,53.1 L118.0,52.3 L119.0,54.1 L120.0,52.1 L121.0,51.9 L122.0,25.6 L123.0,26.9 L124.0,58.2 L125.0,58.2 L126.0,58.2 L127.0,58.2 L128.0,58.2 L129.0,58.2 L130.0,58.2 L131.0,58.2 L132.0,53.9 L133.0,54.5 L134.0,43.2 L135.0,55.5 L136.0,57.3 L137.0,57.6 L138.0,58.2 L139.0,55.9 L140.0,55.5 L141.0,58.2 L142.0,58.2 L143.0,58.2 L144.0,58.2 L145.0,55.5 L146.0,55.6 L147.0,58.2 L148.0,58.2 L149.0,57.9 L150.0,58.0 L151.0,58.0 L152.0,56.6 L153.0,57.3 L154.0,58.1 L155.0,57.5 L156.0,58.1 L157.0,58.2 L158.0,58.2 L159.0,58.2 L160.0,58.2 L161.0,58.2 L162.0,58.2 L163.0,54.8 L164.0,53.9 L165.0,53.9 L166.0,52.0 L167.0,49.3 L168.0,48.7 L169.0,51.9 L170.0,52.8 L171.0,55.0 L172.0,56.8 L173.0,52.2 L174.0,49.9 L175.0,49.9 L176.0,48.3 L177.0,51.3 L178.0,48.9 L179.0,52.6 L180.0,54.2 L181.0,53.7 L182.0,54.5 L183.0,54.3 L184.0,52.9 L185.0,54.4 L186.0,53.1 L187.0,55.7 L188.0,55.2 L189.0,57.4 L190.0,54.7 L191.0,57.5 L192.0,54.4 L193.0,54.5 L194.0,56.2 L195.0,54.7 L196.0,57.9 L197.0,54.8 L198.0,56.4 L199.0,55.9 L200.0,56.4 L201.0,57.4 L202.0,55.3 L203.0,57.2 L204.0,55.8 L205.0,55.6 L206.0,57.4 L207.0,55.7 L208.0,57.6 L209.0,55.6 L210.0,56.6 L211.0,55.8 L212.0,56.0 L213.0,57.4 L214.0,54.7 L215.0,57.5 L216.0,54.9 L217.0,54.9 L218.0,56.9 L219.0,55.3 L220.0,57.7 L221.0,55.0 L222.0,56.4 L223.0,56.0 L224.0,54.8 L225.0,57.7 L226.0,57.4 L227.0,54.7 L228.0,55.3 L229.0,55.9 L230.0,56.1 L231.0,55.8 L232.0,52.7 L233.0,54.3 L234.0,55.0 L235.0,55.2 L236.0,56.9 L237.0,53.3 L238.0,54.4 L239.0,54.1 L240.0,53.6 L241.0,54.2 L242.0,53.0 L243.0,53.1 L244.0,52.2 L245.0,51.2 L246.0,56.2 L247.0,58.2 L248.0,58.2 L249.0,58.2 L250.0,58.2 L251.0,58.2 L252.0,58.2 L253.0,55.0 L254.0,54.4 L255.0,53.2 L256.0,53.8 L257.0,53.8 L258.0,53.8 L259.0,53.4 L260.0,54.8 L261.0,53.2 L262.0,54.4 L263.0,53.5 L264.0,58.2 L265.0,58.2 L266.0,58.2 L267.0,58.2 L268.0,58.2 L269.0,52.5 L270.0,51.6 L271.0,42.8 L272.0,35.8 L273.0,31.4 L274.0,40.9 L275.0,49.7 L276.0,51.9 L277.0,52.1 L278.0,53.3 L279.0,52.7 L280.0,53.2 L281.0,54.6 L282.0,54.6 L283.0,53.8 L284.0,54.1 L285.0,53.7 L286.0,54.9 L287.0,54.8 L288.0,54.3 L289.0,54.1 L290.0,54.4 L291.0,55.7 L292.0,55.5 L293.0,54.9 L294.0,56.4 L295.0,55.4 L296.0,58.2 L297.0,58.2 L298.0,58.2 L299.0,58.2 L300.0,50.7 L301.0,49.2 L302.0,50.4 L303.0,50.8 L304.0,51.1 L305.0,48.3 L306.0,51.3 L307.0,48.4 L308.0,50.3 L309.0,58.2 L310.0,49.8 L311.0,52.0 L312.0,50.3 L313.0,52.5 L314.0,49.7 L315.0,44.7 L316.0,41.1 L317.0,44.1 L318.0,51.8 L319.0,49.7 L320.0,50.2 L321.0,58.2 L322.0,58.2 L323.0,58.2 L324.0,58.2 L325.0,58.2 L326.0,58.2 L327.0,58.2 L328.0,58.2 L329.0,58.2 L330.0,58.2 L330.0,59.2 L329.0,59.2 L328.0,59.2 L327.0,59.2 L326.0,59.2 L325.0,59.2 L324.0,59.2 L323.0,59.2 L322.0,59.2 L321.0,59.2 L320.0,65.7 L319.0,67.3 L318.0,67.1 L317.0,69.8 L316.0,72.6 L315.0,68.3 L314.0,65.2 L313.0,66.9 L312.0,66.7 L311.0,65.3 L310.0,65.0 L309.0,59.2 L308.0,64.1 L307.0,65.5 L306.0,65.6 L305.0,64.5 L304.0,64.6 L303.0,65.7 L302.0,63.5 L301.0,65.2 L300.0,63.4 L299.0,59.2 L298.0,59.2 L297.0,59.2 L296.0,59.2 L295.0,61.6 L294.0,61.4 L293.0,61.3 L292.0,61.4 L291.0,62.1 L290.0,62.0 L289.0,61.6 L288.0,63.1 L287.0,63.5 L286.0,62.8 L285.0,62.6 L284.0,63.9 L283.0,62.5 L282.0,64.1 L281.0,63.2 L280.0,63.8 L279.0,64.9 L278.0,64.1 L277.0,65.9 L276.0,65.6 L275.0,64.2 L274.0,67.2 L273.0,71.9 L272.0,70.8 L271.0,70.5 L270.0,67.5 L269.0,64.9 L268.0,59.2 L267.0,59.2 L266.0,59.2 L265.0,59.2 L264.0,59.2 L263.0,62.4 L262.0,63.1 L261.0,63.2 L260.0,63.2 L259.0,63.3 L258.0,62.8 L257.0,63.3 L256.0,63.0 L255.0,64.0 L254.0,62.2 L253.0,62.4 L252.0,59.2 L251.0,59.2 L250.0,59.2 L249.0,59.2 L248.0,59.2 L247.0,59.2 L246.0,60.3 L245.0,64.0 L244.0,64.5 L243.0,62.7 L242.0,64.1 L241.0,62.5 L240.0,64.7 L239.0,64.2 L238.0,64.9 L237.0,62.8 L236.0,60.6 L235.0,62.0 L234.0,61.7 L233.0,63.2 L232.0,62.8 L231.0,61.3 L230.0,62.0 L229.0,62.2 L228.0,61.6 L227.0,62.5 L226.0,59.7 L225.0,59.8 L224.0,60.5 L223.0,60.0 L222.0,60.0 L221.0,60.5 L220.0,59.6 L219.0,60.4 L218.0,59.9 L217.0,61.0 L216.0,60.6 L215.0,59.7 L214.0,60.9 L213.0,59.6 L212.0,61.0 L211.0,60.4 L210.0,59.6 L209.0,60.4 L208.0,59.6 L207.0,60.3 L206.0,59.7 L205.0,60.6 L204.0,60.8 L203.0,59.8 L202.0,61.1 L201.0,60.0 L200.0,61.5 L199.0,60.3 L198.0,59.9 L197.0,60.6 L196.0,59.6 L195.0,61.0 L194.0,59.9 L193.0,60.6 L192.0,61.6 L191.0,59.7 L190.0,60.8 L189.0,60.0 L188.0,61.0 L187.0,60.5 L186.0,62.9 L185.0,63.5 L184.0,63.9 L183.0,64.5 L182.0,64.4 L181.0,62.6 L180.0,61.8 L179.0,63.3 L178.0,65.6 L177.0,66.4 L176.0,67.9 L175.0,66.7 L174.0,67.4 L173.0,67.2 L172.0,60.2 L171.0,62.2 L170.0,62.7 L169.0,65.0 L168.0,67.2 L167.0,66.8 L166.0,64.7 L165.0,63.0 L164.0,63.3 L163.0,62.2 L162.0,59.2 L161.0,59.2 L160.0,59.2 L159.0,59.2 L158.0,59.2 L157.0,59.2 L156.0,59.2 L155.0,59.9 L154.0,59.2 L153.0,59.6 L152.0,60.4 L151.0,59.6 L150.0,59.6 L149.0,59.8 L148.0,59.2 L147.0,59.2 L146.0,61.1 L145.0,62.2 L144.0,59.2 L143.0,59.2 L142.0,59.2 L141.0,59.2 L140.0,61.0 L139.0,61.3 L138.0,59.2 L137.0,60.2 L136.0,60.8 L135.0,62.7 L134.0,72.6 L133.0,61.8 L132.0,63.4 L131.0,59.2 L130.0,59.2 L129.0,59.2 L128.0,59.2 L127.0,59.2 L126.0,59.2 L125.0,59.2 L124.0,59.2 L123.0,93.2 L122.0,90.4 L121.0,63.0 L120.0,63.4 L119.0,65.2 L118.0,63.0 L117.0,64.5 L116.0,64.4 L115.0,62.8 L114.0,62.8 L113.0,63.3 L112.0,62.8 L111.0,65.7 L110.0,65.8 L109.0,63.1 L108.0,64.1 L107.0,62.6 L106.0,64.8 L105.0,63.8 L104.0,65.6 L103.0,63.4 L102.0,61.7 L101.0,61.3 L100.0,63.9 L99.0,64.2 L98.0,64.3 L97.0,65.0 L96.0,63.5 L95.0,61.1 L94.0,61.0 L93.0,59.2 L92.0,59.2 L91.0,59.2 L90.0,59.2 L89.0,63.3 L88.0,63.4 L87.0,62.2 L86.0,62.9 L85.0,63.7 L84.0,63.7 L83.0,64.7 L82.0,62.5 L81.0,64.3 L80.0,61.9 L79.0,62.9 L78.0,63.5 L77.0,64.4 L76.0,63.9 L75.0,63.3 L74.0,63.4 L73.0,62.1 L72.0,62.2 L71.0,61.9 L70.0,61.3 L69.0,63.1 L68.0,62.5 L67.0,64.0 L66.0,62.9 L65.0,61.8 L64.0,62.0 L63.0,61.5 L62.0,61.4 L61.0,61.6 L60.0,61.3 L59.0,62.9 L58.0,61.8 L57.0,63.8 L56.0,64.9 L55.0,65.6 L54.0,64.6 L53.0,67.3 L52.0,63.2 L51.0,59.5 L50.0,59.2 L49.0,59.2 L48.0,59.2 L47.0,59.2 L46.0,59.2 L45.0,59.2 L44.0,61.9 L43.0,63.7 L42.0,62.1 L41.0,64.0 L40.0,64.9 L39.0,65.0 L38.0,64.2 L37.0,65.6 L36.0,64.2 L35.0,65.5 L34.0,67.0 L33.0,64.7 L32.0,64.6 L31.0,66.7 L30.0,64.9 L29.0,65.9 L28.0,67.1 L27.0,66.9 L26.0,63.8 L25.0,61.8 L24.0,60.8 L23.0,62.7 L22.0,65.6 L21.0,67.6 L20.0,63.0 L19.0,62.8 L18.0,61.2 L17.0,59.2 L16.0,59.6 L15.0,62.8 L14.0,64.1 L13.0,64.2 L12.0,66.5 L11.0,66.0 L10.0,65.1 L9.0,62.2 L8.0,62.5 L7.0,59.2 L6.0,59.2 L5.0,59.2 L4.0,59.2 L3.0,59.2 L2.0,59.2 L1.0,59.2 L0.0,59.2Z" fill="#2e1010"/></svg>
<div class="lbl" style="left:288.5px;top:2.15px;font-size:7.2px;color:#5e1818"><svg width="7" height="7" style="vertical-align:-0.8px"><circle cx="3.5" cy="3.5" r="2.8" fill="none" stroke="#5e1818" stroke-width="0.9"/><path d="M3.5 1.8v1.9l1.2 0.8" fill="none" stroke="#5e1818" stroke-width="0.8"/></svg>322%</div>
<div class="a" style="left:317.4px;top:5.05px;width:1.4px;height:1.4px;background:#5e1818;border-radius:1px"></div>
<div class="a" style="left:321.5px;top:5.05px;width:1.4px;height:1.4px;background:#5e1818;border-radius:1px"></div>
<div class="a" style="left:325.59999999999997px;top:5.05px;width:1.4px;height:1.4px;background:#5e1818;border-radius:1px"></div>
</div>
<div class="a" style="left:501.5px;top:479.6px;width:331.0px;height:85.39999999999998px;background:#fd9191;overflow:hidden">
<div class="a" style="left:0;top:0;width:331.0px;height:10.5px;background:#fb7a7a"></div>
<div class="lbl" style="left:1.8px;top:2.55px;font-size:7.1px;color:#5e1818">Audio 1 #1</div>
<svg class="a" style="left:0;top:0" width="331.0" height="85.39999999999998"><rect x="0" y="58.19999999999993" width="331.0" height="1" fill="#2e1010"/><path d="M0.0,58.2 L1.0,58.2 L2.0,58.2 L3.0,58.2 L4.0,58.2 L5.0,58.2 L6.0,58.2 L7.0,58.2 L8.0,54.9 L9.0,54.9 L10.0,53.8 L11.0,50.5 L12.0,40.6 L13.0,45.5 L14.0,52.9 L15.0,54.3 L16.0,57.5 L17.0,58.2 L18.0,55.9 L19.0,54.0 L20.0,54.9 L21.0,51.3 L22.0,50.1 L23.0,53.8 L24.0,56.0 L25.0,54.0 L26.0,52.5 L27.0,52.7 L28.0,53.0 L29.0,52.2 L30.0,53.7 L31.0,52.8 L32.0,53.3 L33.0,50.2 L34.0,52.7 L35.0,51.8 L36.0,52.9 L37.0,51.9 L38.0,55.2 L39.0,53.7 L40.0,52.4 L41.0,52.0 L42.0,55.2 L43.0,55.2 L44.0,56.7 L45.0,58.2 L46.0,58.2 L47.0,58.2 L48.0,58.2 L49.0,58.2 L50.0,58.2 L51.0,57.4 L52.0,51.8 L53.0,51.4 L54.0,49.7 L55.0,52.8 L56.0,53.3 L57.0,54.0 L58.0,54.5 L59.0,54.3 L60.0,55.1 L61.0,54.7 L62.0,54.7 L63.0,54.1 L64.0,55.0 L65.0,55.6 L66.0,55.2 L67.0,52.9 L68.0,55.5 L69.0,54.7 L70.0,55.8 L71.0,54.6 L72.0,54.1 L73.0,54.8 L74.0,53.2 L75.0,53.4 L76.0,53.2 L77.0,52.6 L78.0,54.1 L79.0,54.5 L80.0,53.0 L81.0,50.9 L82.0,54.1 L83.0,52.1 L84.0,54.6 L85.0,53.8 L86.0,54.9 L87.0,52.3 L88.0,53.5 L89.0,53.5 L90.0,58.2 L91.0,58.2 L92.0,58.2 L93.0,58.2 L94.0,56.1 L95.0,55.6 L96.0,53.0 L97.0,53.4 L98.0,53.6 L99.0,53.6 L100.0,52.0 L101.0,56.2 L102.0,55.4 L103.0,52.4 L104.0,53.1 L105.0,54.9 L106.0,54.5 L107.0,55.7 L108.0,53.0 L109.0,54.5 L110.0,52.3 L111.0,51.3 L112.0,52.8 L113.0,53.8 L114.0,53.6 L115.0,54.9 L116.0,54.8 L117.0,53.0 L118.0,53.9 L119.0,53.9 L120.0,53.1 L121.0,52.0 L122.0,25.6 L123.0,26.9 L124.0,58.2 L125.0,58.2 L126.0,58.2 L127.0,58.2 L128.0,58.2 L129.0,58.2 L130.0,58.2 L131.0,58.2 L132.0,55.5 L133.0,53.7 L134.0,43.2 L135.0,54.2 L136.0,57.0 L137.0,57.4 L138.0,58.2 L139.0,56.6 L140.0,55.5 L141.0,58.2 L142.0,58.2 L143.0,58.2 L144.0,58.2 L145.0,55.7 L146.0,55.9 L147.0,58.2 L148.0,58.2 L149.0,57.6 L150.0,57.9 L151.0,57.9 L152.0,56.7 L153.0,57.2 L154.0,58.1 L155.0,56.9 L156.0,58.0 L157.0,58.2 L158.0,58.2 L159.0,58.2 L160.0,58.2 L161.0,58.2 L162.0,58.2 L163.0,55.0 L164.0,55.1 L165.0,54.5 L166.0,51.1 L167.0,50.0 L168.0,48.3 L169.0,49.3 L170.0,52.3 L171.0,54.2 L172.0,56.5 L173.0,52.0 L174.0,50.4 L175.0,50.3 L176.0,48.6 L177.0,51.3 L178.0,52.2 L179.0,53.4 L180.0,54.8 L181.0,54.3 L182.0,54.2 L183.0,54.0 L184.0,54.0 L185.0,54.1 L186.0,53.4 L187.0,55.0 L188.0,55.1 L189.0,57.3 L190.0,54.0 L191.0,57.5 L192.0,53.9 L193.0,55.5 L194.0,55.9 L195.0,54.1 L196.0,57.5 L197.0,55.4 L198.0,55.7 L199.0,55.4 L200.0,56.0 L201.0,57.4 L202.0,55.5 L203.0,57.4 L204.0,55.0 L205.0,55.3 L206.0,57.5 L207.0,55.0 L208.0,57.7 L209.0,55.3 L210.0,57.3 L211.0,55.5 L212.0,55.6 L213.0,57.7 L214.0,55.0 L215.0,57.4 L216.0,54.1 L217.0,54.3 L218.0,57.0 L219.0,55.5 L220.0,57.8 L221.0,54.5 L222.0,56.1 L223.0,56.1 L224.0,55.8 L225.0,57.7 L226.0,57.6 L227.0,55.0 L228.0,54.9 L229.0,54.7 L230.0,55.0 L231.0,54.8 L232.0,51.9 L233.0,53.4 L234.0,55.0 L235.0,55.8 L236.0,56.0 L237.0,53.9 L238.0,54.0 L239.0,53.7 L240.0,54.4 L241.0,54.3 L242.0,53.4 L243.0,54.1 L244.0,49.6 L245.0,50.3 L246.0,56.4 L247.0,58.2 L248.0,58.2 L249.0,58.2 L250.0,58.2 L251.0,58.2 L252.0,58.2 L253.0,53.4 L254.0,54.3 L255.0,54.0 L256.0,53.5 L257.0,54.4 L258.0,54.1 L259.0,54.2 L260.0,54.4 L261.0,54.1 L262.0,54.0 L263.0,53.0 L264.0,58.2 L265.0,58.2 L266.0,58.2 L267.0,58.2 L268.0,58.2 L269.0,50.0 L270.0,52.4 L271.0,42.8 L272.0,35.3 L273.0,31.3 L274.0,40.9 L275.0,51.3 L276.0,53.1 L277.0,51.0 L278.0,53.2 L279.0,52.4 L280.0,54.2 L281.0,53.2 L282.0,53.0 L283.0,53.8 L284.0,54.7 L285.0,54.5 L286.0,54.3 L287.0,54.0 L288.0,54.0 L289.0,55.8 L290.0,55.1 L291.0,56.1 L292.0,55.8 L293.0,55.1 L294.0,56.1 L295.0,55.4 L296.0,58.2 L297.0,58.2 L298.0,58.2 L299.0,58.2 L300.0,51.9 L301.0,51.8 L302.0,50.2 L303.0,49.1 L304.0,51.3 L305.0,48.0 L306.0,48.4 L307.0,47.1 L308.0,52.8 L309.0,58.2 L310.0,51.0 L311.0,51.1 L312.0,51.5 L313.0,50.3 L314.0,50.0 L315.0,44.7 L316.0,41.1 L317.0,44.1 L318.0,49.3 L319.0,52.1 L320.0,49.5 L321.0,58.2 L322.0,58.2 L323.0,58.2 L324.0,58.2 L325.0,58.2 L326.0,58.2 L327.0,58.2 L328.0,58.2 L329.0,58.2 L330.0,58.2 L331.0,58.2 L331.0,59.2 L330.0,59.2 L329.0,59.2 L328.0,59.2 L327.0,59.2 L326.0,59.2 L325.0,59.2 L324.0,59.2 L323.0,59.2 L322.0,59.2 L321.0,59.2 L320.0,64.7 L319.0,65.9 L318.0,64.5 L317.0,69.6 L316.0,72.6 L315.0,66.4 L314.0,64.0 L313.0,64.4 L312.0,64.1 L311.0,66.0 L310.0,66.9 L309.0,59.2 L308.0,65.3 L307.0,66.6 L306.0,64.6 L305.0,64.1 L304.0,64.8 L303.0,64.3 L302.0,66.5 L301.0,64.6 L300.0,63.1 L299.0,59.2 L298.0,59.2 L297.0,59.2 L296.0,59.2 L295.0,61.2 L294.0,61.4 L293.0,62.0 L292.0,61.7 L291.0,61.5 L290.0,62.8 L289.0,62.4 L288.0,61.7 L287.0,62.3 L286.0,62.5 L285.0,62.1 L284.0,62.1 L283.0,62.2 L282.0,62.5 L281.0,64.2 L280.0,63.4 L279.0,65.0 L278.0,65.1 L277.0,66.4 L276.0,65.2 L275.0,66.4 L274.0,65.5 L273.0,72.0 L272.0,70.8 L271.0,70.6 L270.0,67.9 L269.0,66.3 L268.0,59.2 L267.0,59.2 L266.0,59.2 L265.0,59.2 L264.0,59.2 L263.0,63.3 L262.0,63.8 L261.0,63.2 L260.0,63.3 L259.0,63.4 L258.0,62.8 L257.0,62.6 L256.0,63.1 L255.0,64.4 L254.0,62.3 L253.0,62.0 L252.0,59.2 L251.0,59.2 L250.0,59.2 L249.0,59.2 L248.0,59.2 L247.0,59.2 L246.0,61.2 L245.0,65.1 L244.0,64.8 L243.0,62.9 L242.0,62.5 L241.0,62.8 L240.0,64.3 L239.0,63.1 L238.0,64.2 L237.0,62.9 L236.0,61.0 L235.0,62.4 L234.0,62.6 L233.0,63.8 L232.0,63.6 L231.0,62.0 L230.0,62.2 L229.0,61.9 L228.0,62.4 L227.0,61.4 L226.0,59.6 L225.0,60.0 L224.0,60.9 L223.0,60.2 L222.0,60.1 L221.0,60.6 L220.0,59.5 L219.0,60.7 L218.0,59.5 L217.0,60.9 L216.0,60.3 L215.0,59.9 L214.0,60.4 L213.0,59.8 L212.0,61.0 L211.0,60.0 L210.0,59.5 L209.0,60.6 L208.0,59.8 L207.0,61.2 L206.0,59.7 L205.0,60.5 L204.0,61.1 L203.0,59.7 L202.0,61.0 L201.0,59.9 L200.0,60.5 L199.0,60.2 L198.0,60.2 L197.0,60.7 L196.0,59.9 L195.0,60.6 L194.0,60.0 L193.0,60.7 L192.0,60.7 L191.0,59.9 L190.0,61.3 L189.0,59.9 L188.0,61.3 L187.0,61.0 L186.0,62.4 L185.0,62.4 L184.0,64.8 L183.0,63.5 L182.0,64.4 L181.0,62.8 L180.0,62.2 L179.0,65.2 L178.0,66.3 L177.0,65.8 L176.0,66.1 L175.0,66.8 L174.0,66.1 L173.0,68.1 L172.0,60.1 L171.0,62.9 L170.0,65.1 L169.0,64.4 L168.0,65.2 L167.0,65.2 L166.0,65.7 L165.0,62.3 L164.0,63.1 L163.0,61.7 L162.0,59.2 L161.0,59.2 L160.0,59.2 L159.0,59.2 L158.0,59.2 L157.0,59.2 L156.0,59.3 L155.0,60.3 L154.0,59.2 L153.0,59.8 L152.0,60.8 L151.0,59.4 L150.0,59.3 L149.0,59.6 L148.0,59.2 L147.0,59.2 L146.0,61.5 L145.0,61.6 L144.0,59.2 L143.0,59.2 L142.0,59.2 L141.0,59.2 L140.0,61.4 L139.0,61.2 L138.0,59.2 L137.0,59.8 L136.0,60.6 L135.0,62.1 L134.0,72.6 L133.0,62.3 L132.0,63.5 L131.0,59.2 L130.0,59.2 L129.0,59.2 L128.0,59.2 L127.0,59.2 L126.0,59.2 L125.0,59.2 L124.0,59.2 L123.0,93.2 L122.0,90.4 L121.0,62.8 L120.0,63.2 L119.0,63.2 L118.0,62.7 L117.0,64.4 L116.0,62.5 L115.0,63.2 L114.0,63.7 L113.0,62.1 L112.0,64.3 L111.0,64.1 L110.0,66.7 L109.0,61.9 L108.0,63.8 L107.0,62.8 L106.0,63.1 L105.0,63.7 L104.0,66.1 L103.0,66.0 L102.0,61.5 L101.0,61.3 L100.0,64.5 L99.0,67.3 L98.0,63.7 L97.0,63.7 L96.0,63.0 L95.0,61.3 L94.0,61.8 L93.0,59.2 L92.0,59.2 L91.0,59.2 L90.0,59.2 L89.0,61.8 L88.0,62.5 L87.0,63.8 L86.0,63.0 L85.0,64.2 L84.0,63.9 L83.0,65.7 L82.0,64.1 L81.0,63.5 L80.0,62.7 L79.0,62.3 L78.0,62.5 L77.0,64.2 L76.0,64.7 L75.0,63.1 L74.0,61.7 L73.0,61.5 L72.0,62.4 L71.0,63.4 L70.0,62.2 L69.0,63.3 L68.0,62.3 L67.0,63.0 L66.0,63.0 L65.0,62.1 L64.0,62.2 L63.0,62.5 L62.0,61.6 L61.0,61.1 L60.0,61.7 L59.0,61.9 L58.0,62.8 L57.0,63.3 L56.0,66.0 L55.0,64.8 L54.0,67.2 L53.0,66.5 L52.0,63.6 L51.0,59.7 L50.0,59.2 L49.0,59.2 L48.0,59.2 L47.0,59.2 L46.0,59.2 L45.0,59.2 L44.0,61.9 L43.0,63.5 L42.0,63.0 L41.0,63.8 L40.0,64.8 L39.0,64.5 L38.0,63.5 L37.0,64.2 L36.0,64.2 L35.0,63.3 L34.0,64.1 L33.0,65.6 L32.0,65.4 L31.0,65.3 L30.0,65.4 L29.0,64.9 L28.0,67.2 L27.0,67.6 L26.0,64.6 L25.0,62.6 L24.0,60.7 L23.0,62.4 L22.0,68.5 L21.0,66.1 L20.0,62.6 L19.0,62.6 L18.0,61.4 L17.0,59.2 L16.0,59.5 L15.0,62.2 L14.0,64.7 L13.0,64.5 L12.0,67.1 L11.0,67.9 L10.0,66.6 L9.0,63.1 L8.0,62.5 L7.0,59.2 L6.0,59.2 L5.0,59.2 L4.0,59.2 L3.0,59.2 L2.0,59.2 L1.0,59.2 L0.0,59.2Z" fill="#2e1010"/></svg>
<div class="lbl" style="left:289.5px;top:2.15px;font-size:7.2px;color:#5e1818"><svg width="7" height="7" style="vertical-align:-0.8px"><circle cx="3.5" cy="3.5" r="2.8" fill="none" stroke="#5e1818" stroke-width="0.9"/><path d="M3.5 1.8v1.9l1.2 0.8" fill="none" stroke="#5e1818" stroke-width="0.8"/></svg>322%</div>
<div class="a" style="left:318.4px;top:5.05px;width:1.4px;height:1.4px;background:#5e1818;border-radius:1px"></div>
<div class="a" style="left:322.5px;top:5.05px;width:1.4px;height:1.4px;background:#5e1818;border-radius:1px"></div>
<div class="a" style="left:326.59999999999997px;top:5.05px;width:1.4px;height:1.4px;background:#5e1818;border-radius:1px"></div>
</div>
<div class="a" style="left:500.5px;top:479.6px;width:1.5px;height:85.39999999999998px;background:#2e1010;opacity:0.9"></div>
<div class="a" style="left:832.5px;top:479.6px;width:158.70000000000005px;height:85.39999999999998px;background:#fd9191;overflow:hidden">
<div class="a" style="left:0;top:0;width:158.70000000000005px;height:10.5px;background:#fb7a7a"></div>
<div class="lbl" style="left:1.8px;top:2.55px;font-size:7.1px;color:#5e1818">Audio 1 #1</div>
<svg class="a" style="left:0;top:0" width="158.70000000000005" height="85.39999999999998"><rect x="0" y="58.19999999999993" width="158.70000000000005" height="1" fill="#2e1010"/><path d="M0.0,58.2 L1.0,58.2 L2.0,58.2 L3.0,58.2 L4.0,58.2 L5.0,58.2 L6.0,58.2 L7.0,58.2 L8.0,55.3 L9.0,53.6 L10.0,53.0 L11.0,50.1 L12.0,40.6 L13.0,45.5 L14.0,52.4 L15.0,54.6 L16.0,57.4 L17.0,58.2 L18.0,56.5 L19.0,55.1 L20.0,55.5 L21.0,50.4 L22.0,51.1 L23.0,53.9 L24.0,56.7 L25.0,54.8 L26.0,51.6 L27.0,50.7 L28.0,50.8 L29.0,52.9 L30.0,52.2 L31.0,52.1 L32.0,53.5 L33.0,48.7 L34.0,49.6 L35.0,52.6 L36.0,51.7 L37.0,51.5 L38.0,53.7 L39.0,53.4 L40.0,53.2 L41.0,53.5 L42.0,53.8 L43.0,54.1 L44.0,56.5 L45.0,58.2 L46.0,58.2 L47.0,58.2 L48.0,58.2 L49.0,58.2 L50.0,58.2 L51.0,57.4 L52.0,54.1 L53.0,50.1 L54.0,51.1 L55.0,50.6 L56.0,51.4 L57.0,53.7 L58.0,54.6 L59.0,54.3 L60.0,54.9 L61.0,55.9 L62.0,54.3 L63.0,54.8 L64.0,55.6 L65.0,55.1 L66.0,53.7 L67.0,54.7 L68.0,55.0 L69.0,53.9 L70.0,55.6 L71.0,55.6 L72.0,53.5 L73.0,55.2 L74.0,54.9 L75.0,54.3 L76.0,52.1 L77.0,52.3 L78.0,52.9 L79.0,53.3 L80.0,52.6 L81.0,51.5 L82.0,52.6 L83.0,51.9 L84.0,51.9 L85.0,54.3 L86.0,53.6 L87.0,53.2 L88.0,53.6 L89.0,53.9 L90.0,58.2 L91.0,58.2 L92.0,58.2 L93.0,58.2 L94.0,56.3 L95.0,55.5 L96.0,53.0 L97.0,51.1 L98.0,52.4 L99.0,51.0 L100.0,51.7 L101.0,56.4 L102.0,56.2 L103.0,53.2 L104.0,53.9 L105.0,53.0 L106.0,54.7 L107.0,55.9 L108.0,52.8 L109.0,54.4 L110.0,51.6 L111.0,51.3 L112.0,52.8 L113.0,54.9 L114.0,53.3 L115.0,53.9 L116.0,53.2 L117.0,54.7 L118.0,53.7 L119.0,53.7 L120.0,53.6 L121.0,53.8 L122.0,25.6 L123.0,26.9 L124.0,58.2 L125.0,58.2 L126.0,58.2 L127.0,58.2 L128.0,58.2 L129.0,58.2 L130.0,58.2 L131.0,58.2 L132.0,54.7 L133.0,54.7 L134.0,43.2 L135.0,55.2 L136.0,57.2 L137.0,57.6 L138.0,58.2 L139.0,56.2 L140.0,56.0 L141.0,58.2 L142.0,58.2 L143.0,58.2 L144.0,58.2 L145.0,55.7 L146.0,56.3 L147.0,58.2 L148.0,58.2 L149.0,57.8 L150.0,58.1 L151.0,57.9 L152.0,56.6 L153.0,57.0 L154.0,58.1 L155.0,57.1 L156.0,58.1 L157.0,58.2 L158.0,58.2 L158.0,59.2 L157.0,59.2 L156.0,59.3 L155.0,59.8 L154.0,59.2 L153.0,59.6 L152.0,60.5 L151.0,59.7 L150.0,59.4 L149.0,59.7 L148.0,59.2 L147.0,59.2 L146.0,62.1 L145.0,62.3 L144.0,59.2 L143.0,59.2 L142.0,59.2 L141.0,59.2 L140.0,60.8 L139.0,61.5 L138.0,59.2 L137.0,60.0 L136.0,60.9 L135.0,62.4 L134.0,72.6 L133.0,62.4 L132.0,62.9 L131.0,59.2 L130.0,59.2 L129.0,59.2 L128.0,59.2 L127.0,59.2 L126.0,59.2 L125.0,59.2 L124.0,59.2 L123.0,94.0 L122.0,90.4 L121.0,65.0 L120.0,62.8 L119.0,64.8 L118.0,63.4 L117.0,63.7 L116.0,63.5 L115.0,64.3 L114.0,64.1 L113.0,62.1 L112.0,63.9 L111.0,64.5 L110.0,65.6 L109.0,62.5 L108.0,62.4 L107.0,62.2 L106.0,62.9 L105.0,63.9 L104.0,63.7 L103.0,65.2 L102.0,61.1 L101.0,61.6 L100.0,65.6 L99.0,67.2 L98.0,64.1 L97.0,63.9 L96.0,64.3 L95.0,61.0 L94.0,61.2 L93.0,59.2 L92.0,59.2 L91.0,59.2 L90.0,59.2 L89.0,63.1 L88.0,64.3 L87.0,62.7 L86.0,63.3 L85.0,64.5 L84.0,63.0 L83.0,63.4 L82.0,62.9 L81.0,63.0 L80.0,61.5 L79.0,63.8 L78.0,62.6 L77.0,63.2 L76.0,63.5 L75.0,62.5 L74.0,62.4 L73.0,62.3 L72.0,62.1 L71.0,63.5 L70.0,62.8 L69.0,62.0 L68.0,61.7 L67.0,63.0 L66.0,61.8 L65.0,62.4 L64.0,62.0 L63.0,62.1 L62.0,62.0 L61.0,61.2 L60.0,62.9 L59.0,62.2 L58.0,62.8 L57.0,64.6 L56.0,66.5 L55.0,66.5 L54.0,65.0 L53.0,65.4 L52.0,65.2 L51.0,59.9 L50.0,59.2 L49.0,59.2 L48.0,59.2 L47.0,59.2 L46.0,59.2 L45.0,59.2 L44.0,61.9 L43.0,62.8 L42.0,63.5 L41.0,64.1 L40.0,63.1 L39.0,62.8 L38.0,63.4 L37.0,64.0 L36.0,65.9 L35.0,66.1 L34.0,64.5 L33.0,66.3 L32.0,64.5 L31.0,65.7 L30.0,65.4 L29.0,66.9 L28.0,65.0 L27.0,65.5 L26.0,65.6 L25.0,61.7 L24.0,61.4 L23.0,62.6 L22.0,67.7 L21.0,66.1 L20.0,62.2 L19.0,63.8 L18.0,61.6 L17.0,59.2 L16.0,59.4 L15.0,62.3 L14.0,65.5 L13.0,65.9 L12.0,68.0 L11.0,64.8 L10.0,64.7 L9.0,63.2 L8.0,61.2 L7.0,59.2 L6.0,59.2 L5.0,59.2 L4.0,59.2 L3.0,59.2 L2.0,59.2 L1.0,59.2 L0.0,59.2Z" fill="#2e1010"/></svg>
</div>
<div class="a" style="left:831.5px;top:479.6px;width:1.5px;height:85.39999999999998px;background:#2e1010;opacity:0.9"></div>
<div class="a" style="left:1px;top:478.1px;width:1030px;height:100px;border:1.5px solid #7590bd;border-radius:3px"></div>
<div class="a" style="left:875.5px;top:51px;width:1.5px;height:514px;background:#8d9096"></div>
<div class="a" style="left:991.5px;top:26.5px;width:32.5px;height:538.5px;background:#24272c;border-left:1px solid #30343a"></div>
<div class="btn" style="left:1000px;top:34.3px;width:16.6px;height:16.4px;background:#6f3fd0"><svg class="a" style="left:0;top:0" width="17" height="17"><path d="M3.5 6.8h2l2.6-2.3v8l-2.6-2.3h-2z" fill="none" stroke="#e8e0fa" stroke-width="1"/><path d="M10 6.3q1 2.2 0 4.4M11.8 5.2q1.8 3.3 0 6.6" fill="none" stroke="#e8e0fa" stroke-width="1"/></svg></div>
<div class="a" style="left:993.6px;top:60px;width:6.4px;height:505px;background:#383c42"></div>
<div class="a" style="left:1001px;top:60px;width:6.2px;height:505px;background:#383c42"></div>
<div class="a" style="left:993.6px;top:94px;width:13.6px;height:1px;background:#1f2226"></div>
<div class="a" style="left:993.6px;top:141.4px;width:13.6px;height:1px;background:#b03a4a"></div>
<div class="a" style="left:993.6px;top:194.7px;width:6.4px;height:370.3px;background:linear-gradient(180deg,#e9e500 0%,#dfe300 20%,#9fe00c 45%,#22d31c 75%,#16d016 100%)"></div>
<div class="a" style="left:1001px;top:194.7px;width:6.2px;height:370.3px;background:linear-gradient(180deg,#e9e500 0%,#dfe300 20%,#9fe00c 45%,#22d31c 75%,#16d016 100%)"></div>
<div class="a" style="left:993.2px;top:58px;width:14.6px;height:14.6px;border-radius:50%;border:1.1px solid #c4c7cb;background:rgba(36,39,44,0.35)"></div>
<div class="lbl" style="left:1013.8px;top:62.4px;font-size:6.8px;color:#c4c7cb">0</div>
<div class="a" style="left:1008.6px;top:73.9px;width:2px;height:0.8px;background:#6b6f75"></div>
<div class="a" style="left:1008.6px;top:82.3px;width:2px;height:0.8px;background:#6b6f75"></div>
<div class="a" style="left:1010.2px;top:90.3px;width:2.4px;height:0.9px;background:#b9bcc0"></div>
<div class="lbl" style="left:1014px;top:87.6px;font-size:6.6px;color:#c4c7cb">3</div>
<div class="a" style="left:1008.6px;top:99.1px;width:2px;height:0.8px;background:#6b6f75"></div>
<div class="a" style="left:1008.6px;top:107.5px;width:2px;height:0.8px;background:#6b6f75"></div>
<div class="a" style="left:1010.2px;top:115.5px;width:2.4px;height:0.9px;background:#b9bcc0"></div>
<div class="lbl" style="left:1014px;top:112.8px;font-size:6.6px;color:#c4c7cb">6</div>
<div class="a" style="left:1008.6px;top:124.3px;width:2px;height:0.8px;background:#6b6f75"></div>
<div class="a" style="left:1008.6px;top:132.7px;width:2px;height:0.8px;background:#6b6f75"></div>
<div class="a" style="left:1010.2px;top:140.7px;width:2.4px;height:0.9px;background:#b9bcc0"></div>
<div class="lbl" style="left:1014px;top:138.0px;font-size:6.6px;color:#c4c7cb">9</div>
<div class="a" style="left:1008.6px;top:149.5px;width:2px;height:0.8px;background:#6b6f75"></div>
<div class="a" style="left:1008.6px;top:157.9px;width:2px;height:0.8px;background:#6b6f75"></div>
<div class="a" style="left:1010.2px;top:165.9px;width:2.4px;height:0.9px;background:#b9bcc0"></div>
<div class="lbl" style="left:1014px;top:163.2px;font-size:6.6px;color:#c4c7cb">12</div>
<div class="a" style="left:1008.6px;top:174.7px;width:2px;height:0.8px;background:#6b6f75"></div>
<div class="a" style="left:1008.6px;top:183.1px;width:2px;height:0.8px;background:#6b6f75"></div>
<div class="a" style="left:1010.2px;top:191.1px;width:2.4px;height:0.9px;background:#b9bcc0"></div>
<div class="lbl" style="left:1014px;top:188.4px;font-size:6.6px;color:#c4c7cb">15</div>
<div class="a" style="left:1008.6px;top:199.9px;width:2px;height:0.8px;background:#6b6f75"></div>
<div class="a" style="left:1008.6px;top:208.3px;width:2px;height:0.8px;background:#6b6f75"></div>
<div class="a" style="left:1010.2px;top:216.3px;width:2.4px;height:0.9px;background:#b9bcc0"></div>
<div class="lbl" style="left:1014px;top:213.6px;font-size:6.6px;color:#c4c7cb">18</div>
<div class="a" style="left:1008.6px;top:225.1px;width:2px;height:0.8px;background:#6b6f75"></div>
<div class="a" style="left:1008.6px;top:233.5px;width:2px;height:0.8px;background:#6b6f75"></div>
<div class="a" style="left:1010.2px;top:241.5px;width:2.4px;height:0.9px;background:#b9bcc0"></div>
<div class="lbl" style="left:1014px;top:238.8px;font-size:6.6px;color:#c4c7cb">21</div>
<div class="a" style="left:1008.6px;top:250.3px;width:2px;height:0.8px;background:#6b6f75"></div>
<div class="a" style="left:1008.6px;top:258.7px;width:2px;height:0.8px;background:#6b6f75"></div>
<div class="a" style="left:1010.2px;top:266.7px;width:2.4px;height:0.9px;background:#b9bcc0"></div>
<div class="lbl" style="left:1014px;top:264.0px;font-size:6.6px;color:#c4c7cb">24</div>
<div class="a" style="left:1008.6px;top:275.5px;width:2px;height:0.8px;background:#6b6f75"></div>
<div class="a" style="left:1008.6px;top:283.9px;width:2px;height:0.8px;background:#6b6f75"></div>
<div class="a" style="left:1010.2px;top:291.9px;width:2.4px;height:0.9px;background:#b9bcc0"></div>
<div class="lbl" style="left:1014px;top:289.2px;font-size:6.6px;color:#c4c7cb">27</div>
<div class="a" style="left:1008.6px;top:300.7px;width:2px;height:0.8px;background:#6b6f75"></div>
<div class="a" style="left:1008.6px;top:309.1px;width:2px;height:0.8px;background:#6b6f75"></div>
<div class="a" style="left:1010.2px;top:317.1px;width:2.4px;height:0.9px;background:#b9bcc0"></div>
<div class="lbl" style="left:1014px;top:314.4px;font-size:6.6px;color:#c4c7cb">30</div>
<div class="a" style="left:1008.6px;top:325.9px;width:2px;height:0.8px;background:#6b6f75"></div>
<div class="a" style="left:1008.6px;top:334.3px;width:2px;height:0.8px;background:#6b6f75"></div>
<div class="a" style="left:1010.2px;top:342.3px;width:2.4px;height:0.9px;background:#b9bcc0"></div>
<div class="lbl" style="left:1014px;top:339.6px;font-size:6.6px;color:#c4c7cb">33</div>
<div class="a" style="left:1008.6px;top:351.1px;width:2px;height:0.8px;background:#6b6f75"></div>
<div class="a" style="left:1008.6px;top:359.5px;width:2px;height:0.8px;background:#6b6f75"></div>
<div class="a" style="left:1010.2px;top:367.5px;width:2.4px;height:0.9px;background:#b9bcc0"></div>
<div class="lbl" style="left:1014px;top:364.8px;font-size:6.6px;color:#c4c7cb">36</div>
<div class="a" style="left:1008.6px;top:376.3px;width:2px;height:0.8px;background:#6b6f75"></div>
<div class="a" style="left:1008.6px;top:384.7px;width:2px;height:0.8px;background:#6b6f75"></div>
<div class="a" style="left:1010.2px;top:392.7px;width:2.4px;height:0.9px;background:#b9bcc0"></div>
<div class="lbl" style="left:1014px;top:390.0px;font-size:6.6px;color:#c4c7cb">39</div>
<div class="a" style="left:1008.6px;top:401.5px;width:2px;height:0.8px;background:#6b6f75"></div>
<div class="a" style="left:1008.6px;top:409.9px;width:2px;height:0.8px;background:#6b6f75"></div>
<div class="a" style="left:1010.2px;top:417.9px;width:2.4px;height:0.9px;background:#b9bcc0"></div>
<div class="lbl" style="left:1014px;top:415.2px;font-size:6.6px;color:#c4c7cb">42</div>
<div class="a" style="left:1008.6px;top:426.7px;width:2px;height:0.8px;background:#6b6f75"></div>
<div class="a" style="left:1008.6px;top:435.1px;width:2px;height:0.8px;background:#6b6f75"></div>
<div class="a" style="left:1010.2px;top:443.1px;width:2.4px;height:0.9px;background:#b9bcc0"></div>
<div class="lbl" style="left:1014px;top:440.4px;font-size:6.6px;color:#c4c7cb">45</div>
<div class="a" style="left:1008.6px;top:451.9px;width:2px;height:0.8px;background:#6b6f75"></div>
<div class="a" style="left:1008.6px;top:460.3px;width:2px;height:0.8px;background:#6b6f75"></div>
<div class="a" style="left:1010.2px;top:468.3px;width:2.4px;height:0.9px;background:#b9bcc0"></div>
<div class="lbl" style="left:1014px;top:465.6px;font-size:6.6px;color:#c4c7cb">48</div>
<div class="a" style="left:1008.6px;top:477.1px;width:2px;height:0.8px;background:#6b6f75"></div>
<div class="a" style="left:1008.6px;top:485.5px;width:2px;height:0.8px;background:#6b6f75"></div>
<div class="a" style="left:1010.2px;top:493.5px;width:2.4px;height:0.9px;background:#b9bcc0"></div>
<div class="lbl" style="left:1014px;top:490.8px;font-size:6.6px;color:#c4c7cb">51</div>
<div class="a" style="left:1008.6px;top:502.3px;width:2px;height:0.8px;background:#6b6f75"></div>
<div class="a" style="left:1008.6px;top:510.7px;width:2px;height:0.8px;background:#6b6f75"></div>
<div class="a" style="left:1010.2px;top:518.7px;width:2.4px;height:0.9px;background:#b9bcc0"></div>
<div class="lbl" style="left:1014px;top:516.0px;font-size:6.6px;color:#c4c7cb">54</div>
<div class="a" style="left:1008.6px;top:527.5px;width:2px;height:0.8px;background:#6b6f75"></div>
<div class="a" style="left:1008.6px;top:535.9px;width:2px;height:0.8px;background:#6b6f75"></div>
<div class="a" style="left:1010.2px;top:543.9px;width:2.4px;height:0.9px;background:#b9bcc0"></div>
<div class="lbl" style="left:1014px;top:541.2px;font-size:6.6px;color:#c4c7cb">57</div>
<div class="a" style="left:1008.6px;top:552.7px;width:2px;height:0.8px;background:#6b6f75"></div>
<div class="a" style="left:1008.6px;top:561.1px;width:2px;height:0.8px;background:#6b6f75"></div>
<div class="a" style="left:778.7px;top:24.3px;width:213.6px;height:184px;background:#282c32;border:1px solid #383c42;border-radius:2px;box-shadow:0 1px 3px rgba(0,0,0,0.6)"></div>
<div class="a" style="left:987.6px;top:38.6px;width:8.4px;height:8.4px;background:#282c32;border-top:1px solid #383c42;border-right:1px solid #383c42;transform:rotate(45deg)"></div>
<div class="lbl" style="left:785.8px;top:33.4px;font-size:7.45px;color:#d0d3d6">Position</div>
<div class="a" style="left:785.8px;top:43.6px;width:199.5px;height:41.4px;background:#1f2328;border:1px solid #32363c;border-radius:2px"></div>
<div class="a" style="left:792.3000000000001px;top:49.6px;width:12.6px;height:12.6px;border-radius:50%;border:1.1px solid #9a9ea4;background:#1f2328"></div>
<div class="a" style="left:792.3000000000001px;top:66.2px;width:12.6px;height:12.6px;border-radius:50%;border:1.1px solid #9a9ea4;background:#1f2328"></div><div class="a" style="left:795.0px;top:68.9px;width:7.2px;height:7.2px;border-radius:50%;background:#9b6cf5"></div>
<div class="lbl" style="left:808.4px;top:52.7px;font-size:7.57px;color:#d0d3d6">Top bar (horizontal)</div>
<div class="lbl" style="left:808.4px;top:69.3px;font-size:7.57px;color:#d0d3d6">Side bar (vertical)</div>
<div class="lbl" style="left:785.8px;top:94.8px;font-size:7.6px;color:#d0d3d6">Meter style</div>
<div class="lbl" style="left:889.2px;top:94.8px;font-size:7.65px;color:#d0d3d6">Meter type</div>
<div class="a" style="left:785.8px;top:105.7px;width:95.6px;height:58.7px;background:#1f2328;border:1px solid #32363c;border-radius:2px"></div>
<div class="a" style="left:889.2px;top:105.7px;width:96.1px;height:58.7px;background:#1f2328;border:1px solid #32363c;border-radius:2px"></div>
<div class="a" style="left:791.7px;top:111.4px;width:12.6px;height:12.6px;border-radius:50%;border:1.1px solid #9a9ea4;background:#1f2328"></div>
<div class="lbl" style="left:808.4px;top:114.4px;font-size:7.5px;color:#d0d3d6">Default</div>
<div class="a" style="left:791.7px;top:128.2px;width:12.6px;height:12.6px;border-radius:50%;border:1.1px solid #9a9ea4;background:#1f2328"></div>
<div class="lbl" style="left:808.4px;top:131.2px;font-size:7.5px;color:#d0d3d6">RMS</div>
<div class="a" style="left:791.7px;top:145.0px;width:12.6px;height:12.6px;border-radius:50%;border:1.1px solid #9a9ea4;background:#1f2328"></div><div class="a" style="left:794.4px;top:147.70000000000002px;width:7.2px;height:7.2px;border-radius:50%;background:#9b6cf5"></div>
<div class="lbl" style="left:808.4px;top:148.0px;font-size:7.5px;color:#d0d3d6">Gradient</div>
<div class="a" style="left:896.0px;top:111.4px;width:12.6px;height:12.6px;border-radius:50%;border:1.1px solid #9a9ea4;background:#1f2328"></div><div class="a" style="left:898.6999999999999px;top:114.10000000000001px;width:7.2px;height:7.2px;border-radius:50%;background:#9b6cf5"></div>
<div class="lbl" style="left:911.7px;top:114.4px;font-size:7.5px;color:#d0d3d6">Logarithmic (dB)</div>
<div class="a" style="left:896.0px;top:128.2px;width:12.6px;height:12.6px;border-radius:50%;border:1.1px solid #9a9ea4;background:#1f2328"></div>
<div class="lbl" style="left:911.7px;top:131.2px;font-size:7.5px;color:#d0d3d6">Linear (dB)</div>
<div class="a" style="left:896.0px;top:145.0px;width:12.6px;height:12.6px;border-radius:50%;border:1.1px solid #9a9ea4;background:#1f2328"></div>
<div class="lbl" style="left:911.7px;top:148.0px;font-size:7.5px;color:#d0d3d6">Linear (amp)</div>
<div class="lbl" style="left:785.8px;top:173.4px;font-size:7.4px;color:#d0d3d6">dB range</div>
<div class="a" style="left:785.8px;top:185.8px;width:199.9px;height:15.5px;background:#1f2328;border:1px solid #32363c;border-radius:2px"></div>
<div class="lbl" style="left:792.5px;top:190px;font-size:7.55px;color:#d0d3d6">-60 dB (PCM range of 10 bit samples)</div>
<div class="a" style="left:973.8px;top:191.4px;width:0;height:0;border-left:2.2px solid transparent;border-right:2.2px solid transparent;border-top:2.6px solid #e8eaec"></div>
<svg class="a" style="left:701.5px;top:183px" width="8" height="13"><path d="M1.2 1.2H6.8L4.6 5.5L4.6 7L6.8 11.6H1.2L3.4 7L3.4 5.5Z" fill="#203040" stroke="#e8eef5" stroke-width="1"/></svg>
<svg class="a" style="left:991px;top:542px" width="12" height="22"><rect x="2" y="2.3" width="3.4" height="12" rx="1.7" fill="#e6f5e6"/><circle cx="8.9" cy="8.4" r="1.9" fill="#d8f0d8"/><circle cx="6.5" cy="17.4" r="2.2" fill="#d8f0d8"/></svg>
</body></html>
